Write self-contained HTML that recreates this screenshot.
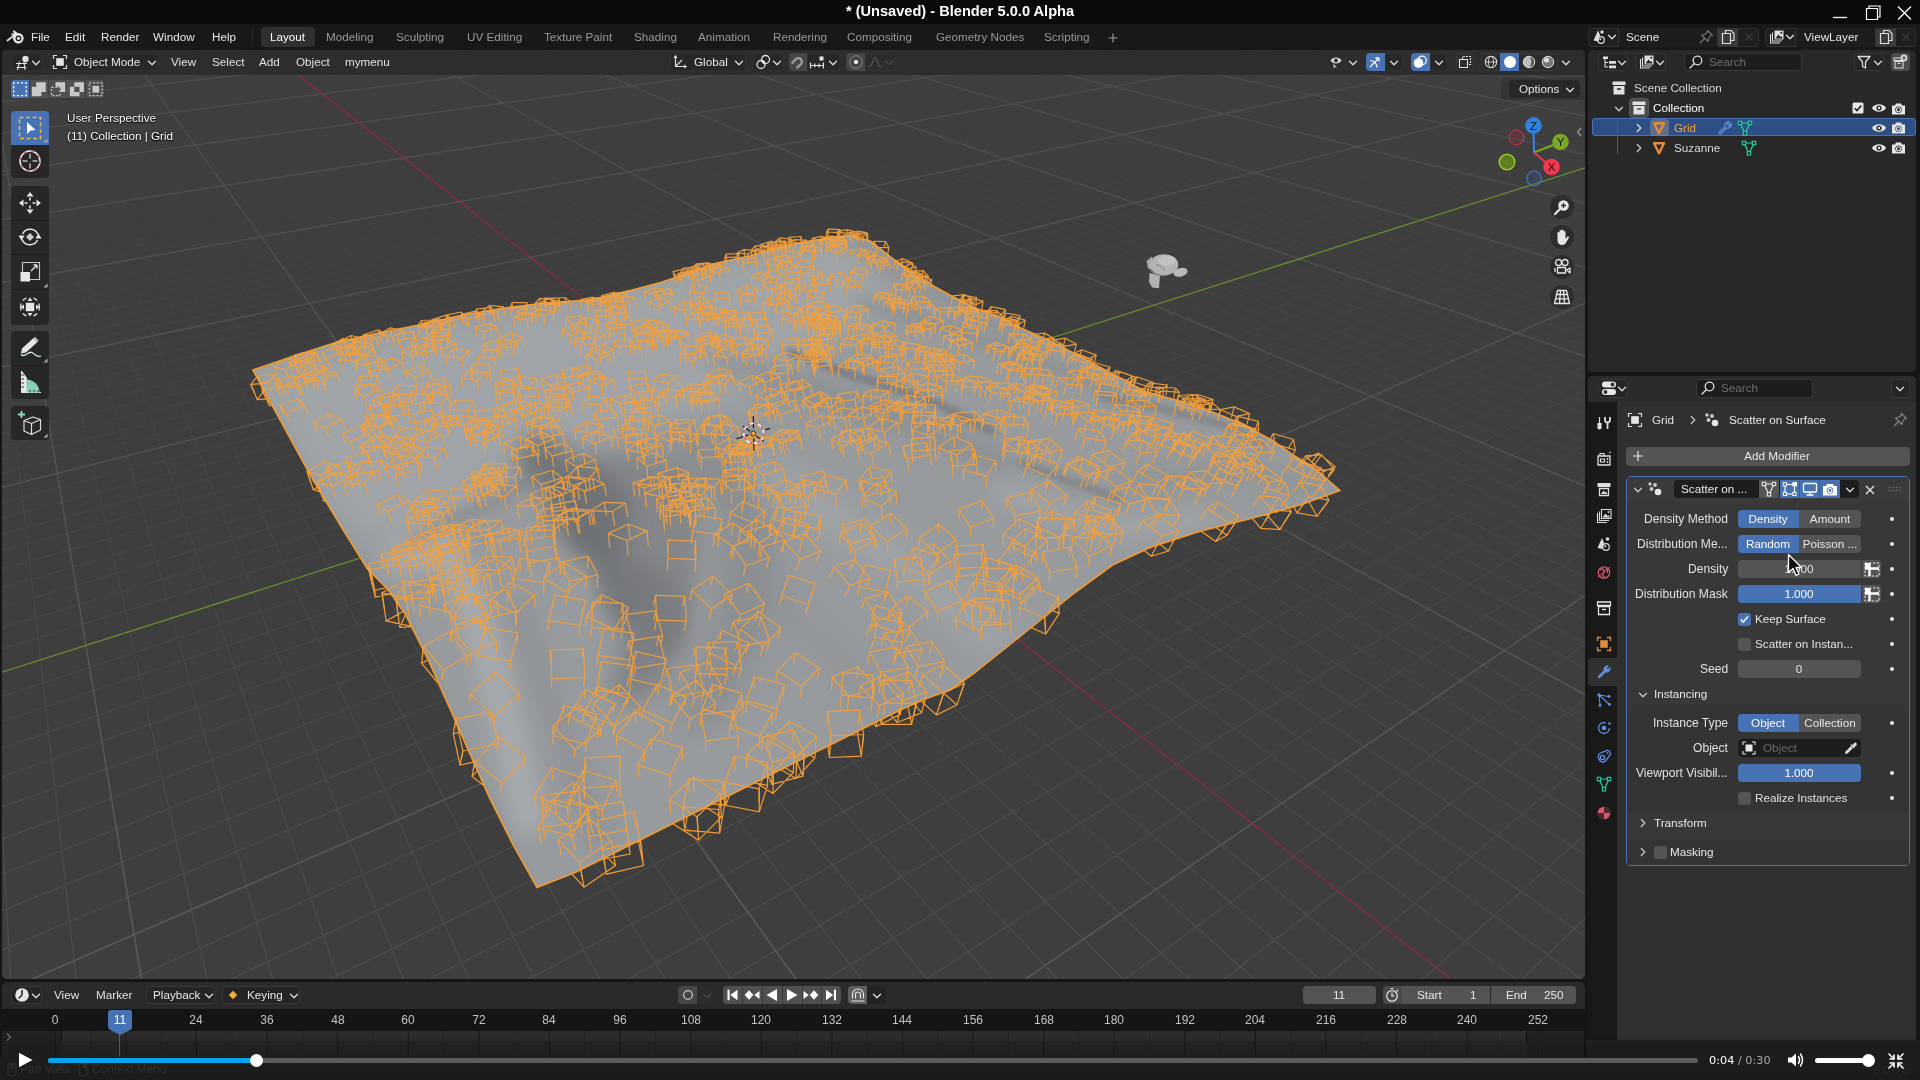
<!DOCTYPE html>
<html lang="en"><head><meta charset="utf-8"><title>Blender</title>
<style>
*{box-sizing:border-box;margin:0;padding:0}
html,body{width:1920px;height:1080px;overflow:hidden;background:#161616}
body{position:relative;font-family:"Liberation Sans",sans-serif;font-size:11.7px;color:#e0e0e0;line-height:1}
.abs,#page *{position:absolute}
#page{position:absolute;left:0;top:0;width:1920px;height:1080px;overflow:hidden;transform:translateZ(0)}
#titlebar{left:0;top:0;width:1920px;height:24px;background:#0a0a0a}
#title{will-change:transform;left:0;top:0;width:1920px;height:24px;text-align:center;font-weight:bold;font-size:14.6px;line-height:23px;color:#fff}
#menubar{left:0;top:24px;width:1920px;height:26px;background:#181818}
#vpwrap{left:2px;top:50px;width:1583px;height:929px;border-radius:5px;overflow:hidden;background:#3e3e3e}
#vp{left:0;top:0}
#vphead{left:0;top:0;width:1582px;height:25px;background:rgba(46,46,46,0.93)}
#timeline{left:2px;top:982px;width:1582px;height:75px;border-radius:5px 5px 0 0;background:#1c1c1c;overflow:hidden}
#outliner{left:1588px;top:50px;width:328px;height:322px;border-radius:5px;background:#282828;overflow:hidden}
#props{left:1588px;top:376px;width:328px;height:690px;border-radius:5px;background:#303030;overflow:hidden}
#vidbar{left:0;top:1040px;width:1920px;height:40px;background:rgba(20,20,20,0.72)}
.t{white-space:nowrap;line-height:14px;height:14px;will-change:transform}

</style></head>
<body>
<div id="page">
<div id="titlebar"></div>
<div id="title">* (Unsaved) - Blender 5.0.0 Alpha</div>
<div id="menubar"></div>
<svg style="left:1828px;top:2px;" width="90" height="20" viewBox="0 0 90 20"><path d="M5 15.5H19" stroke="#fff" stroke-width="1.3"/><path d="M38.5 6.5H49.5V17.5H38.5Z" fill="none" stroke="#fff" stroke-width="1.2"/><path d="M41 6.5V4H52V15H49.5" fill="none" stroke="#fff" stroke-width="1.2"/><path d="M70 4.5L83 17.5M83 4.5L70 17.5" stroke="#fff" stroke-width="1.3"/></svg>
<svg style="left:6px;top:29px;" width="20" height="16" viewBox="0 0 20 16"><path d="M1.5 11.5L9.5 5.3L6.2 5.3M9.5 5.3L7.8 2.2L12 5.5" fill="none" stroke="#e6e6e6" stroke-width="1.7" stroke-linecap="round" stroke-linejoin="round"/><circle cx="12.3" cy="9.3" r="5.3" fill="#e6e6e6"/><circle cx="12.5" cy="9.3" r="2.9" fill="#181818"/><circle cx="12.5" cy="9.3" r="1.6" fill="#e6e6e6"/></svg>
<div class="t" style="left:31px;top:30px;color:#e6e6e6">File</div>
<div class="t" style="left:65px;top:30px;color:#e6e6e6">Edit</div>
<div class="t" style="left:101px;top:30px;color:#e6e6e6">Render</div>
<div class="t" style="left:153px;top:30px;color:#e6e6e6">Window</div>
<div class="t" style="left:212px;top:30px;color:#e6e6e6">Help</div>
<div style="left:252px;top:29px;width:1px;height:17px;background:#2e2e2e"></div>
<div style="left:260.5px;top:27px;width:54px;height:20px;background:#303030;border-radius:4px"></div>
<div class="t" style="left:270px;top:30px;color:#fff">Layout</div>
<div class="t" style="left:326px;top:30px;color:#989898">Modeling</div>
<div class="t" style="left:396px;top:30px;color:#989898">Sculpting</div>
<div class="t" style="left:467px;top:30px;color:#989898">UV Editing</div>
<div class="t" style="left:544px;top:30px;color:#989898">Texture Paint</div>
<div class="t" style="left:634px;top:30px;color:#989898">Shading</div>
<div class="t" style="left:698px;top:30px;color:#989898">Animation</div>
<div class="t" style="left:773px;top:30px;color:#989898">Rendering</div>
<div class="t" style="left:847px;top:30px;color:#989898">Compositing</div>
<div class="t" style="left:936px;top:30px;color:#989898">Geometry Nodes</div>
<div class="t" style="left:1044px;top:30px;color:#989898">Scripting</div>
<svg style="left:1107px;top:31.5px;" width="12" height="12" viewBox="0 0 12 12"><path d="M6 1.5V10.5M1.5 6H10.5" stroke="#999" stroke-width="1.2"/></svg>
<div style="left:1587.5px;top:27.5px;width:171.5px;height:19px;background:#1f1f1f;border-radius:4px;border:1px solid #333"></div>
<div style="left:1618px;top:27.5px;width:100px;height:19px;background:#1d1d1d;border-left:1px solid #333;border-right:1px solid #333"></div>
<div style="left:1718px;top:28.5px;width:20px;height:17px;background:#3a3a3a"></div>
<svg style="left:1592px;top:29px;" width="16" height="16" viewBox="0 0 16 16"><path d="M1.5 11.5L6 1.5L8 6L6.5 12.5Z" fill="#ddd"/><circle cx="10" cy="3" r="1.7" fill="#ddd"/><circle cx="9" cy="11" r="3.3" fill="none" stroke="#ddd" stroke-width="1.2"/><circle cx="8.3" cy="10.3" r="1" fill="#ddd"/></svg>
<svg style="left:1607px;top:33px;" width="10" height="8" viewBox="0 0 10 8"><path d="M1.5 2.3L5 5.8L8.5 2.3" fill="none" stroke="#ddd" stroke-width="1.3" stroke-linecap="round" stroke-linejoin="round"/></svg>
<div class="t" style="left:1626px;top:30px;color:#e6e6e6">Scene</div>
<svg style="left:1698px;top:29px;" width="16" height="16" viewBox="0 0 16 16"><path d="M9.5 1.5L14.5 6.5L12.5 7L10.5 9.5L10 12.5L3.5 6L6.5 5.5L9 3.5ZM6.5 9.5L2 14" fill="none" stroke="#777" stroke-width="1.1" stroke-linejoin="round"/></svg>
<svg style="left:1720px;top:29px;" width="16" height="16" viewBox="0 0 16 16"><path d="M5.5 4.5V1.5H11L14 4.5V11.5H10.5" fill="none" stroke="#ddd" stroke-width="1.2"/><path d="M2.5 4.5H10.5V14.5H2.5Z" fill="none" stroke="#ddd" stroke-width="1.2"/></svg>
<svg style="left:1743px;top:31px;" width="12" height="12" viewBox="0 0 12 12"><path d="M2.5 2.5L9.5 9.5M9.5 2.5L2.5 9.5" stroke="#3a3a3a" stroke-width="1.3"/></svg>
<div style="left:1764.5px;top:27.5px;width:151.5px;height:19px;background:#1f1f1f;border-radius:4px;border:1px solid #333"></div>
<div style="left:1795px;top:27.5px;width:80.5px;height:19px;background:#1d1d1d;border-left:1px solid #333;border-right:1px solid #333"></div>
<div style="left:1875.5px;top:28.5px;width:20px;height:17px;background:#3a3a3a"></div>
<svg style="left:1768px;top:29px;" width="18" height="16" viewBox="0 0 18 16"><path d="M2.5 5V14H12" fill="none" stroke="#ddd" stroke-width="1.1"/><path d="M4.5 3.5V12H14" fill="none" stroke="#ddd" stroke-width="1.1"/><path d="M6.5 1.5H15.5V10.5H6.5Z" fill="#ddd"/><path d="M7.5 9.5L10.5 5.5L12.5 8L13.5 7L14.5 9.5Z" fill="#1f1f1f"/><circle cx="13.3" cy="3.8" r="1" fill="#1f1f1f"/></svg>
<svg style="left:1784.5px;top:33px;" width="10" height="8" viewBox="0 0 10 8"><path d="M1.5 2.3L5 5.8L8.5 2.3" fill="none" stroke="#ddd" stroke-width="1.3" stroke-linecap="round" stroke-linejoin="round"/></svg>
<div class="t" style="left:1803.5px;top:30px;color:#e6e6e6">ViewLayer</div>
<svg style="left:1877.5px;top:29px;" width="16" height="16" viewBox="0 0 16 16"><path d="M5.5 4.5V1.5H11L14 4.5V11.5H10.5" fill="none" stroke="#ddd" stroke-width="1.2"/><path d="M2.5 4.5H10.5V14.5H2.5Z" fill="none" stroke="#ddd" stroke-width="1.2"/></svg>
<svg style="left:1900px;top:31px;" width="12" height="12" viewBox="0 0 12 12"><path d="M2.5 2.5L9.5 9.5M9.5 2.5L2.5 9.5" stroke="#3a3a3a" stroke-width="1.3"/></svg>
<div id="vpwrap">
<svg id="vp" width="1583" height="929" viewBox="0 0 1583 929">
<defs>
<linearGradient id="gmg" x1="0" y1="0" x2="0" y2="1"><stop offset="0" stop-color="#fff" stop-opacity="0.08"/><stop offset="0.35" stop-color="#fff" stop-opacity="0.32"/><stop offset="1" stop-color="#fff" stop-opacity="1"/></linearGradient>
<linearGradient id="gMg" x1="0" y1="0" x2="0" y2="1"><stop offset="0" stop-color="#fff" stop-opacity="0.45"/><stop offset="1" stop-color="#fff" stop-opacity="1"/></linearGradient>
<mask id="gm"><rect width="1583" height="929" fill="url(#gmg)"/></mask>
<mask id="gM"><rect width="1583" height="929" fill="url(#gMg)"/></mask>
<clipPath id="mc"><path d="M250.9 320L290.5 306.5L332.2 292.9L373.8 283.5L415.5 275.2L457.2 265.8L498.8 258.5L540.5 253.3L582.2 250.2L598 247.5L629.3 240.2L660.5 231.9L687.6 222.5L714.7 213.1L748 205.8L775.1 197.5L806.3 191.3L827.2 188.1L848 185L868.8 191.3L889.7 207.9L910.5 222.5L931.3 236L952.2 247.5L973 257.9L988.4 262.9L1019.7 278.5L1050.9 292.1L1082.2 308.8L1113.4 325.4L1144.7 342.1L1175.9 350.4L1207.2 360.8L1238.4 373.3L1269.7 390L1290.5 404.6L1311.3 417.1L1338 440.5L1298 455L1248 468.8L1198 481.3L1148 497.5L1110.5 515L1073 542.5L1048 562.5L1023 582.5L998 602.5L973 622.5L948 640L923 649L898 660L848 685L773 722.5L698 760L623 797.5L573 822.5L535 837.5L510.6 793.9L487.7 748.1L467.3 702.3L447 656.4L426.6 610.6L403.7 564.8L385.8 539.3L365.5 519L340 478.2L309.5 427.3L278.9 371.3Z"/></clipPath>
<filter id="b6" filterUnits="userSpaceOnUse" x="0" y="0" width="1600" height="1000"><feGaussianBlur stdDeviation="6"/></filter>
<filter id="b10" filterUnits="userSpaceOnUse" x="0" y="0" width="1600" height="1000"><feGaussianBlur stdDeviation="10"/></filter>
<filter id="b16" filterUnits="userSpaceOnUse" x="0" y="0" width="1600" height="1000"><feGaussianBlur stdDeviation="16"/></filter>
<filter id="b3" filterUnits="userSpaceOnUse" x="0" y="0" width="1600" height="1000"><feGaussianBlur stdDeviation="3"/></filter>
</defs>
<rect width="1583" height="929" fill="#3e3e3e"/>
<path d="M-5 -3.4L13 -5M-5 -1.5L33.8 -5M-5 0.5L54.6 -5M-5 2.5L75.4 -5M-5 6.5L117 -5M-5 8.6L137.8 -5M-5 10.7L158.6 -5M-5 12.8L179.4 -5M-5 15L200.2 -5M-5 17.2L221.1 -5M-5 19.4L241.9 -5M-5 21.7L262.7 -5M-5 24L283.5 -5M-5 28.7L325.1 -5M-5 31.2L345.9 -5M-5 33.7L366.7 -5M-5 36.2L387.5 -5M-5 38.8L408.3 -5M-5 41.4L429.1 -5M-5 44L449.9 -5M-5 46.7L470.7 -5M-5 49.5L491.5 -5M-5 55.2L533.1 -5M-5 58.1L554 -5M-5 61.1L574.8 -5M-5 64.1L595.6 -5M-5 67.2L616.4 -5M-5 70.4L637.2 -5M-5 73.6L658 -5M-5 76.9L678.8 -5M-5 80.2L699.6 -5M-5 87.1L741.2 -5M-5 90.7L762 -5M-5 94.3L782.8 -5M-5 98L803.6 -5M-5 101.8L824.4 -5M-5 105.7L845.2 -5M-5 109.7L866 -5M-5 113.7L886.8 -5M-5 117.9L907.7 -5M-5 126.4L949.3 -5M-5 130.9L970.1 -5M-5 135.4L990.9 -5M-5 140.1L1011.7 -5M-5 144.9L1032.5 -5M-5 149.7L1053.3 -5M-5 154.7L1074.1 -5M-5 159.9L1094.9 -5M-5 165.1L1115.7 -5M-5 176.1L1157.3 -5M-5 181.8L1178.1 -5M-5 187.6L1198.9 -5M-5 193.6L1219.7 -5M-5 199.8L1240.6 -5M-5 206.1L1261.4 -5M-5 212.6L1282.2 -5M-5 219.3L1303 -5M-5 226.2L1323.8 -5M-5 240.7L1365.4 -5M-5 248.2L1386.2 -5M-5 256L1407 -5M-5 264L1427.8 -5M-5 272.3L1448.6 -5M-5 280.9L1469.4 -5M-5 289.7L1490.2 -5M-5 298.9L1511 -5M-5 685.9L8.8 934M-5 308.3L1531.8 -5M-5 218.3L74.6 934M-5 328.2L1573.4 -5M-2.4 -5L206 934M-5 338.7L1588 -3.7M11.3 -5L271.8 934M-5 349.6L1588 0.9M25 -5L337.5 934M-5 360.9L1588 5.7M38.7 -5L403.2 934M-5 372.6L1588 10.6M52.4 -5L468.9 934M-5 384.8L1588 15.7M66.1 -5L534.7 934M-5 397.4L1588 21.1M79.8 -5L600.4 934M-5 410.6L1588 26.6M93.5 -5L666.1 934M-5 424.3L1588 32.4M107.2 -5L731.9 934M-5 453.5L1588 44.7M134.7 -5L863.3 934M-5 469.1L1588 51.2M148.4 -5L929.1 934M-5 485.4L1588 58.1M162.1 -5L994.8 934M-5 502.4L1588 65.2M175.8 -5L1060.5 934M-5 520.2L1588 72.7M189.5 -5L1126.2 934M-5 538.9L1588 80.6M203.2 -5L1192 934M-5 558.6L1588 88.9M216.9 -5L1257.7 934M-5 579.2L1588 97.5M230.6 -5L1323.4 934M-5 600.9L1588 106.7M244.3 -5L1389.2 934M-5 647.8L1588 126.4M271.7 -5L1520.6 934M-5 673.3L1588 137.2M285.4 -5L1586.3 934M-5 700.3L1588 148.5M299.1 -5L1588 889.5M-5 728.9L1588 160.5M312.9 -5L1588 847.2M-5 759.2L1588 173.3M326.6 -5L1588 808M-5 791.5L1588 186.9M340.3 -5L1588 771.4M-5 825.9L1588 201.4M354 -5L1588 737.3M-5 862.7L1588 216.8M367.7 -5L1588 705.4M-5 902L1588 233.4M381.4 -5L1588 675.5M118.4 934L1588 270.3M408.8 -5L1588 620.9M218.2 934L1588 290.9M422.5 -5L1588 595.9M317.9 934L1588 313.3M436.2 -5L1588 572.4M417.7 934L1588 337.5M449.9 -5L1588 550.1M517.5 934L1588 363.9M463.6 -5L1588 529M617.2 934L1588 392.8M477.3 -5L1588 508.9M717 934L1588 424.6M491.1 -5L1588 489.9M816.8 934L1588 459.6M504.8 -5L1588 471.8M916.5 934L1588 498.4M518.5 -5L1588 454.6M1116.1 934L1588 590.4M545.9 -5L1588 422.4M1215.8 934L1588 645.3M559.6 -5L1588 407.4M1315.6 934L1588 708M573.3 -5L1588 393.1M1415.4 934L1588 780M587 -5L1588 379.4M1515.1 934L1588 863.7M600.7 -5L1588 366.2M614.4 -5L1588 353.6M628.1 -5L1588 341.5M641.8 -5L1588 329.8M655.5 -5L1588 318.6M683 -5L1588 297.5M696.7 -5L1588 287.5M710.4 -5L1588 277.8M724.1 -5L1588 268.5M737.8 -5L1588 259.6M751.5 -5L1588 250.9M765.2 -5L1588 242.5M778.9 -5L1588 234.4M792.6 -5L1588 226.5M820 -5L1588 211.6M833.7 -5L1588 204.4M847.4 -5L1588 197.5M861.2 -5L1588 190.8M874.9 -5L1588 184.3M888.6 -5L1588 177.9M902.3 -5L1588 171.8M916 -5L1588 165.8M929.7 -5L1588 160M957.1 -5L1588 148.9M970.8 -5L1588 143.5M984.5 -5L1588 138.3M998.2 -5L1588 133.2M1011.9 -5L1588 128.3M1025.6 -5L1588 123.5M1039.4 -5L1588 118.8M1053.1 -5L1588 114.2M1066.8 -5L1588 109.7M1094.2 -5L1588 101.1M1107.9 -5L1588 96.9M1121.6 -5L1588 92.9M1135.3 -5L1588 88.9M1149 -5L1588 85M1162.7 -5L1588 81.2M1176.4 -5L1588 77.5M1190.1 -5L1588 73.9M1203.8 -5L1588 70.4M1231.3 -5L1588 63.5M1245 -5L1588 60.2M1258.7 -5L1588 56.9M1272.4 -5L1588 53.7M1286.1 -5L1588 50.6M1299.8 -5L1588 47.5M1313.5 -5L1588 44.5M1327.2 -5L1588 41.6M1340.9 -5L1588 38.7M1368.3 -5L1588 33.1M1382 -5L1588 30.4M1395.7 -5L1588 27.7M1409.5 -5L1588 25.1M1423.2 -5L1588 22.5M1436.9 -5L1588 20M1450.6 -5L1588 17.5M1464.3 -5L1588 15.1M1478 -5L1588 12.7M1505.4 -5L1588 8.1M1519.1 -5L1588 5.8M1532.8 -5L1588 3.6M1546.5 -5L1588 1.4M1560.2 -5L1588 -0.8M1573.9 -5L1588 -2.9M1587.7 -5L1588 -4.9" stroke="#4d4d4d" stroke-width="1.4" fill="none" mask="url(#gm)"/>
<path d="M-5 4.5L96.2 -5M-5 26.3L304.3 -5M-5 52.3L512.3 -5M-5 83.6L720.4 -5M-5 122.1L928.5 -5M-5 170.5L1136.5 -5M-5 233.4L1344.6 -5M-5 318.1L1552.6 -5M-5 61.8L140.3 934M-5 438.6L1588 38.4M120.9 -5L797.6 934M18.6 934L1588 251.2M395.1 -5L1588 647.3M1016.3 934L1588 541.8M532.2 -5L1588 438.1M669.2 -5L1588 307.9M806.3 -5L1588 218.9M943.4 -5L1588 154.4M1080.5 -5L1588 105.4M1217.5 -5L1588 66.9M1354.6 -5L1588 35.9M1491.7 -5L1588 10.4" stroke="#5c5c5c" stroke-width="1.5" fill="none" mask="url(#gM)"/>
<path d="M258 -5L1454.9 934" stroke="#8c2c3f" stroke-width="1.3" fill="none"/>
<path d="M-5 623.7L1588 116.3" stroke="#6a8f2a" stroke-width="1.3" fill="none"/>
<path d="M272.4 348.3L278.7 339.6L261.9 340.8L255.3 349.5ZM266.1 333.2L272.4 348.3M272.6 324.6L278.7 339.6M255.7 325.8L261.9 340.8M248.9 334.4L255.3 349.5M282.5 353.5L300.4 347.9L298.3 340.4L280.6 345.9ZM275.5 338.5L282.5 353.5M293.7 332.9L300.4 347.9M291.6 325.5L298.3 340.4M273.6 331.1L280.6 345.9M266 348.1L267.5 355.7L285.6 350.2L283.9 342.6ZM259 333.2L266 348.1M260.4 340.8L267.5 355.7M278.7 335.2L285.6 350.2M277 327.8L283.9 342.6M308.7 371.1L302.6 364.2L284.6 371.3L290.6 378.3ZM302.3 355.5L308.7 371.1M296.1 348.8L302.6 364.2M277.9 355.8L284.6 371.3M283.9 362.7L290.6 378.3M324.8 443.9L342.1 434.2L328.7 430L311.3 439.5ZM318.5 425.4L324.8 443.9M336 416L342.1 434.2M322.5 411.8L328.7 430M304.9 421.2L311.3 439.5M354.3 429.8L332.5 434.5L332.2 444.1L354.3 439.2ZM348.2 411.6L354.3 429.8M326.3 416.3L332.5 434.5M325.8 425.7L332.2 444.1M348.1 420.9L354.3 439.2M1307 432.9L1287.2 426.9L1290.8 440.6L1310.9 446.6ZM1319 417.7L1307 432.9M1298.9 411.6L1287.2 426.9M1302.8 425.2L1290.8 440.6M1323.1 431.4L1310.9 446.6M353.5 445.1L338.9 441L321.7 450.8L336.3 455.2ZM347.6 426.4L353.5 445.1M333 422.3L338.9 441M315.5 432L321.7 450.8M330.2 436.2L336.3 455.2M1295 462.9L1315 466.3L1307 451.7L1287.3 448.3ZM1306.7 446.6L1295 462.9M1326.9 450.1L1315 466.3M1318.6 435.6L1307 451.7M1298.7 432.1L1287.3 448.3M1270.9 448.8L1250.3 441.8L1253.8 455.1L1274.6 462.2ZM1283.2 432.5L1270.9 448.8M1262.4 425.3L1250.3 441.8M1266.1 438.5L1253.8 455.1M1287.2 445.8L1274.6 462.2M1265.4 465.4L1246.6 464L1258.8 478.3L1277.8 479.6ZM1276.5 447.3L1265.4 465.4M1257.5 445.8L1246.6 464M1270 459.9L1258.8 478.3M1289.3 461.4L1277.8 479.6M1224.9 485.2L1204.7 470.9L1193.4 477L1213.7 491.6ZM1237.1 466.5L1224.9 485.2M1216.5 452.3L1204.7 470.9M1205.2 458.2L1193.4 477M1226 472.7L1213.7 491.6M1149.3 506.3L1166.4 501L1147.6 485.6L1130.6 490.7ZM1159.4 486L1149.3 506.3M1176.6 480.8L1166.4 501M1157.4 465.6L1147.6 485.6M1140.3 470.5L1130.6 490.7M1084.9 524.3L1107.4 513.8L1091 496.9L1068.8 507.1ZM1087.1 506.4L1084.9 524.3M1109.9 495.8L1107.4 513.8M1093.2 478.9L1091 496.9M1070.6 489.2L1068.8 507.1M412 522.9L385 530L389.8 535.7L417.4 528.4ZM406.1 497.9L412 522.9M378.8 504.8L385 530M383.5 510.1L389.8 535.7M411.4 503L417.4 528.4M373.2 547.1L402.7 540.7L401.8 534L372.9 540.2ZM366.9 520.2L373.2 547.1M396.7 514L402.7 540.7M395.9 507.9L401.8 534M366.8 513.9L372.9 540.2M1057.2 563.4L1032.1 552.8L1018.6 572.9L1043.8 584ZM1056.3 547.2L1057.2 563.4M1030.8 536.6L1032.1 552.8M1016.9 557L1018.6 572.9M1042.6 568L1043.8 584M979.8 568.4L981.6 591.4L1009.9 589.4L1007.7 566.3ZM977.7 552.5L979.8 568.4M979.5 575.7L981.6 591.4M1008.4 573.5L1009.9 589.4M1006.1 550.2L1007.7 566.3M445.3 566.8L442.3 554.8L411.1 559.7L413.3 572ZM441.8 539L445.3 566.8M438.9 527.6L442.3 554.8M407.3 532.3L411.1 559.7M409.5 544L413.3 572M405.9 558.7L384.2 570.9L408.4 576.2L429.7 563.8ZM402 531.2L405.9 558.7M380 542.8L384.2 570.9M404.4 547.8L408.4 576.2M426 536L429.7 563.8M404.2 563.2L397.8 577.3L430 575.9L435.6 561.9ZM400.6 535.7L404.2 563.2M394 549.2L397.8 577.3M426.6 547.9L430 575.9M432.3 534.5L435.6 561.9M419 576.9L449.3 583.8L460.7 562.3L431.1 555.6ZM417.8 555.3L419 576.9M448.7 562.4L449.3 583.8M460.4 541L460.7 562.3M430.2 534.1L431.1 555.6M914 646.4L934.4 665L954.9 654.9L934.5 636.7ZM920.9 624.5L914 646.4M941.7 643L934.4 665M962.4 633.1L954.9 654.9M941.6 615L934.5 636.7M902.2 642.6L878 651.9L895.1 672.5L919.6 662.7ZM907.2 621.6L902.2 642.6M882.6 630.7L878 651.9M900.1 651.2L895.1 672.5M924.9 641.6L919.6 662.7M874.1 676.6L898.3 664.3L880 644.7L856 656.5ZM877 655.9L874.1 676.6M901.6 643.7L898.3 664.3M882.9 624.1L880 644.7M858.5 635.8L856 656.5M875.4 651.2L879.3 674.1L909.6 674.3L904.9 651.5ZM879.4 630.1L875.4 651.2M883.6 652.9L879.3 674.1M914.3 653.2L909.6 674.3M909.5 630.5L904.9 651.5M447.4 597.2L419.6 613.4L439.2 636.6L466.8 619.9ZM449.9 580.2L447.4 597.2M421.5 596.4L419.6 613.4M441.6 620L439.2 636.6M469.8 603.2L466.8 619.9M827.4 707.5L859.3 706.2L855.4 681.8L824.2 683ZM829.1 685.7L827.4 707.5M861.6 684.5L859.3 706.2M857.5 660.2L855.4 681.8M825.8 661.3L824.2 683M767.5 712.8L793.9 728.6L812.9 708L786.8 692.9ZM768 690.9L767.5 712.8M794.9 706.7L793.9 728.6M814.2 686.2L812.9 708M787.6 671L786.8 692.9M769.7 734.3L801.1 726.2L790.4 701.8L759.6 709.4ZM770.2 712.2L769.7 734.3M802.2 704.2L801.1 726.2M791.3 679.8L790.4 701.8M759.9 687.4L759.6 709.4M744.8 726.9L771 743.5L791.3 722.7L765.4 706.7ZM744.8 704.7L744.8 726.9M771.4 721.3L771 743.5M792.2 700.5L791.3 722.7M765.8 684.6L765.4 706.7M485.7 676.9L451.3 683.7L458 715L492.9 707.6ZM489.1 662.3L485.7 676.9M453.9 669.1L451.3 683.7M460.9 701L458 715M496.5 693.6L492.9 707.6M520.2 722.1L493.7 701.7L470.1 726.4L497 747.4ZM524.1 707.7L520.2 722.1M496.9 686.9L493.7 701.7M472.8 711.9L470.1 726.4M500.4 733.3L497 747.4M733.1 729.2L723.9 755.3L757.2 761.8L765.6 735.4ZM732.5 706.3L733.1 729.2M723.2 732.3L723.9 755.3M757.1 738.8L757.2 761.8M765.6 712.5L765.6 735.4M717.7 783L722.6 754.8L688.3 752.2L682.6 780.2ZM716.7 759.5L717.7 783M721.7 731.4L722.6 754.8M686.8 728.8L688.3 752.2M680.9 756.8L682.6 780.2M696.6 790.2L719.3 767.1L692.6 750.4L669.6 772.8ZM695.1 766.7L696.6 790.2M718.4 743.6L719.3 767.1M691.2 727L692.6 750.4M667.7 749.4L669.6 772.8M591.2 811L628.1 804.1L624.5 775.4L588.6 782.1ZM587 786.9L591.2 811M624.6 779.9L628.1 804.1M621.1 751.4L624.5 775.4M584.4 758L588.6 782.1M641.5 815.5L635.4 786.6L599.2 794.9L604.4 824.2ZM638.5 791.1L641.5 815.5M632.4 762.3L635.4 786.6M595.5 770.6L599.2 794.9M600.6 799.9L604.4 824.2M613.4 815.6L592.3 793.7L561.2 814.3L582 837.2ZM609.5 790.9L613.4 815.6M588.1 769.1L592.3 793.7M556.3 789.7L561.2 814.3M577.4 812.4L582 837.2" stroke="#f39a30" stroke-width="1.2" fill="none"/>
<path d="M250.9 320L290.5 306.5L332.2 292.9L373.8 283.5L415.5 275.2L457.2 265.8L498.8 258.5L540.5 253.3L582.2 250.2L598 247.5L629.3 240.2L660.5 231.9L687.6 222.5L714.7 213.1L748 205.8L775.1 197.5L806.3 191.3L827.2 188.1L848 185L868.8 191.3L889.7 207.9L910.5 222.5L931.3 236L952.2 247.5L973 257.9L988.4 262.9L1019.7 278.5L1050.9 292.1L1082.2 308.8L1113.4 325.4L1144.7 342.1L1175.9 350.4L1207.2 360.8L1238.4 373.3L1269.7 390L1290.5 404.6L1311.3 417.1L1338 440.5L1298 455L1248 468.8L1198 481.3L1148 497.5L1110.5 515L1073 542.5L1048 562.5L1023 582.5L998 602.5L973 622.5L948 640L923 649L898 660L848 685L773 722.5L698 760L623 797.5L573 822.5L535 837.5L510.6 793.9L487.7 748.1L467.3 702.3L447 656.4L426.6 610.6L403.7 564.8L385.8 539.3L365.5 519L340 478.2L309.5 427.3L278.9 371.3Z" fill="#979b9e"/>
<g clip-path="url(#mc)"><g transform="translate(-2,-50)" fill="none" stroke-linecap="round" stroke-linejoin="round">
<!-- plateau slightly lighter/bluish upper-left -->
<path d="M250 370L600 298L850 236L900 300L700 420L520 450L420 560L340 520Z" fill="#a3a7aa" filter="url(#b16)" opacity=".8"/>
<!-- main dark valley (upper part strongest) -->
<path d="M540 456L565 482L590 521L612 560L628 600" stroke="#6b6e71" stroke-width="44" filter="url(#b10)" opacity=".8"/>
<path d="M628 600L640 645L628 685" stroke="#777a7d" stroke-width="36" filter="url(#b10)" opacity=".6"/>
<path d="M560 460L640 452L690 470L700 540L690 620L660 690L625 700L640 640L620 570L585 510Z" fill="#7b7e81" filter="url(#b10)" opacity=".7"/>
<path d="M690 450L735 480L752 560L735 650L700 710" stroke="#808386" stroke-width="44" filter="url(#b16)" opacity=".6"/>
<ellipse cx="590" cy="512" rx="40" ry="46" fill="#6c6f72" filter="url(#b10)" opacity=".75" transform="rotate(-25 590 512)"/>
<ellipse cx="655" cy="610" rx="30" ry="50" fill="#74777a" filter="url(#b10)" opacity=".6" transform="rotate(-20 655 610)"/>
<!-- light tube left of valley -->
<path d="M400 560L440 545L470 600L490 660L510 740L530 820" stroke="#abafb2" stroke-width="32" filter="url(#b10)" opacity=".8"/>
<!-- darker strip between tube and valley lower part -->
<path d="M520 610L545 690L575 770L600 840" stroke="#888b8e" stroke-width="24" filter="url(#b10)" opacity=".55"/>
<!-- darker along far-left front edge -->
<path d="M395 610L430 690L470 780L505 850" stroke="#878a8d" stroke-width="12" filter="url(#b6)" opacity=".5"/>
<!-- ridge shadow under plateau edge (left) -->
<path d="M410 545L450 520L500 500L540 470" stroke="#777a7d" stroke-width="9" filter="url(#b6)" opacity=".5"/>
<!-- upper right streaks -->
<path d="M790 352L843 372L935 402L993 432" stroke="#696c6f" stroke-width="7" filter="url(#b3)" opacity=".7"/>
<path d="M720 360L780 380L900 420L1000 462" stroke="#838689" stroke-width="24" filter="url(#b10)" opacity=".5"/>
<path d="M1020 462L1072 482L1118 498" stroke="#717477" stroke-width="7" filter="url(#b3)" opacity=".6"/>
<path d="M1100 396L1160 408L1218 423L1262 443" stroke="#717477" stroke-width="7" filter="url(#b3)" opacity=".6"/>
<path d="M860 300L950 330L1050 365L1120 395" stroke="#85888b" stroke-width="12" filter="url(#b6)" opacity=".5"/>
<!-- soft diagonal bands center/right -->
<path d="M760 470L900 560L1000 640" stroke="#a7abae" stroke-width="34" filter="url(#b16)" opacity=".6"/>
<path d="M720 560L830 650L900 720" stroke="#8b8e91" stroke-width="30" filter="url(#b16)" opacity=".5"/>
<path d="M1000 490L1100 530L1200 520" stroke="#a8acaf" stroke-width="24" filter="url(#b10)" opacity=".5"/>
<path d="M1130 480L1230 470L1320 488" stroke="#898c8f" stroke-width="16" filter="url(#b10)" opacity=".5"/>
<path d="M850 240L900 275L960 305L1010 330" stroke="#8b8e91" stroke-width="16" filter="url(#b6)" opacity=".45"/>
</g>
</g>
<path d="M250.9 320L290.5 306.5L332.2 292.9L373.8 283.5L415.5 275.2L457.2 265.8L498.8 258.5L540.5 253.3L582.2 250.2L598 247.5L629.3 240.2L660.5 231.9L687.6 222.5L714.7 213.1L748 205.8L775.1 197.5L806.3 191.3L827.2 188.1L848 185L868.8 191.3L889.7 207.9L910.5 222.5L931.3 236L952.2 247.5L973 257.9L988.4 262.9L1019.7 278.5L1050.9 292.1L1082.2 308.8L1113.4 325.4L1144.7 342.1L1175.9 350.4L1207.2 360.8L1238.4 373.3L1269.7 390L1290.5 404.6L1311.3 417.1L1338 440.5L1298 455L1248 468.8L1198 481.3L1148 497.5L1110.5 515L1073 542.5L1048 562.5L1023 582.5L998 602.5L973 622.5L948 640L923 649L898 660L848 685L773 722.5L698 760L623 797.5L573 822.5L535 837.5L510.6 793.9L487.7 748.1L467.3 702.3L447 656.4L426.6 610.6L403.7 564.8L385.8 539.3L365.5 519L340 478.2L309.5 427.3L278.9 371.3Z" fill="none" stroke="#f39a30" stroke-width="1.6" stroke-linejoin="round"/>
<path d="M836.5 182.6L837.9 179.6L826.1 179.1L824.5 182ZM836.5 182.6L836.3 189.8M837.9 179.6L837.7 186.8M826.1 179.1L825.9 186.2M824.5 182L824.4 189.3M835.4 181.4L842.7 183.4L852.3 181.7L845 179.7ZM835.4 181.4L835.4 188.7M842.7 183.4L842.7 190.8M852.3 181.7L852.3 189M845 179.7L845 186.9M847.4 183.2L856.1 185L864.7 182.7L856 181ZM847.4 183.2L847.5 190.5M856.1 185L856.2 192.4M864.7 182.7L864.7 190.1M856 181L856.1 188.3M854.5 182.8L849.7 185.4L861.1 186.3L865.8 183.7ZM854.5 182.8L854.4 190.2M849.7 185.4L849.7 192.8M861.1 186.3L861.1 193.8M865.8 183.7L865.7 191.1M787.3 190.4L799.7 189.6L798.9 186.5L786.6 187.3ZM787.3 190.4L787.7 197.8M799.7 189.6L800.1 197M798.9 186.5L799.3 193.9M786.6 187.3L787 194.6M828 186L820.5 188.4L830.6 190L838 187.6ZM828 186L828 193.5M820.5 188.4L820.6 195.9M830.6 190L830.6 197.5M838 187.6L838 195M778 187.9L773.2 191.4L784.7 192.5L789.4 189ZM778 187.9L778.3 195.2M773.2 191.4L773.4 198.7M784.7 192.5L784.9 199.9M789.4 189L789.6 196.3M818.1 190.5L827.5 188.3L819.4 186.3L810 188.4ZM818.1 190.5L818.2 198M827.5 188.3L827.6 195.8M819.4 186.3L819.5 193.7M810 188.4L810.1 195.9M824.3 189.1L835.2 190.3L841.2 187.7L830.3 186.4ZM824.3 189.1L824.3 196.6M835.2 190.3L835.2 197.8M841.2 187.7L841.2 195.2M830.3 186.4L830.3 193.9M804.4 190.2L792.9 189.6L788 192.7L799.6 193.4ZM804.4 190.2L804.7 197.7M792.9 189.6L793.3 197M788 192.7L788.4 200.2M799.6 193.4L800 200.9M871.6 191.4L875 197.5L886.9 197.6L883.5 191.5ZM871.6 191.4L870.3 198.2M875 197.5L873.6 204.4M886.9 197.6L885.6 204.4M883.5 191.5L882.2 198.2M769.7 191.2L758.9 194.4L764.9 197.4L775.8 194.1ZM769.7 191.2L770.6 198.4M758.9 194.4L759.8 201.7M764.9 197.4L765.9 204.7M775.8 194.1L776.7 201.4M783 194.5L783.3 190.8L770.8 192.1L770.4 195.7ZM783 194.5L783.8 201.9M783.3 190.8L784.1 198.2M770.8 192.1L771.7 199.4M770.4 195.7L771.3 203.2M778 190.7L766.7 193.7L771.8 196.5L783.2 193.5ZM778 190.7L779 198M766.7 193.7L767.7 201M771.8 196.5L772.8 203.9M783.2 193.5L784.2 200.8M767.1 197.2L779.6 195.1L777.8 191.5L765.5 193.7ZM767.1 197.2L768.2 204.6M779.6 195.1L780.6 202.5M777.8 191.5L778.8 198.9M765.5 193.7L766.6 201M832.2 189.6L832.3 194L845 194.7L844.8 190.3ZM832.2 189.6L831.6 196.9M832.3 194L831.8 201.4M845 194.7L844.5 202.1M844.8 190.3L844.2 197.6M761.1 199.9L765 195.6L753.1 195.9L749.2 200.2ZM761.1 199.9L762.2 207.3M765 195.6L766 202.9M753.1 195.9L754.1 203.2M749.2 200.2L750.2 207.5M833.7 189.6L825.5 192.3L835.2 195.3L843.4 192.6ZM833.7 189.6L833.4 197M825.5 192.3L825.2 199.8M835.2 195.3L834.8 202.8M843.4 192.6L843 200M799.2 196.9L812 196.3L812.1 193L799.4 193.6ZM799.2 196.9L799.6 204.5M812 196.3L812.4 204M812.1 193L812.4 200.6M799.4 193.6L799.8 201.2M760.9 202L770.4 198.2L762.1 196.4L752.6 200.2ZM760.9 202L762 209.5M770.4 198.2L771.4 205.6M762.1 196.4L763.2 203.8M752.6 200.2L753.7 207.6M772 200.6L782.6 197.1L775.8 194.8L765.2 198.2ZM772 200.6L773 208.1M782.6 197.1L783.6 204.6M775.8 194.8L776.8 202.2M765.2 198.2L766.2 205.6M734.9 203L745.5 204.1L752.6 200.7L742.1 199.6ZM734.9 203L735.6 210.5M745.5 204.1L746.1 211.7M752.6 200.7L753.2 208.3M742.1 199.6L742.7 207.1M828.9 194.7L824.1 199.7L836 203.3L840.7 198.2ZM828.9 194.7L827.9 201.7M824.1 199.7L823.1 206.8M836 203.3L835 210.3M840.7 198.2L839.7 205.2M849 200.4L856.5 206.3L866.8 204.3L859.3 198.5ZM849 200.4L847.7 207.4M856.5 206.3L855.1 213.3M866.8 204.3L865.4 211.4M859.3 198.5L858 205.5M873.8 203.8L862.6 199.4L856.7 203.7L867.9 208.1ZM873.8 203.8L872.4 210.8M862.6 199.4L861.3 206.4M856.7 203.7L855.3 210.7M867.9 208.1L866.5 215.2M809.1 195.2L802 199.3L812.8 202.9L819.9 198.8ZM809.1 195.2L808.5 202.5M802 199.3L801.5 206.6M812.8 202.9L812.3 210.2M819.9 198.8L819.3 206.1M735.5 206.9L736.8 203.5L724.1 204.2L722.7 207.7ZM735.5 206.9L736.3 214.6M736.8 203.5L737.5 211.1M724.1 204.2L724.9 211.8M722.7 207.7L723.4 215.3M810.5 201.8L813.5 197.4L801 196.1L797.8 200.5ZM810.5 201.8L810.3 209.4M813.5 197.4L813.3 204.9M801 196.1L800.8 203.6M797.8 200.5L797.7 208M872.5 204.3L865.2 207.8L875.8 212.3L883.1 208.8ZM872.5 204.3L871.3 211.5M865.2 207.8L864 215M875.8 212.3L874.6 219.5M883.1 208.8L881.8 216M869.9 210.1L882.3 213.4L886 208.7L873.7 205.4ZM869.9 210.1L868.7 217.3M882.3 213.4L881 220.6M886 208.7L884.7 215.9M873.7 205.4L872.5 212.6M900.6 208.5L892.9 211.7L903.1 216.5L910.9 213.2ZM900.6 208.5L899.2 215.6M892.9 211.7L891.5 218.9M903.1 216.5L901.7 223.7M910.9 213.2L909.4 220.4M789.2 208.5L799.3 204.5L790.9 200.2L780.8 204.2ZM789.2 208.5L789.4 215.8M799.3 204.5L799.5 211.8M790.9 200.2L791.1 207.5M780.8 204.2L781.1 211.4M904.2 219.1L914.2 217.2L906.1 211.7L896.1 213.6ZM904.2 219.1L902.7 226.3M914.2 217.2L912.7 224.4M906.1 211.7L904.6 218.9M896.1 213.6L894.7 220.8M870.2 211.2L878.6 216.5L888.4 214.2L880 209ZM870.2 211.2L868.9 218.4M878.6 216.5L877.3 223.8M888.4 214.2L887.1 221.5M880 209L878.7 216.2M706.4 212.9L694.3 213.8L689.8 218.5L702 217.6ZM706.4 212.9L708 220.4M694.3 213.8L696 221.3M689.8 218.5L691.5 226.1M702 217.6L703.6 225.2M789.2 211.9L785.9 205.5L773.1 207L776.3 213.4ZM789.2 211.9L789.1 219M785.9 205.5L785.8 212.6M773.1 207L773.1 214.2M776.3 213.4L776.3 220.6M703.7 216.3L696.9 214.1L685.9 218.3L692.6 220.6ZM703.7 216.3L705.3 223.9M696.9 214.1L698.6 221.6M685.9 218.3L687.6 225.9M692.6 220.6L694.3 228.2M741.4 213.2L754.7 211.9L753.9 208.5L740.7 209.7ZM741.4 213.2L742.1 221.1M754.7 211.9L755.3 219.8M753.9 208.5L754.5 216.3M740.7 209.7L741.4 217.5M706.8 212.8L694.7 216.5L699.4 219.5L711.6 215.7ZM706.8 212.8L708.4 220.3M694.7 216.5L696.4 224.1M699.4 219.5L701.1 227.2M711.6 215.7L713.2 223.3M691 221.3L693.8 216.7L681.1 218.3L678.3 222.9ZM691 221.3L692.8 228.9M693.8 216.7L695.5 224.3M681.1 218.3L682.9 225.8M678.3 222.9L680.1 230.5M780 215.1L778.2 209L765 209L766.7 215.2ZM780 215.1L779.5 222.4M778.2 209L777.7 216.3M765 209L764.6 216.4M766.7 215.2L766.3 222.5M709.9 219.3L718.1 214.5L707.9 213.7L699.7 218.5ZM709.9 219.3L711.6 226.9M718.1 214.5L719.7 222.1M707.9 213.7L709.5 221.3M699.7 218.5L701.4 226.1M798.7 217.4L811.7 216L808.2 209.5L795.4 210.8ZM798.7 217.4L798.5 224.5M811.7 216L811.4 223.2M808.2 209.5L807.9 216.6M795.4 210.8L795.1 218M921.3 220.7L909.2 221L914.3 226.6L926.4 226.3ZM921.3 220.7L919.8 228.1M909.2 221L907.8 228.4M914.3 226.6L912.9 234.1M926.4 226.3L925 233.7M683.9 218.5L671.1 221.7L673.2 225.5L686.2 222.2ZM683.9 218.5L685.6 226.1M671.1 221.7L672.9 229.3M673.2 225.5L675 233.1M686.2 222.2L687.9 229.9M912.1 228.2L918.7 224.6L907.4 220.3L900.6 223.9ZM912.1 228.2L910.7 235.7M918.7 224.6L917.3 232M907.4 220.3L906 227.7M900.6 223.9L899.3 231.4M793.8 215.9L784.7 211L774.8 215.2L783.9 220.2ZM793.8 215.9L793.6 223.1M784.7 211L784.6 218.2M774.8 215.2L774.7 222.5M783.9 220.2L783.8 227.5M906.2 225.2L917.7 229.4L924.2 225.7L912.7 221.5ZM906.2 225.2L904.8 232.6M917.7 229.4L916.3 236.9M924.2 225.7L922.8 233.2M912.7 221.5L911.3 228.9M848.7 221.8L861.3 225.2L865.9 220.3L853.4 216.9ZM848.7 221.8L847.7 229.2M861.3 225.2L860.2 232.6M865.9 220.3L864.8 227.7M853.4 216.9L852.4 224.3M688.8 220.3L675.9 223.5L678 227.2L691 224ZM688.8 220.3L690.6 227.9M675.9 223.5L677.7 231.1M678 227.2L679.7 234.9M691 224L692.7 231.7M726.6 218L718 216.3L707.9 220.9L716.5 222.6ZM726.6 218L728.2 225.8M718 216.3L719.6 224M707.9 220.9L709.5 228.6M716.5 222.6L718.1 230.4M910 231.4L922.3 231L916.9 225.4L904.7 225.7ZM910 231.4L908.6 238.9M922.3 231L920.8 238.5M916.9 225.4L915.5 232.8M904.7 225.7L903.4 233.2M929.7 229.6L917.7 225.6L912 229.6L924.1 233.7ZM929.7 229.6L928.2 237.1M917.7 225.6L916.3 233.1M912 229.6L910.6 237.2M924.1 233.7L922.7 241.2M820.6 223L811.3 218.3L801.3 222.3L810.6 227.1ZM820.6 223L820.4 230.4M811.3 218.3L811.2 225.7M801.3 222.3L801.2 229.8M810.6 227.1L810.4 234.6M797 228.8L798.2 222.9L784.6 221.6L783.3 227.5ZM797 228.8L796.4 236.4M798.2 222.9L797.7 230.4M784.6 221.6L784.2 229.1M783.3 227.5L782.8 235M839.9 222.4L828.4 224.5L835.6 230.2L847.1 228ZM839.9 222.4L839 230M828.4 224.5L827.6 232.1M835.6 230.2L834.7 237.8M847.1 228L846.2 235.6M761.7 225.4L774.2 228.8L780 223.5L767.6 220.2ZM761.7 225.4L761.3 233M774.2 228.8L773.7 236.4M780 223.5L779.4 231.1M767.6 220.2L767.1 227.7M699.9 223.8L689 228.3L696.8 230.4L707.8 225.9ZM699.9 223.8L701.6 231.6M689 228.3L690.7 236.1M696.8 230.4L698.5 238.3M707.8 225.9L709.4 233.7M749.6 226.7L761.3 230.6L768.6 225.7L757 221.9ZM749.6 226.7L749.2 234.3M761.3 230.6L760.9 238.2M768.6 225.7L768.2 233.3M757 221.9L756.6 229.5M918.9 235.2L906.5 231.8L900.8 235.7L913.2 239.1ZM918.9 235.2L917.7 243M906.5 231.8L905.4 239.6M900.8 235.7L899.6 243.5M913.2 239.1L912.1 247M812.6 228.4L815.4 234.7L829 233.8L826.1 227.5ZM812.6 228.4L812.3 236M815.4 234.7L815.1 242.3M829 233.8L828.6 241.4M826.1 227.5L825.8 235M907.8 239.8L905 234.6L891.6 234.1L894.3 239.4ZM907.8 239.8L906.7 247.7M905 234.6L903.9 242.3M891.6 234.1L890.5 241.9M894.3 239.4L893.2 247.2M853.4 230.6L840.5 231.5L845.3 237.2L858.3 236.3ZM853.4 230.6L852.5 238.3M840.5 231.5L839.7 239.2M845.3 237.2L844.5 245M858.3 236.3L857.4 244.1M661.8 239L651.6 237.7L642.2 242.3L652.4 243.6ZM661.8 239L663.3 247M651.6 237.7L653.1 245.7M642.2 242.3L643.8 250.3M652.4 243.6L654 251.7M814.2 237.3L803.2 233L794.5 237L805.6 241.4ZM814.2 237.3L813.5 245.1M803.2 233L802.6 240.8M794.5 237L793.9 244.8M805.6 241.4L804.9 249.3M778.6 235.1L787 240.3L798.3 237.4L789.9 232.3ZM778.6 235.1L778.2 242.9M787 240.3L786.5 248.2M798.3 237.4L797.7 245.3M789.9 232.3L789.4 240.1M779 237.6L774 231.9L760.9 233.4L765.8 239ZM779 237.6L778.6 245.4M774 231.9L773.7 239.7M760.9 233.4L760.6 241.2M765.8 239L765.4 246.9M612.2 242.3L599.7 245.7L605.9 248.8L618.5 245.4ZM612.2 242.3L613.6 250.3M599.7 245.7L601.1 253.7M605.9 248.8L607.3 257M618.5 245.4L619.8 253.5M705.1 236L691.9 235L687.2 241.8L700.5 242.9ZM705.1 236L706.1 243.5M691.9 235L692.9 242.5M687.2 241.8L688.2 249.3M700.5 242.9L701.5 250.4M607.5 247.7L621 247.3L624.9 242.7L611.5 243.1ZM607.5 247.7L608.9 255.9M621 247.3L622.4 255.4M624.9 242.7L626.2 250.8M611.5 243.1L612.9 251.2M970.1 249.3L962.3 244.6L950.6 245.9L958.4 250.6ZM970.1 249.3L968.8 257.4M962.3 244.6L961 252.6M950.6 245.9L949.4 253.9M958.4 250.6L957.1 258.7M974.8 247.5L961.1 245.1L957.8 249.5L971.6 252ZM974.8 247.5L973.6 255.5M961.1 245.1L960 253.1M957.8 249.5L956.6 257.5M971.6 252L970.4 260M653.9 241.6L656.9 245.8L670.7 242.8L667.6 238.6ZM653.9 241.6L655.4 249.6M656.9 245.8L658.4 253.9M670.7 242.8L672.1 250.9M667.6 238.6L669 246.6M755.1 239.2L744.5 235.5L735 240.8L745.6 244.6ZM755.1 239.2L755.6 247M744.5 235.5L745.1 243.2M735 240.8L735.7 248.6M745.6 244.6L746.2 252.4M770.1 238.3L776.3 243.9L789.1 241.9L782.8 236.4ZM770.1 238.3L769.7 246.2M776.3 243.9L775.9 251.9M789.1 241.9L788.6 249.9M782.8 236.4L782.3 244.3M606.1 251.6L619.7 248.6L615.3 244.9L601.9 247.9ZM606.1 251.6L607.5 259.8M619.7 248.6L621 256.7M615.3 244.9L616.7 252.9M601.9 247.9L603.3 256M889.3 244.2L875.5 241.9L872.4 246.7L886.4 249ZM889.3 244.2L888.3 252.3M875.5 241.9L874.6 250M872.4 246.7L871.5 254.8M886.4 249L885.4 257.1M887.2 242.5L878.3 245.7L889.4 250L898.3 246.7ZM887.2 242.5L886.3 250.5M878.3 245.7L877.4 253.8M889.4 250L888.4 258.1M898.3 246.7L897.3 254.8M585.8 253L598.1 250.3L590.5 247.1L578.3 249.8ZM585.8 253L586.5 261.4M598.1 250.3L598.8 258.6M590.5 247.1L591.2 255.3M578.3 249.8L579 258.1M961.5 251.3L974 254.6L981 251.2L968.7 248ZM961.5 251.3L960.5 259.5M974 254.6L972.9 262.8M981 251.2L979.9 259.4M968.7 248L967.6 256.1M822.3 242.4L808.3 240.5L805.6 245.9L819.7 247.9ZM822.3 242.4L821.6 250.4M808.3 240.5L807.8 248.5M805.6 245.9L805 253.9M819.7 247.9L819 255.9M620.1 246.9L613.9 251.7L626.9 252L632.9 247.1ZM620.1 246.9L621.5 255M613.9 251.7L615.4 259.9M626.9 252L628.3 260.2M632.9 247.1L634.3 255.2M928.8 251.4L923.1 246.6L910 247.3L915.6 252.2ZM928.8 251.4L927.7 259.7M923.1 246.6L922 254.7M910 247.3L909 255.5M915.6 252.2L914.6 260.4M712.7 242.8L713 249.4L727.4 248.2L726.9 241.7ZM712.7 242.8L713.5 250.6M713 249.4L713.8 257.2M727.4 248.2L728.1 256.1M726.9 241.7L727.7 249.4M598.3 248.6L585.1 251.2L590.8 254.8L604.1 252.1ZM598.3 248.6L599.2 256.8M585.1 251.2L586.1 259.5M590.8 254.8L591.8 263.2M604.1 252.1L605 260.4M554.5 252.7L568.3 251.6L563.1 247.5L549.4 248.5ZM554.5 252.7L554.6 261.1M568.3 251.6L568.3 259.9M563.1 247.5L563.2 255.8M549.4 248.5L549.6 256.9M543.2 252.5L558 252.7L556.9 248.2L542.2 248ZM543.2 252.5L543.3 260.9M558 252.7L558 261.1M556.9 248.2L556.9 256.4M542.2 248L542.3 256.3M782.8 242.5L775.2 247L787.6 250.5L795.1 246ZM782.8 242.5L782.4 250.6M775.2 247L774.8 255.1M787.6 250.5L787.1 258.7M795.1 246L794.6 254.1M753.3 250.3L752.4 243.8L738 244.9L738.8 251.4ZM753.3 250.3L753.9 258.2M752.4 243.8L752.9 251.6M738 244.9L738.6 252.7M738.8 251.4L739.4 259.3M667.5 251.5L657.9 247.2L647 252.3L656.7 256.7ZM667.5 251.5L668.4 259.3M657.9 247.2L658.8 255M647 252.3L648 260.2M656.7 256.7L657.6 264.6M899 248.2L890.5 251.5L902.2 255.4L910.7 252.1ZM899 248.2L898.1 256.4M890.5 251.5L889.6 259.7M902.2 255.4L901.2 263.7M910.7 252.1L909.7 260.3M687.3 252L698.1 256L707.8 250.6L697 246.7ZM687.3 252L687.9 259.9M698.1 256L698.7 263.9M707.8 250.6L708.3 258.5M697 246.7L697.6 254.6M533.5 252.6L547.8 254.3L552.1 249.9L537.9 248.3ZM533.5 252.6L533.8 261M547.8 254.3L548 262.7M552.1 249.9L552.2 258.2M537.9 248.3L538.2 256.6M538.5 253L552.4 254.9L557.7 251L543.9 249.1ZM538.5 253L538.7 261.5M552.4 254.9L552.6 263.4M557.7 251L557.8 259.4M543.9 249.1L544.1 257.5M882.4 251.8L893.2 256L902.8 253L892 248.9ZM882.4 251.8L881.5 260.1M893.2 256L892.3 264.4M902.8 253L901.9 261.3M892 248.9L891.1 257.1M926.4 251.9L913.1 252.7L918.9 257.7L932.3 256.9ZM926.4 251.9L925.4 260.1M913.1 252.7L912.2 260.9M918.9 257.7L917.9 266.1M932.3 256.9L931.2 265.2M768.4 247.2L760.7 253L773.2 255.8L780.8 250ZM768.4 247.2L768.8 255.1M760.7 253L761.2 261M773.2 255.8L773.6 263.9M780.8 250L781.2 258M786.1 251.9L777.6 247L765.7 251.1L774.1 256.1ZM786.1 251.9L786.4 259.9M777.6 247L778 255M765.7 251.1L766.1 259.1M774.1 256.1L774.5 264.2M698.6 251L689.1 256.3L700.4 259.7L709.7 254.5ZM698.6 251L699.2 259.1M689.1 256.3L689.8 264.3M700.4 259.7L701 267.8M709.7 254.5L710.3 262.5M906.9 253.9L892.5 252.2L890.7 256.9L905.3 258.6ZM906.9 253.9L906 262.2M892.5 252.2L891.7 260.5M890.7 256.9L889.9 265.3M905.3 258.6L904.4 267M681.9 251.7L672.1 257.4L682.9 261.1L692.8 255.4ZM681.9 251.7L682.8 259.6M672.1 257.4L673 265.3M682.9 261.1L683.8 269.1M692.8 255.4L693.6 263.3M817 258.7L826.9 255.1L816.1 250.9L806.2 254.4ZM817 258.7L816.5 267M826.9 255.1L826.3 263.4M816.1 250.9L815.5 259.2M806.2 254.4L805.7 262.7M1000 264L1003.4 259.6L989.2 256.7L985.6 261.1ZM1000 264L998.5 272.4M1003.4 259.6L1001.9 267.9M989.2 256.7L987.8 265M985.6 261.1L984.2 269.5M609.3 256.3L607.2 262.9L622 263.4L623.9 256.8ZM609.3 256.3L609.9 264.3M607.2 262.9L607.8 270.9M622 263.4L622.5 271.4M623.9 256.8L624.5 264.8M525 252.7L510 252.6L508.6 257.6L523.8 257.7ZM525 252.7L525.6 261.1M510 252.6L510.6 261M508.6 257.6L509.3 266.1M523.8 257.7L524.4 266.2M966.5 260.3L958.6 256.8L946 258.2L953.8 261.8ZM966.5 260.3L965.8 268.9M958.6 256.8L958 265.4M946 258.2L945.5 266.9M953.8 261.8L953.2 270.5M963.7 262L976.5 260.6L968.9 256.9L956.2 258.2ZM963.7 262L962.9 270.7M976.5 260.6L975.7 269.3M968.9 256.9L968.2 265.5M956.2 258.2L955.5 266.9M611.5 265.8L624.2 261.9L616.1 256.6L603.6 260.4ZM611.5 265.8L612.1 273.9M624.2 261.9L624.7 269.9M616.1 256.6L616.7 264.6M603.6 260.4L604.2 268.5M938.4 262.2L952.6 261.4L947.7 257.7L933.7 258.4ZM938.4 262.2L937.9 270.9M952.6 261.4L952 270.1M947.7 257.7L947.1 266.3M933.7 258.4L933.2 267.1M693.2 262.1L706.5 264.3L713.1 258.3L699.9 256.1ZM693.2 262.1L693.9 270.2M706.5 264.3L707.1 272.5M713.1 258.3L713.7 266.4M699.9 256.1L700.6 264.2M854.1 262.7L866.1 259.6L857.3 254.9L845.4 258ZM854.1 262.7L853.8 271.1M866.1 259.6L865.7 268M857.3 254.9L857 263.2M845.4 258L845.1 266.3M705.6 264L720 264.8L723.8 258.2L709.5 257.4ZM705.6 264L706.4 272.1M720 264.8L720.8 272.9M723.8 258.2L724.5 266.2M709.5 257.4L710.3 265.4M822.4 257.1L828.3 262.3L841.9 260.9L836 255.7ZM822.4 257.1L821.9 265.5M828.3 262.3L827.7 270.8M841.9 260.9L841.3 269.4M836 255.7L835.4 264.1M977.3 263L969.6 258.3L956.9 259.5L964.5 264.2ZM977.3 263L976.1 271.5M969.6 258.3L968.5 266.7M956.9 259.5L955.8 268M964.5 264.2L963.4 272.8M594.4 259.6L594.7 265.9L609.9 266.2L609.3 260ZM594.4 259.6L594.4 267.8M594.7 265.9L594.7 274.1M609.9 266.2L609.8 274.4M609.3 260L609.3 268.1M985.6 265.9L999.7 265.9L994.5 260.5L980.6 260.5ZM985.6 265.9L984.1 274.3M999.7 265.9L998.1 274.3M994.5 260.5L993 268.9M980.6 260.5L979.2 268.9M791.9 264.3L800.1 258.7L787.7 255.5L779.4 261.1ZM791.9 264.3L792.2 272.6M800.1 258.7L800.4 266.9M787.7 255.5L788 263.7M779.4 261.1L779.8 269.3M816.7 259.7L805.1 255.9L795.8 259.7L807.4 263.6ZM816.7 259.7L816.3 268.2M805.1 255.9L804.7 264.4M795.8 259.7L795.4 268.2M807.4 263.6L807 272.1M495.3 262.2L501.5 256.8L487.5 255.4L481.2 260.8ZM495.3 262.2L496.5 270.7M501.5 256.8L502.6 265.2M487.5 255.4L488.6 263.9M481.2 260.8L482.3 269.3M515.8 261.8L529.8 263.7L536.3 259L522.5 257.2ZM515.8 261.8L516.5 270.4M529.8 263.7L530.4 272.3M536.3 259L536.9 267.6M522.5 257.2L523.1 265.7M730.4 267.5L733.9 260.7L719.6 260.4L715.9 267.1ZM730.4 267.5L731.4 275.6M733.9 260.7L734.9 268.8M719.6 260.4L720.5 268.5M715.9 267.1L716.9 275.3M1015.5 270.5L1018 265.5L1003.3 263L1000.6 267.8ZM1015.5 270.5L1014 278.9M1018 265.5L1016.5 274M1003.3 263L1001.9 271.4M1000.6 267.8L999.2 276.3M697.3 270.4L704 263.7L690.7 261.9L683.9 268.5ZM697.3 270.4L698.3 278.5M704 263.7L705 271.8M690.7 261.9L691.7 269.9M683.9 268.5L685 276.6M529.6 263.1L541.9 265.9L551.1 261.6L538.8 258.9ZM529.6 263.1L530.2 271.7M541.9 265.9L542.6 274.6M551.1 261.6L551.6 270.2M538.8 258.9L539.4 267.4M713.1 268.1L710.1 261.9L695.5 263.9L698.3 270.1ZM713.1 268.1L713.7 276.3M710.1 261.9L710.7 270.1M695.5 263.9L696.1 272.1M698.3 270.1L699 278.4M476.3 264.5L491.8 262.7L489.5 257.4L474.2 259.2ZM476.3 264.5L477.6 273.1M491.8 262.7L493 271.2M489.5 257.4L490.7 265.9M474.2 259.2L475.4 267.7M723.4 271.4L734.3 266.1L724 262.1L713.1 267.3ZM723.4 271.4L724.2 279.7M734.3 266.1L735.1 274.3M724 262.1L724.8 270.3M713.1 267.3L714 275.6M745.7 261.5L731.3 264.4L735.4 270.6L749.9 267.6ZM745.7 261.5L746.5 269.7M731.3 264.4L732.2 272.6M735.4 270.6L736.2 278.8M749.9 267.6L750.7 275.8M857.9 267.8L859.5 263L844.6 261.7L842.9 266.5ZM857.9 267.8L857.4 276.5M859.5 263L859 271.6M844.6 261.7L844.1 270.4M842.9 266.5L842.4 275.2M764.4 268.3L762.5 261.9L747.6 263.4L749.4 269.9ZM764.4 268.3L764.9 276.6M762.5 261.9L762.9 270.2M747.6 263.4L748.1 271.7M749.4 269.9L749.9 278.2M629.6 274L629.1 267.1L614 267.8L614.4 274.7ZM629.6 274L630.2 282.2M629.1 267.1L629.7 275.2M614 267.8L614.6 275.9M614.4 274.7L615 282.9M1009.6 266.3L1003.3 270L1017.1 274L1023.3 270.2ZM1009.6 266.3L1008 274.8M1003.3 270L1001.7 278.6M1017.1 274L1015.4 282.6M1023.3 270.2L1021.6 278.7M648.4 275L644.2 268.8L629.7 271.7L633.7 277.9ZM648.4 275L649.3 283.3M644.2 268.8L645.2 277M629.7 271.7L630.7 279.8M633.7 277.9L634.7 286.2M827.3 265L813.4 262.4L807.5 267L821.5 269.6ZM827.3 265L826.9 273.6M813.4 262.4L813 271.1M807.5 267L807.1 275.7M821.5 269.6L821.1 278.3M998.1 272.5L1013.4 275.1L1014.9 270.2L999.8 267.7ZM998.1 272.5L996.6 281.1M1013.4 275.1L1011.7 283.7M1014.9 270.2L1013.2 278.7M999.8 267.7L998.3 276.2M971.3 265.7L968.4 270.4L983.5 273.1L986.2 268.3ZM971.3 265.7L969.9 274.2M968.4 270.4L967 279M983.5 273.1L982 281.8M986.2 268.3L984.7 276.9M570.3 273.9L584.3 271.5L577.5 265.3L563.6 267.7ZM570.3 273.9L570.3 282.3M584.3 271.5L584.2 279.8M577.5 265.3L577.4 273.6M563.6 267.7L563.6 276M480.3 265.6L473.6 261.1L459.4 264.4L465.9 269ZM480.3 265.6L481.5 274.3M473.6 261.1L474.9 269.7M459.4 264.4L460.7 273.1M465.9 269L467.3 277.7M813.8 263.2L809.7 268.1L824.5 270L828.4 265.2ZM813.8 263.2L813.4 271.9M809.7 268.1L809.3 276.8M824.5 270L824 278.8M828.4 265.2L827.9 273.9M800.7 266.2L788.1 263.3L779.6 268.8L792.4 271.7ZM800.7 266.2L801.1 274.6M788.1 263.3L788.5 271.8M779.6 268.8L780.1 277.3M792.4 271.7L792.8 280.3M653.2 278.6L660.6 271.9L647.4 269.7L639.9 276.3ZM653.2 278.6L654.3 286.8M660.6 271.9L661.6 280.1M647.4 269.7L648.5 277.8M639.9 276.3L641.1 284.5M525.3 269.9L533.5 265.3L520.3 262.8L511.9 267.5ZM525.3 269.9L526 278.7M533.5 265.3L534.2 273.9M520.3 262.8L521 271.5M511.9 267.5L512.7 276.2M596.7 270.7L583 267.1L575.8 272.8L589.5 276.4ZM596.7 270.7L596.6 279M583 267.1L583.1 275.4M575.8 272.8L575.8 281.1M589.5 276.4L589.5 284.7M819.4 264.6L816.2 269.4L831.3 270.9L834.3 266.1ZM819.4 264.6L819 273.3M816.2 269.4L815.9 278.2M831.3 270.9L830.8 279.8M834.3 266.1L833.8 274.8M619 271L604.2 272.3L608.1 278.8L623.1 277.5ZM619 271L619 279.3M604.2 272.3L604.2 280.6M608.1 278.8L608.1 287.2M623.1 277.5L623 285.9M463.1 267.4L459.2 262L444 265.1L447.7 270.5ZM463.1 267.4L464.8 275.9M459.2 262L460.9 270.5M444 265.1L445.7 273.6M447.7 270.5L449.5 279.1M1016.4 276.3L1014 271L998.9 269.9L1001.1 275.2ZM1016.4 276.3L1014.7 285M1014 271L1012.4 279.6M998.9 269.9L997.4 278.5M1001.1 275.2L999.6 283.9M754.8 270.3L743 266.9L733.3 272.9L745.1 276.4ZM754.8 270.3L755.5 278.6M743 266.9L743.8 275.2M733.3 272.9L734.2 281.2M745.1 276.4L746 284.7M723 276L738 276.5L741.2 269.8L726.3 269.3ZM723 276L723.7 284.3M738 276.5L738.6 284.9M741.2 269.8L741.8 278.1M726.3 269.3L727.1 277.6M812.5 272.8L819.5 267.2L805.9 265L798.8 270.6ZM812.5 272.8L812.8 281.5M819.5 267.2L819.8 275.8M805.9 265L806.3 273.6M798.8 270.6L799.2 279.2M657.9 281.7L666.9 275.2L654.6 272.1L645.5 278.6ZM657.9 281.7L659 289.9M666.9 275.2L667.9 283.4M654.6 272.1L655.7 280.3M645.5 278.6L646.7 286.8M975.8 276.6L980.3 272L965.6 268.9L961 273.4ZM975.8 276.6L974.4 285.4M980.3 272L978.9 280.7M965.6 268.9L964.3 277.5M961 273.4L959.7 282.2M928.1 266.5L920.4 270.2L933.8 274.1L941.4 270.4ZM928.1 266.5L927 275.3M920.4 270.2L919.3 279M933.8 274.1L932.6 283M941.4 270.4L940.2 279.1M437.5 274.1L451.6 269.6L444.2 265.1L430.1 269.6ZM437.5 274.1L439.4 282.7M451.6 269.6L453.4 278.2M444.2 265.1L446 273.7M430.1 269.6L432 278.1M654.3 279L642.9 275L632.5 280.6L643.8 284.7ZM654.3 279L655 287.3M642.9 275L643.8 283.2M632.5 280.6L633.3 288.9M643.8 284.7L644.6 293M815.3 270.8L803 267.9L793.7 273L806.1 276ZM815.3 270.8L815.7 279.5M803 267.9L803.5 276.5M793.7 273L794.2 281.7M806.1 276L806.5 284.7M623.2 277.5L607.7 277L607 283.4L622.7 283.9ZM623.2 277.5L623.3 285.9M607.7 277L607.8 285.4M607 283.4L607.2 292M622.7 283.9L622.8 292.4M823.8 268.7L808.6 270.4L811.3 275.9L826.6 274.2ZM823.8 268.7L824.1 277.4M808.6 270.4L809.1 279.1M811.3 275.9L811.7 284.7M826.6 274.2L827 283M818.4 273.8L832.9 276.2L838.7 271.7L824.5 269.4ZM818.4 273.8L818.1 282.8M832.9 276.2L832.5 285.2M838.7 271.7L838.4 280.6M824.5 269.4L824.1 278.2M445.9 272.4L436.3 268.8L423.4 273.9L432.9 277.7ZM445.9 272.4L447.7 281.1M436.3 268.8L438.2 277.4M423.4 273.9L425.3 282.6M432.9 277.7L434.8 286.4M431.1 276.5L434.9 270L419.4 270.5L415.3 276.9ZM431.1 276.5L433 285.1M434.9 270L436.8 278.6M419.4 270.5L421.3 279M415.3 276.9L417.3 285.6M871 274.4L883.1 277L893 273.4L880.9 270.9ZM871 274.4L871.1 283.5M883.1 277L883.2 286.1M893 273.4L893 282.4M880.9 270.9L880.9 279.9M440.1 275.6L437.8 269.8L421.9 272.6L424.1 278.4ZM440.1 275.6L442 284.2M437.8 269.8L439.7 278.4M421.9 272.6L423.9 281.3M424.1 278.4L426.1 287.1M665.8 287.5L668.8 280.1L653.7 280.1L650.5 287.4ZM665.8 287.5L666.9 295.8M668.8 280.1L669.9 288.4M653.7 280.1L654.9 288.4M650.5 287.4L651.8 295.7M568.6 285.3L582.3 281.7L574.1 275.5L560.4 279.1ZM568.6 285.3L568.9 293.8M582.3 281.7L582.5 290.1M574.1 275.5L574.3 283.9M560.4 279.1L560.8 287.5M661.5 289.3L676.7 286.2L673.2 279.7L658.1 282.7ZM661.5 289.3L662.8 297.7M676.7 286.2L677.9 294.6M673.2 279.7L674.3 288M658.1 282.7L659.4 291.1M821.3 272.4L822.4 277.8L838.1 277.5L836.8 272.1ZM821.3 272.4L821.2 281.3M822.4 277.8L822.3 286.8M838.1 277.5L838 286.4M836.8 272.1L836.6 281M817.2 272.2L814.7 278.1L830.3 278.4L832.6 272.5ZM817.2 272.2L817.6 281M814.7 278.1L815.1 286.9M830.3 278.4L830.6 287.2M832.6 272.5L832.9 281.3M677.4 289.1L685 282.1L671.5 280L663.8 286.9ZM677.4 289.1L678.6 297.5M685 282.1L686.1 290.5M671.5 280L672.7 288.3M663.8 286.9L665.1 295.3M665.6 286.6L678.9 289.1L686.9 282.2L673.7 279.8ZM665.6 286.6L666.8 295M678.9 289.1L680.1 297.5M686.9 282.2L688 290.5M673.7 279.8L674.9 288.2M859.9 278.4L868 275L854.6 272.7L846.4 276.1ZM859.9 278.4L859.7 287.7M868 275L867.7 284.1M854.6 272.7L854.4 281.8M846.4 276.1L846.3 285.3M751.5 278L754.7 284.1L770 281.4L766.7 275.4ZM751.5 278L752.5 286.6M754.7 284.1L755.6 292.8M770 281.4L770.9 290.1M766.7 275.4L767.6 283.9M913.3 277L928 279.9L933.7 274.9L919.1 272ZM913.3 277L912.5 285.9M928 279.9L927.2 288.8M933.7 274.9L932.9 283.7M919.1 272L918.3 280.8M923.1 272.6L909 274.4L915.8 279.9L930 278.1ZM923.1 272.6L922.4 281.5M909 274.4L908.3 283.2M915.8 279.9L915.1 288.9M930 278.1L929.3 287M651.8 289.8L650.4 282.8L634.8 284.3L636.1 291.3ZM651.8 289.8L652.6 298.3M650.4 282.8L651.1 291.2M634.8 284.3L635.6 292.7M636.1 291.3L637 299.8M653.7 292L668.6 288.3L663.5 282.1L648.8 285.7ZM653.7 292L654.9 300.4M668.6 288.3L669.7 296.7M663.5 282.1L664.6 290.4M648.8 285.7L650 294.1M591.1 289.9L603.2 285.6L592.9 280.3L580.8 284.5ZM591.1 289.9L591.2 298.5M603.2 285.6L603.3 294.2M592.9 280.3L593.1 288.8M580.8 284.5L581 293M495.5 277.9L487.9 273.2L473.5 277.1L481 281.8ZM495.5 277.9L496.8 286.7M487.9 273.2L489.3 282M473.5 277.1L475 285.9M481 281.8L482.4 290.7M854.5 275L851.2 278.9L866.8 279.8L869.9 275.8ZM854.5 275L854.4 284.2M851.2 278.9L851.1 288.2M866.8 279.8L866.6 289.1M869.9 275.8L869.7 285.1M960.4 277L960.2 282.1L976 283.9L976.1 278.8ZM960.4 277L959 285.9M960.2 282.1L958.8 291.1M976 283.9L974.6 293M976.1 278.8L974.6 287.7M714.8 288.3L712.5 281.5L697.2 284L699.2 290.9ZM714.8 288.3L716 296.8M712.5 281.5L713.7 289.9M697.2 284L698.4 292.4M699.2 290.9L700.5 299.4M960.7 280.4L949 275.6L938.4 278.3L950 283.1ZM960.7 280.4L959.3 289.4M949 275.6L947.7 284.5M938.4 278.3L937.1 287.3M950 283.1L948.7 292.2M920.3 276.3L904.5 275.9L905.5 281.7L921.5 282.1ZM920.3 276.3L919.6 285.2M904.5 275.9L903.9 284.8M905.5 281.7L904.9 290.7M921.5 282.1L920.8 291.1M1039.4 289.9L1052.2 288.5L1042.4 283.1L1029.7 284.5ZM1039.4 289.9L1037.6 299M1052.2 288.5L1050.3 297.5M1042.4 283.1L1040.7 292M1029.7 284.5L1028 293.4M701.5 294.5L715.6 289.8L708.4 284.6L694.4 289.1ZM701.5 294.5L702.8 303.1M715.6 289.8L716.8 298.5M708.4 284.6L709.6 293.1M694.4 289.1L695.7 297.7M390.8 286.4L401 280.3L387.9 277.9L377.6 284ZM390.8 286.4L392.7 295.3M401 280.3L402.9 289.1M387.9 277.9L389.8 286.7M377.6 284L379.5 292.8M818.1 283.4L833.4 284L838.1 278.7L823 278ZM818.1 283.4L818.7 292.5M833.4 284L833.9 293.2M838.1 278.7L838.6 287.8M823 278L823.6 287.1M716.5 286.2L701 287.1L698.9 294.1L714.7 293.3ZM716.5 286.2L717.8 294.8M701 287.1L702.3 295.7M698.9 294.1L700.2 302.8M714.7 293.3L715.9 301.9M731.5 288.9L723.5 284L710 289L717.9 294.1ZM731.5 288.9L732.8 297.6M723.5 284L724.8 292.5M710 289L711.4 297.6M717.9 294.1L719.3 302.7M447.4 278.8L431 280.4L429.6 287L446.2 285.3ZM447.4 278.8L449.3 287.6M431 280.4L433 289.2M429.6 287L431.7 295.8M446.2 285.3L448.1 294.2M639.5 299L650.6 293.8L639.1 289.4L627.9 294.4ZM639.5 299L639.9 307.7M650.6 293.8L651 302.5M639.1 289.4L639.5 298M627.9 294.4L628.4 303.1M612.5 291L617.1 297.7L632.6 295.6L627.8 289ZM612.5 291L612.8 299.7M617.1 297.7L617.4 306.4M632.6 295.6L632.7 304.3M627.8 289L628 297.7M1007.4 284.4L1014.5 289.6L1029 289L1021.7 283.8ZM1007.4 284.4L1006 293.5M1014.5 289.6L1013 298.8M1029 289L1027.5 298.2M1021.7 283.8L1020.3 292.8M593.7 293L587.2 286.5L572.4 289.4L578.8 296ZM593.7 293L594 301.7M587.2 286.5L587.5 295.1M572.4 289.4L572.8 298M578.8 296L579.2 304.7M369.1 289.6L384.2 284.7L376.6 279.9L361.5 284.7ZM369.1 289.6L371.3 298.5M384.2 284.7L386.3 293.5M376.6 279.9L378.7 288.7M361.5 284.7L363.7 293.5M1051.7 290.1L1062.8 296.2L1074.4 294.3L1063.3 288.2ZM1051.7 290.1L1049.5 298.9M1062.8 296.2L1060.5 305.1M1074.4 294.3L1072.1 303.2M1063.3 288.2L1061.1 297M397.2 290.4L413.9 287.5L411.2 281.6L394.7 284.4ZM397.2 290.4L399.1 299.3M413.9 287.5L415.7 296.4M411.2 281.6L413.1 290.4M394.7 284.4L396.6 293.2M437.7 290.1L444.7 283.3L429.7 282.5L422.6 289.3ZM437.7 290.1L439.7 299M444.7 283.3L446.7 292.1M429.7 282.5L431.8 291.3M422.6 289.3L424.7 298.2M734.8 295.5L749.3 291.4L742.5 286.5L728.1 290.5ZM734.8 295.5L735.9 304.5M749.3 291.4L750.4 300.4M742.5 286.5L743.6 295.3M728.1 290.5L729.3 299.4M510.2 282.7L497.7 288.1L508.7 293.4L521.1 287.9ZM510.2 282.7L511.1 291.3M497.7 288.1L498.7 296.8M508.7 293.4L509.6 302.1M521.1 287.9L522 296.5M730.1 294.6L723.6 289.1L709.1 293.7L715.5 299.3ZM730.1 294.6L731.5 303.3M723.6 289.1L724.9 297.8M709.1 293.7L710.5 302.4M715.5 299.3L717 308.1M1037.1 290.8L1049.6 296.6L1059.8 293.9L1047.3 288.1ZM1037.1 290.8L1035 299.8M1049.6 296.6L1047.4 305.7M1059.8 293.9L1057.6 302.8M1047.3 288.1L1045.2 297M871.2 283.9L882.5 288.5L894.1 285.6L882.8 281ZM871.2 283.9L870.4 293.1M882.5 288.5L881.6 297.8M894.1 285.6L893.2 294.9M882.8 281L882 290.2M766 289.2L751.1 288.3L745.2 294.1L760.3 295.1ZM766 289.2L766.8 298.3M751.1 288.3L751.9 297.3M745.2 294.1L746.1 303.2M760.3 295.1L761.1 304.3M363.5 284.7L350.7 290.8L361.9 294.2L374.7 288ZM363.5 284.7L365.8 293.5M350.7 290.8L353.1 299.7M361.9 294.2L364.3 303.1M374.7 288L377 296.9M964.2 289.4L956.1 284.3L941.9 285.9L949.9 291ZM964.2 289.4L963.2 298.7M956.1 284.3L955.1 293.6M941.9 285.9L941 295.2M949.9 291L949 300.4M348.9 285.5L337 292L349.5 294.9L361.2 288.3ZM348.9 285.5L351.2 294.3M337 292L339.5 300.8M349.5 294.9L351.9 303.8M361.2 288.3L363.5 297.2M829.6 288.5L825.3 284.2L809.7 286.7L813.9 291.2ZM829.6 288.5L830.4 298M825.3 284.2L826.1 293.5M809.7 286.7L810.6 296.1M813.9 291.2L814.7 300.6M698.1 296.8L683.2 296.1L677.5 303.5L692.6 304.3ZM698.1 296.8L699.5 305.4M683.2 296.1L684.6 304.7M677.5 303.5L678.9 312.2M692.6 304.3L694 313M588 299L598.6 304.6L611.2 300.1L600.6 294.6ZM588 299L588.2 307.8M598.6 304.6L598.7 313.4M611.2 300.1L611.3 308.9M600.6 294.6L600.8 303.3M1015.1 292.5L1029.3 297.7L1037.3 293.8L1023.2 288.7ZM1015.1 292.5L1013.1 301.6M1029.3 297.7L1027.2 306.8M1037.3 293.8L1035.2 302.9M1023.2 288.7L1021.2 297.7M497.9 289.5L495 297.1L511.7 297.6L514.3 290ZM497.9 289.5L498.8 298.2M495 297.1L496 305.9M511.7 297.6L512.6 306.4M514.3 290L515.2 298.7M780 295.6L796.3 294L796.4 288.1L780.2 289.6ZM780 295.6L781 304.8M796.3 294L797.3 303.3M796.4 288.1L797.3 297.2M780.2 289.6L781.2 298.7M409 291.9L416.7 296.9L431.8 292.2L424.1 287.3ZM409 291.9L410.9 300.9M416.7 296.9L418.6 306M431.8 292.2L433.7 301.2M424.1 287.3L425.9 296.2M340.8 288.4L329.7 295.2L343.1 297.6L354 290.8ZM340.8 288.4L343.2 297.3M329.7 295.2L332.3 304.1M343.1 297.6L345.6 306.5M354 290.8L356.4 299.7M872 285.8L874.4 291.2L890.7 291.6L888.1 286.1ZM872 285.8L871.1 295.1M874.4 291.2L873.5 300.7M890.7 291.6L889.8 301M888.1 286.1L887.2 295.5M1063 302.1L1062.1 296.2L1045.8 293.7L1046.5 299.6ZM1063 302.1L1060.8 311.2M1062.1 296.2L1059.9 305.2M1045.8 293.7L1043.7 302.8M1046.5 299.6L1044.4 308.8M439.8 299.4L453.8 293.5L444.2 288.2L430.2 294ZM439.8 299.4L441.7 308.1M453.8 293.5L455.6 302.2M444.2 288.2L445.9 296.9M430.2 294L432.1 302.7M872.1 289.1L862.7 284.2L849.1 287L858.4 292ZM872.1 289.1L871.6 298.5M862.7 284.2L862.3 293.5M849.1 287L848.8 296.4M858.4 292L858.1 301.4M482.3 293.9L489.3 300.6L504.7 296.6L497.7 290.1ZM482.3 293.9L483.4 302.7M489.3 300.6L490.3 309.4M504.7 296.6L505.7 305.4M497.7 290.1L498.6 298.8M335.8 299.7L353 296L350.1 289.8L333.1 293.4ZM335.8 299.7L338.3 308.6M353 296L355.4 305M350.1 289.8L352.5 298.7M333.1 293.4L335.6 302.3M816.4 292.1L810.2 288.1L795.1 291.3L801.1 295.4ZM816.4 292.1L817.3 301.6M810.2 288.1L811 297.5M795.1 291.3L796 300.7M801.1 295.4L802.1 304.9M957.1 295.4L970.9 293.2L961.6 288.2L947.9 290.3ZM957.1 295.4L956.2 304.9M970.9 293.2L969.9 302.6M961.6 288.2L960.7 297.5M947.9 290.3L947 299.7M345 297.1L356.2 300.7L369.3 294.3L358.1 290.8ZM345 297.1L347.4 306M356.2 300.7L358.6 309.7M369.3 294.3L371.7 303.3M358.1 290.8L360.5 299.7M819.5 293.7L818.6 288.8L802.3 290.5L803 295.4ZM819.5 293.7L820.3 303.3M818.6 288.8L819.4 298.3M802.3 290.5L803.2 299.9M803 295.4L803.9 304.9M597.5 299.3L584.6 304.1L594.9 309.8L607.9 304.9ZM597.5 299.3L598 308.1M584.6 304.1L585.1 313M594.9 309.8L595.4 318.7M607.9 304.9L608.3 313.8M1035.1 298.9L1022.7 293.1L1011.7 295.9L1024.1 301.8ZM1035.1 298.9L1033.1 308M1022.7 293.1L1020.7 302.2M1011.7 295.9L1009.8 305M1024.1 301.8L1022.2 311M682.7 305.4L690.2 310.7L704.6 305.3L697 300.1ZM682.7 305.4L684.4 314.1M690.2 310.7L691.9 319.6M704.6 305.3L706.2 314.2M697 300.1L698.6 308.9M859.2 289.5L843.3 288.1L838.6 294L854.7 295.5ZM859.2 289.5L859.2 298.8M843.3 288.1L843.4 297.3M838.6 294L838.7 303.4M854.7 295.5L854.7 304.9M877.8 289L861.3 288.1L860.9 293.6L877.7 294.5ZM877.8 289L877.1 298.4M861.3 288.1L860.7 297.5M860.9 293.6L860.3 303.1M877.7 294.5L877 304M720.4 299.1L711 305.7L724.4 307.7L733.8 301ZM720.4 299.1L721.9 308M711 305.7L712.6 314.7M724.4 307.7L726 316.8M733.8 301L735.2 310M1094.3 305.1L1079.6 299.7L1072.1 303.4L1086.9 308.9ZM1094.3 305.1L1091.8 314.2M1079.6 299.7L1077.1 308.8M1072.1 303.4L1069.6 312.5M1086.9 308.9L1084.4 318.1M985.1 295.7L999.3 300.8L1008 297.2L993.8 292.2ZM985.1 295.7L983.3 305.1M999.3 300.8L997.4 310.2M1008 297.2L1006 306.5M993.8 292.2L992 301.5M887.5 289.6L884 294.5L900.3 296.9L903.7 291.9ZM887.5 289.6L886.6 299.1M884 294.5L883 304.1M900.3 296.9L899.4 306.4M903.7 291.9L902.7 301.4M752.8 305.8L763.3 299.1L750.7 296.6L740.2 303.2ZM752.8 305.8L754.4 314.9M763.3 299.1L764.8 308.2M750.7 296.6L752.2 305.7M740.2 303.2L741.8 312.3M422.3 294.3L409.4 300.6L421 305.3L433.9 298.9ZM422.3 294.3L424 303.2M409.4 300.6L411.2 309.5M421 305.3L422.7 314.2M433.9 298.9L435.5 307.8M1025.2 297.2L1009.9 296.7L1016.1 303.1L1031.6 303.5ZM1025.2 297.2L1023.1 306.4M1009.9 296.7L1007.8 306M1016.1 303.1L1013.9 312.4M1031.6 303.5L1029.4 312.8M992.8 301.3L1008.7 302L1003.4 295.7L987.6 295ZM992.8 301.3L990.8 310.8M1008.7 302L1006.7 311.4M1003.4 295.7L1001.4 305M987.6 295L985.7 304.4M743.4 307.8L759.4 303.7L755.2 297.7L739.4 301.8ZM743.4 307.8L745.1 316.9M759.4 303.7L761 312.8M755.2 297.7L756.7 306.7M739.4 301.8L741 310.8M410.5 306.3L424 300.1L413 295.3L399.4 301.4ZM410.5 306.3L412.3 315.3M424 300.1L425.7 309M413 295.3L414.8 304.2M399.4 301.4L401.3 310.4M1019.2 300.5L1032.2 306.2L1042.7 303.1L1029.7 297.5ZM1019.2 300.5L1017.3 309.8M1032.2 306.2L1030.2 315.6M1042.7 303.1L1040.7 312.4M1029.7 297.5L1027.8 306.7M356.7 296.9L347.3 304.2L362.2 305.7L371.5 298.4ZM356.7 296.9L359.1 305.9M347.3 304.2L349.8 313.2M362.2 305.7L364.7 314.8M371.5 298.4L373.8 307.4M336.7 296.6L320.2 302.3L324.5 308.5L341.2 302.6ZM336.7 296.6L340.2 305.3M320.2 302.3L323.8 311M324.5 308.5L328.2 317.2M341.2 302.6L344.7 311.3M914.9 299.3L917.8 294.6L901.4 292.7L898.3 297.3ZM914.9 299.3L914 309.1M917.8 294.6L916.9 304.3M901.4 292.7L900.5 302.3M898.3 297.3L897.4 307M476 307.5L492.5 308.4L497.5 300.4L481.2 299.6ZM476 307.5L477.6 316.4M492.5 308.4L494 317.3M497.5 300.4L499 309.3M481.2 299.6L482.8 308.4M870.2 291.8L870 297.2L886.9 298.3L886.9 292.9ZM870.2 291.8L869.5 301.4M870 297.2L869.2 306.9M886.9 298.3L886.1 308M886.9 292.9L886.1 302.5M450.7 298.9L443.6 306.8L459.5 308.5L466.4 300.5ZM450.7 298.9L452.4 307.7M443.6 306.8L445.4 315.7M459.5 308.5L461.2 317.4M466.4 300.5L468 309.3M292.2 312.5L309.5 308.3L309.6 301L292.5 305.1ZM292.2 312.5L296 321.3M309.5 308.3L313.2 317.1M309.6 301L313.3 309.6M292.5 305.1L296.2 313.8M823.2 301.1L826.8 294.9L810.5 294.2L806.7 300.3ZM823.2 301.1L823.5 310.6M826.8 294.9L827.1 304.4M810.5 294.2L810.9 303.6M806.7 300.3L807.1 309.8M314.6 302.7L299.5 302.9L291.3 311.4L306.6 311.2ZM314.6 302.7L318.3 311.4M299.5 302.9L303.2 311.6M291.3 311.4L295.1 320.2M306.6 311.2L310.3 319.9M1081.8 312.8L1090.4 309.5L1076 303.8L1067.3 307.1ZM1081.8 312.8L1079.2 322.2M1090.4 309.5L1087.8 318.7M1076 303.8L1073.6 313M1067.3 307.1L1064.9 316.4M831.9 298L819.8 294.2L808.1 299L820.2 302.9ZM831.9 298L832.2 307.5M819.8 294.2L820.1 303.6M808.1 299L808.5 308.5M820.2 302.9L820.6 312.4M301.1 315L318.1 309.2L314.1 302.9L297.3 308.7ZM301.1 315L304.9 323.8M318.1 309.2L321.7 318M314.1 302.9L317.8 311.6M297.3 308.7L301.1 317.4M361.7 303.4L346.1 302.4L337.7 310L353.5 311ZM361.7 303.4L364.2 312.5M346.1 302.4L348.7 311.5M337.7 310L340.3 319.1M353.5 311L356 320.1M913.8 300.1L929.6 303.2L936.1 299.1L920.4 296ZM913.8 300.1L912.9 309.9M929.6 303.2L928.6 313.1M936.1 299.1L935 308.9M920.4 296L919.4 305.7M1021 307.1L1038 310.4L1039.3 305.1L1022.5 301.9ZM1021 307.1L1019 316.7M1038 310.4L1035.9 319.9M1039.3 305.1L1037.1 314.6M1022.5 301.9L1020.4 311.3M302.8 306L287.3 313.2L295.3 317.9L310.8 310.6ZM302.8 306L306.5 314.7M287.3 313.2L291.2 322M295.3 317.9L299.2 326.7M310.8 310.6L314.6 319.4M917.3 301.2L933.4 304.2L939.2 299.9L923.3 297ZM917.3 301.2L916.3 311M933.4 304.2L932.3 314.1M939.2 299.9L938.2 309.7M923.3 297L922.3 306.7M1040.4 309.6L1031.3 303.5L1017 304L1025.9 310.2ZM1040.4 309.6L1038.2 319.1M1031.3 303.5L1029.2 312.9M1017 304L1014.9 313.5M1025.9 310.2L1023.8 319.8M283.1 319.8L296.4 311.4L285.2 308.6L271.8 317ZM283.1 319.8L287.2 328.6M296.4 311.4L300.3 320.1M285.2 308.6L289.2 317.3M271.8 317L275.9 325.7M825.1 303.5L819.7 297.7L803.7 300.7L808.8 306.6ZM825.1 303.5L825.7 313.1M819.7 297.7L820.4 307.2M803.7 300.7L804.4 310.2M808.8 306.6L809.5 316.2M940.7 305L944.8 300.5L928.4 297.9L924 302.4ZM940.7 305L939.5 314.9M944.8 300.5L943.7 310.3M928.4 297.9L927.3 307.7M924 302.4L922.9 312.3M367 315.7L378.3 308.2L364.5 305.3L353.1 312.8ZM367 315.7L369.5 324.9M378.3 308.2L380.6 317.2M364.5 305.3L366.9 314.4M353.1 312.8L355.6 321.9M785.4 311.2L796.4 305.7L783.4 302.5L772.3 307.9ZM785.4 311.2L786.1 320.9M796.4 305.7L797 315.3M783.4 302.5L784 312M772.3 307.9L773 317.5M1103.4 321.8L1108.1 317.2L1091.8 312.2L1086.9 316.7ZM1103.4 321.8L1100.6 331.3M1108.1 317.2L1105.4 326.6M1091.8 312.2L1089.1 321.6M1086.9 316.7L1084.2 326.2M900.6 305.4L903.9 300.5L887.1 298.7L883.6 303.5ZM900.6 305.4L899.9 315.4M903.9 300.5L903.2 310.4M887.1 298.7L886.4 308.5M883.6 303.5L882.9 313.5M811.9 301.6L801.1 307.6L814.6 310.9L825.3 304.7ZM811.9 301.6L812.7 311M801.1 307.6L802 317.2M814.6 310.9L815.4 320.5M825.3 304.7L826 314.2M400.6 312.8L390.3 307.6L375.6 314L385.9 319.4ZM400.6 312.8L402.8 321.9M390.3 307.6L392.5 316.6M375.6 314L377.9 323.1M385.9 319.4L388.2 328.5M576.1 325.3L592.4 323.1L586.1 316L569.9 318.2ZM576.1 325.3L576.1 334.6M592.4 323.1L592.3 332.3M586.1 316L586.1 325.2M569.9 318.2L570 327.4M798.8 304.7L795.8 311.5L812.9 311.4L815.7 304.5ZM798.8 304.7L799.7 314.2M795.8 311.5L796.7 321.1M812.9 311.4L813.7 321M815.7 304.5L816.5 314M627.2 329.3L644.5 328L643.3 321L626.2 322.3ZM627.2 329.3L628 338.8M644.5 328L645.2 337.4M643.3 321L644.1 330.3M626.2 322.3L627.1 331.7M364.6 314.4L367.6 321.9L385.5 318.1L382.3 310.6ZM364.6 314.4L366.9 323.5M367.6 321.9L370 331.1M385.5 318.1L387.8 327.2M382.3 310.6L384.6 319.7M810.8 312.1L828.2 311L828.7 304.2L811.6 305.2ZM810.8 312.1L811.6 321.7M828.2 311L828.9 320.7M828.7 304.2L829.5 313.7M811.6 305.2L812.4 314.7M469.6 323.5L487.5 321.8L487.4 313.6L469.8 315.2ZM469.6 323.5L471.3 332.6M487.5 321.8L489.1 330.9M487.4 313.6L488.9 322.7M469.8 315.2L471.4 324.3M950.2 304.8L932.9 303L933.1 308.6L950.6 310.5ZM950.2 304.8L948.7 314.6M932.9 303L931.5 312.8M933.1 308.6L931.7 318.5M950.6 310.5L949.1 320.4M972.5 310.6L962.2 304.5L948.2 306.6L958.3 312.7ZM972.5 310.6L971 320.4M962.2 304.5L960.8 314.2M948.2 306.6L946.8 316.3M958.3 312.7L956.8 322.6M311.3 325.8L324.4 317.3L312.4 314.6L299.3 323ZM311.3 325.8L315.2 334.8M324.4 317.3L328.1 326.2M312.4 314.6L316.1 323.4M299.3 323L303.2 331.9M563.4 327.4L580.8 326.1L577.4 318.7L560.3 320ZM563.4 327.4L563.7 336.8M580.8 326.1L580.9 335.5M577.4 318.7L577.6 328M560.3 320L560.5 329.3M603.9 327.9L597.7 320.9L581.4 322.9L587.4 329.9ZM603.9 327.9L603.7 337.3M597.7 320.9L597.6 330.2M581.4 322.9L581.3 332.3M587.4 329.9L587.4 339.4M1091.9 325L1105 323.8L1093.5 317.1L1080.5 318.3ZM1091.9 325L1089.2 334.7M1105 323.8L1102.3 333.4M1093.5 317.1L1090.9 326.7M1080.5 318.3L1077.8 327.9M929.1 306L938.5 312.1L953.2 310.7L943.7 304.7ZM929.1 306L927.6 315.8M938.5 312.1L936.9 322M953.2 310.7L951.6 320.6M943.7 304.7L942.1 314.4M846.5 309.2L861.7 311.8L870.5 306.4L855.4 303.9ZM846.5 309.2L846.8 319.1M861.7 311.8L861.8 321.8M870.5 306.4L870.6 316.4M855.4 303.9L855.6 313.8M715.8 328L728.5 321L717.1 318.2L704.5 325.1ZM715.8 328L718.1 337.5M728.5 321L730.6 330.4M717.1 318.2L719.3 327.5M704.5 325.1L706.8 334.5M925.3 310.9L942.7 311.9L939.8 306L922.7 305ZM925.3 310.9L923.9 320.9M942.7 311.9L941.2 321.9M939.8 306L938.4 315.9M922.7 305L921.3 314.9M665.8 333L675.1 326.4L660.6 323.8L651.2 330.3ZM665.8 333L666.8 342.6M675.1 326.4L676 335.9M660.6 323.8L661.6 333.2M651.2 330.3L652.3 339.8M1108.2 324.8L1124.6 330.5L1130.4 326.3L1114.1 320.6ZM1108.2 324.8L1105.2 334.3M1124.6 330.5L1121.5 340.1M1130.4 326.3L1127.4 335.8M1114.1 320.6L1111.2 330.1M413 327.4L428.8 321.7L419.7 315.7L403.9 321.3ZM413 327.4L414.9 336.7M428.8 321.7L430.5 331M419.7 315.7L421.4 324.9M403.9 321.3L405.8 330.5M499.3 328.6L517.2 326.7L516.1 318.6L498.3 320.4ZM499.3 328.6L500.7 337.9M517.2 326.7L518.5 336M516.1 318.6L517.4 327.8M498.3 320.4L499.8 329.6M1128 331.5L1134 327.3L1117.7 321.6L1111.6 325.7ZM1128 331.5L1124.9 341.1M1134 327.3L1130.9 336.8M1117.7 321.6L1114.7 331.1M1111.6 325.7L1108.6 335.2M266.1 333.2L272.6 324.6L255.7 325.8L248.9 334.4ZM266.1 333.2L269.9 342.3M272.6 324.6L276.3 333.7M255.7 325.8L259.4 334.8M248.9 334.4L252.8 343.5M321.6 318.8L303.8 322.7L302.6 330.9L320.6 327ZM321.6 318.8L325.3 327.7M303.8 322.7L307.6 331.6M302.6 330.9L306.5 339.9M320.6 327L324.4 336M829.8 314.9L827.5 308.4L810.2 310.6L812.3 317.1ZM829.8 314.9L830.6 324.7M827.5 308.4L828.3 318.1M810.2 310.6L811.1 320.3M812.3 317.1L813.1 326.9M892 312.9L895.6 307L878.4 305.9L874.6 311.8ZM892 312.9L891.9 323M895.6 307L895.5 317M878.4 305.9L878.4 315.9M874.6 311.8L874.6 321.8M483.8 322.5L468.1 320L459.3 328.1L475.1 330.7ZM483.8 322.5L485.4 331.7M468.1 320L469.8 329.2M459.3 328.1L461 337.3M475.1 330.7L476.8 339.9M600.6 335.7L613 331L600.4 325.9L588 330.5ZM600.6 335.7L600.6 345.4M613 331L612.9 340.6M600.4 325.9L600.4 335.5M588 330.5L588 340.2M322 320.1L308.7 328.8L321 332.1L334.2 323.2ZM322 320.1L325.7 329M308.7 328.8L312.5 337.7M321 332.1L324.8 341M334.2 323.2L337.9 332.2M996.3 314L1007.6 319.8L1021.3 317.7L1010 311.9ZM996.3 314L994.7 323.9M1007.6 319.8L1005.9 329.9M1021.3 317.7L1019.6 327.7M1010 311.9L1008.3 321.8M865.8 307.1L851.6 310.9L862.1 315.4L876.4 311.6ZM865.8 307.1L866 317.1M851.6 310.9L851.8 320.9M862.1 315.4L862.2 325.6M876.4 311.6L876.5 321.7M1134.8 326.9L1129.8 331.3L1146.8 337L1151.6 332.5ZM1134.8 326.9L1131.6 336.5M1129.8 331.3L1126.6 341M1146.8 337L1143.5 346.7M1151.6 332.5L1148.3 342.1M313.2 329.6L309.3 322.7L291.7 328.9L295.5 335.9ZM313.2 329.6L317.2 338.5M309.3 322.7L313.2 331.6M291.7 328.9L295.8 337.8M295.5 335.9L299.6 344.9M1080.6 320.4L1066.4 321.2L1076.9 327.9L1091.2 327.1ZM1080.6 320.4L1078 330.1M1066.4 321.2L1063.9 330.9M1076.9 327.9L1074.3 337.8M1091.2 327.1L1088.5 336.9M772.1 315.7L768.3 323.8L785.4 322.9L789.1 314.8ZM772.1 315.7L773.9 325.1M768.3 323.8L770.1 333.3M785.4 322.9L787.1 332.5M789.1 314.8L790.7 324.3M1006.3 320.5L1023.1 320.5L1016.8 314.3L1000.2 314.2ZM1006.3 320.5L1004.6 330.5M1023.1 320.5L1021.4 330.5M1016.8 314.3L1015.1 324.2M1000.2 314.2L998.6 324.2M554.8 324.4L539.4 329.1L548.6 335.6L564 330.8ZM554.8 324.4L555.6 333.7M539.4 329.1L540.4 338.5M548.6 335.6L549.5 345M564 330.8L564.8 340.2M275.5 338.5L293.7 332.9L291.6 325.5L273.6 331.1ZM275.5 338.5L279.7 347.5M293.7 332.9L297.7 341.9M291.6 325.5L295.6 334.5M273.6 331.1L277.8 340M1095.1 323.9L1077.8 321.5L1081.2 328L1098.6 330.4ZM1095.1 323.9L1092.3 333.6M1077.8 321.5L1075.2 331.3M1081.2 328L1078.4 337.8M1098.6 330.4L1095.9 340.2M707.6 325.8L700.7 333.2L716.7 333.2L723.4 325.8ZM707.6 325.8L709.6 335.3M700.7 333.2L702.8 342.8M716.7 333.2L718.7 342.9M723.4 325.8L725.3 335.3M259 333.2L260.4 340.8L278.7 335.2L277 327.8ZM259 333.2L263.2 342.2M260.4 340.8L264.7 349.8M278.7 335.2L282.8 344.2M277 327.8L281.1 336.7M297.1 337.1L308.6 327.8L294.7 326.3L283.1 335.6ZM297.1 337.1L301.3 346.1M308.6 327.8L312.7 336.8M294.7 326.3L298.8 335.2M283.1 335.6L287.3 344.5M707.4 332.6L722.4 333.9L731.1 326L716.2 324.8ZM707.4 332.6L709.4 342.1M722.4 333.9L724.4 343.5M731.1 326L733.1 335.5M716.2 324.8L718.2 334.2M836.7 316.5L853 318.5L860.4 312.7L844.2 310.9ZM836.7 316.5L837.1 326.7M853 318.5L853.3 328.7M860.4 312.7L860.7 322.9M844.2 310.9L844.6 320.9M526.8 337L534.7 329.1L518.5 326.3L510.5 334.2ZM526.8 337L527.8 346.4M534.7 329.1L535.7 338.4M518.5 326.3L519.6 335.7M510.5 334.2L511.6 343.6M1030.4 318.2L1034.3 324.2L1051.8 326.1L1047.7 320.1ZM1030.4 318.2L1028.1 328.2M1034.3 324.2L1031.9 334.3M1051.8 326.1L1049.4 336.2M1047.7 320.1L1045.3 330.1M1037.7 319.4L1020.5 317.9L1024.8 323.9L1042.3 325.4ZM1037.7 319.4L1035.5 329.5M1020.5 317.9L1018.3 328M1024.8 323.9L1022.6 334.1M1042.3 325.4L1040 335.6M373.1 334L376.1 325.4L357.7 326.6L354.6 335.2ZM373.1 334L375.5 343.4M376.1 325.4L378.4 334.7M357.7 326.6L360.2 335.9M354.6 335.2L357.1 344.6M650.1 340L645.6 333.2L628.5 335.9L632.8 342.8ZM650.1 340L650.9 349.7M645.6 333.2L646.5 342.8M628.5 335.9L629.4 345.6M632.8 342.8L633.7 352.5M1116.7 336.3L1114 329.8L1096.5 326.8L1098.9 333.3ZM1116.7 336.3L1113.7 346.1M1114 329.8L1111 339.5M1096.5 326.8L1093.6 336.5M1098.9 333.3L1096 343.1M909.1 319.3L926.8 318.5L922.4 311.8L905 312.5ZM909.1 319.3L908.4 329.4M926.8 318.5L926 328.6M922.4 311.8L921.7 321.8M905 312.5L904.3 322.6M1143.3 336.4L1161.6 338.7L1165.3 335L1147.2 332.8ZM1143.3 336.4L1142 346.8M1161.6 338.7L1160.2 349.1M1165.3 335L1163.9 345.3M1147.2 332.8L1145.9 343.1M753.7 326.8L761.7 332.7L777.5 326.9L769.3 321.1ZM753.7 326.8L755.4 336.4M761.7 332.7L763.4 342.3M777.5 326.9L779.1 336.5M769.3 321.1L770.9 330.7M950.7 320.6L945.5 315L928.3 314.8L933.2 320.4ZM950.7 320.6L949.3 331M945.5 315L944.1 325.2M928.3 314.8L927 325.1M933.2 320.4L931.9 330.8M492.8 333.4L497.5 341.3L515.3 337.5L510.4 329.7ZM492.8 333.4L494.3 342.7M497.5 341.3L499.1 350.7M515.3 337.5L516.7 346.9M510.4 329.7L511.8 339M585.9 338.1L576.9 332.2L561.2 336.6L570.1 342.5ZM585.9 338.1L586.8 347.8M576.9 332.2L577.8 341.9M561.2 336.6L562.2 346.3M570.1 342.5L571.1 352.3M441 328.4L423.8 333L430.6 340.3L448 335.5ZM441 328.4L442.7 337.8M423.8 333L425.6 342.5M430.6 340.3L432.3 349.7M448 335.5L449.6 344.9M747.5 337.1L761.3 329.7L750.2 325.2L736.5 332.5ZM747.5 337.1L749.5 346.6M761.3 329.7L763.2 339.2M750.2 325.2L752.1 334.6M736.5 332.5L738.5 341.9M927.3 320.7L945.3 321.6L942.1 316L924.3 315.2ZM927.3 320.7L926 331.2M945.3 321.6L943.9 332M942.1 316L940.7 326.3M924.3 315.2L923.1 325.5M704.3 334.9L688.6 333.7L680.3 340.6L696.2 341.9ZM704.3 334.9L705.7 344.8M688.6 333.7L690 343.4M680.3 340.6L681.8 350.5M696.2 341.9L697.6 351.9M493.3 335.3L493.4 343.8L511.9 342.1L511.6 333.5ZM493.3 335.3L494.8 344.7M493.4 343.8L495 353.3M511.9 342.1L513.4 351.5M511.6 333.5L513 342.9M563.7 345L571.1 337.6L554.5 335.6L546.9 342.9ZM563.7 345L564.7 354.8M571.1 337.6L572.1 347.4M554.5 335.6L555.6 345.3M546.9 342.9L548 352.7M1080.8 335.1L1072.2 328.3L1056.3 327.4L1064.7 334.2ZM1080.8 335.1L1077.9 345.2M1072.2 328.3L1069.4 338.3M1056.3 327.4L1053.5 337.5M1064.7 334.2L1061.8 344.4M419.4 337.8L426.2 345.1L443.8 340.3L436.9 333.1ZM419.4 337.8L421.2 347.4M426.2 345.1L428 354.7M443.8 340.3L445.4 349.8M436.9 333.1L438.5 342.6M879.3 318.6L885.7 325.1L903 323.2L896.3 316.7ZM879.3 318.6L878.9 328.8M885.7 325.1L885.3 335.4M903 323.2L902.5 333.4M896.3 316.7L895.8 326.9M680.4 337.7L673.2 345.2L689.9 346.4L696.8 338.8ZM680.4 337.7L681.7 347.4M673.2 345.2L674.6 355.1M689.9 346.4L691.2 356.3M696.8 338.8L698.1 348.6M677.7 339.5L660.2 340.1L656.5 347.4L674.2 346.8ZM677.7 339.5L679.1 349.4M660.2 340.1L661.7 349.9M656.5 347.4L658 357.3M674.2 346.8L675.7 356.8M1154.9 337L1158.5 341.1L1177.2 342.1L1173.3 338ZM1154.9 337L1153.3 347.5M1158.5 341.1L1156.9 351.8M1177.2 342.1L1175.5 352.8M1173.3 338L1171.6 348.5M389.9 344.2L408.2 344.4L413.5 335.5L395.4 335.3ZM389.9 344.2L392.2 353.8M408.2 344.4L410.4 354M413.5 335.5L415.5 345M395.4 335.3L397.6 344.7M638.2 346.6L652.8 349.6L663.5 343.2L649.1 340.3ZM638.2 346.6L639.4 356.6M652.8 349.6L653.9 359.7M663.5 343.2L664.6 353.1M649.1 340.3L650.2 350.2M352.5 340.5L362 346.5L378.4 339.5L368.9 333.6ZM352.5 340.5L355.3 349.9M362 346.5L364.8 356M378.4 339.5L381.1 348.9M368.9 333.6L371.6 343M535.7 337.6L517.3 339.4L518.2 347.9L536.8 346ZM535.7 337.6L536.9 347.1M517.3 339.4L518.7 348.9M518.2 347.9L519.6 357.5M536.8 346L538.1 355.6M561.3 338.4L543 340.3L544.5 347.6L562.9 345.7ZM561.3 338.4L562.4 348.2M543 340.3L544.2 350.1M544.5 347.6L545.6 357.6M562.9 345.7L564 355.6M688.5 351.2L706.7 350.4L708.8 342.2L690.8 343ZM688.5 351.2L689.9 361.1M706.7 350.4L708 360.3M708.8 342.2L710 352M690.8 343L692.1 352.8M1157.5 342.2L1140.8 338.5L1131.5 341.1L1148.2 344.9ZM1157.5 342.2L1155.7 352.9M1140.8 338.5L1139.2 349.1M1131.5 341.1L1129.9 351.8M1148.2 344.9L1146.5 355.7M623 345.1L608.3 348.9L619.6 354L634.3 350.1ZM623 345.1L623.1 355.4M608.3 348.9L608.5 359.2M619.6 354L619.8 364.4M634.3 350.1L634.4 360.4M716.4 349.2L711 342L693.6 346.1L698.8 353.3ZM716.4 349.2L717.6 359M711 342L712.2 351.8M693.6 346.1L694.9 355.9M698.8 353.3L700.1 363.2M795.5 330.5L777.9 335.1L782 342L799.9 337.3ZM795.5 330.5L797.3 340.4M777.9 335.1L779.8 345M782 342L783.9 352.1M799.9 337.3L801.7 347.4M808.4 334.9L799.7 329.4L783.7 335.8L792.2 341.3ZM808.4 334.9L810.4 344.9M799.7 329.4L801.7 339.3M783.7 335.8L785.8 345.7M792.2 341.3L794.3 351.4M421.6 351.8L439.1 353.9L447.1 345.2L429.9 343.2ZM421.6 351.8L423.4 361.6M439.1 353.9L440.8 363.6M447.1 345.2L448.8 354.8M429.9 343.2L431.6 352.8M1125.8 344.5L1144.3 345.3L1138.6 340.6L1120.4 339.9ZM1125.8 344.5L1124.1 355.4M1144.3 345.3L1142.5 356.1M1138.6 340.6L1136.8 351.3M1120.4 339.9L1118.7 350.6M427.7 345.4L411.6 342.7L401.2 351.3L417.5 354.1ZM427.7 345.4L429.7 355M411.6 342.7L413.7 352.3M401.2 351.3L403.4 361M417.5 354.1L419.6 363.8M900.4 328L915.7 331.5L926.7 326.8L911.5 323.4ZM900.4 328L900.2 338.7M915.7 331.5L915.4 342.3M926.7 326.8L926.4 337.5M911.5 323.4L911.2 334M370.5 349.5L381.4 355.4L397.4 348.3L386.6 342.6ZM370.5 349.5L373 359.2M381.4 355.4L383.8 365.1M397.4 348.3L399.7 358M386.6 342.6L388.9 352.1M580.7 353.3L598.5 355.2L604.6 347.9L587.2 346.1ZM580.7 353.3L581.5 363.5M598.5 355.2L599.2 365.3M604.6 347.9L605.3 357.9M587.2 346.1L587.9 356.2M962.5 327.3L974.3 332.7L989 331.3L977.1 326ZM962.5 327.3L960.9 338.1M974.3 332.7L972.6 343.6M989 331.3L987.2 342.1M977.1 326L975.4 336.7M960.9 329.6L950.8 324.3L934.8 326.3L944.7 331.7ZM960.9 329.6L959.9 340.4M950.8 324.3L950 335M934.8 326.3L934 337.1M944.7 331.7L943.8 342.6M876.2 326.2L875.2 332.5L894.2 333L894.9 326.6ZM876.2 326.2L876 336.8M875.2 332.5L875 343.3M894.2 333L893.9 343.7M894.9 326.6L894.6 337.2M302.3 355.5L296.1 348.8L277.9 355.8L283.9 362.7ZM302.3 355.5L306.2 364.9M296.1 348.8L300 358.1M277.9 355.8L282 365.2M283.9 362.7L288 372.1M397 345.1L377.9 348.7L380.4 357.2L399.7 353.4ZM397 345.1L399.2 354.7M377.9 348.7L380.2 358.3M380.4 357.2L382.7 366.9M399.7 353.4L402 363.1M643.1 359L655.8 353.6L642.2 349.1L629.5 354.4ZM643.1 359L643.5 369.3M655.8 353.6L656.1 363.9M642.2 349.1L642.6 359.3M629.5 354.4L629.9 364.7M765 350.2L779.4 342.3L768 338L753.7 345.7ZM765 350.2L767.3 360.1M779.4 342.3L781.6 352.2M768 338L770.2 347.8M753.7 345.7L756.1 355.6M545.6 357.2L564.5 357L567.1 349.2L548.5 349.4ZM545.6 357.2L546.9 367.4M564.5 357L565.6 367.1M567.1 349.2L568.2 359.2M548.5 349.4L549.7 359.5M1191.2 344.5L1176.1 345.5L1188.4 351L1203.6 349.9ZM1191.2 344.5L1189 355.1M1176.1 345.5L1174 356.2M1188.4 351L1186.2 361.8M1203.6 349.9L1201.4 360.7M1195.7 344.5L1183.3 347L1198.5 352.1L1211 349.6ZM1195.7 344.5L1193.6 355.1M1183.3 347L1181.3 357.6M1198.5 352.1L1196.5 362.9M1211 349.6L1208.8 360.3M1093 340.9L1095.7 344.6L1115 346.3L1111.9 342.4ZM1093 340.9L1091.3 351.8M1095.7 344.6L1094 355.7M1115 346.3L1113.2 357.4M1111.9 342.4L1110.2 353.4M511.1 360.6L527.2 354.5L517 349L501 355ZM511.1 360.6L512.9 370.7M527.2 354.5L528.9 364.6M517 349L518.7 359M501 355L502.8 365M452.8 350.5L447.2 359.4L465.9 360.2L471.2 351.2ZM452.8 350.5L454.4 360.2M447.2 359.4L448.9 369.2M465.9 360.2L467.5 370M471.2 351.2L472.7 361M617.6 353.6L622.8 360.1L641 358.3L635.5 351.9ZM617.6 353.6L617.7 364M622.8 360.1L622.9 370.6M641 358.3L641 368.8M635.5 351.9L635.6 362.2M555.4 361.7L569.1 355.2L555.9 350.6L542.2 357ZM555.4 361.7L556.6 371.9M569.1 355.2L570.2 365.4M555.9 350.6L557 360.7M542.2 357L543.4 367.2M1023.9 338.5L1041.8 343.9L1048.2 339.5L1030.5 334.3ZM1023.9 338.5L1021.4 349.2M1041.8 343.9L1039.2 354.6M1048.2 339.5L1045.7 350.1M1030.5 334.3L1028.1 344.8M1040.7 335.5L1028.3 337.7L1042.7 344.3L1055.1 342ZM1040.7 335.5L1038.2 346.1M1028.3 337.7L1025.8 348.4M1042.7 344.3L1040.1 355M1055.1 342L1052.5 352.7M512.6 351.8L495.5 357.2L503.8 363.4L521.1 357.9ZM512.6 351.8L514.4 361.8M495.5 357.2L497.4 367.3M503.8 363.4L505.7 373.6M521.1 357.9L522.8 368M546.1 356.1L532.8 351.8L519.1 358.8L532.4 363.2ZM546.1 356.1L547.7 366.2M532.8 351.8L534.5 361.9M519.1 358.8L520.8 368.9M532.4 363.2L534.1 373.4M1024.1 342.4L1031.8 338.8L1014.5 333.3L1006.7 336.9ZM1024.1 342.4L1021.5 353.3M1031.8 338.8L1029.2 349.5M1014.5 333.3L1012.1 344M1006.7 336.9L1004.2 347.7M1016.8 339L1007.5 333.2L990.8 333.1L999.9 338.9ZM1016.8 339L1014.6 350M1007.5 333.2L1005.4 344M990.8 333.1L988.8 343.9M999.9 338.9L997.8 349.9M786.1 349.4L782 341.9L764 347L767.9 354.7ZM786.1 349.4L788.4 359.4M782 341.9L784.3 351.8M764 347L766.4 356.9M767.9 354.7L770.2 364.7M889.1 334.4L904.8 337.8L916 333.1L900.5 329.8ZM889.1 334.4L889.1 345.4M904.8 337.8L904.6 348.9M916 333.1L915.8 344.1M900.5 329.8L900.3 340.7M1028.5 336.4L1028.5 342.3L1047.7 345.8L1047.5 339.9ZM1028.5 336.4L1026 347.1M1028.5 342.3L1025.9 353.1M1047.7 345.8L1045.1 356.6M1047.5 339.9L1044.9 350.6M1191.3 354.8L1207.9 354.2L1196.7 348.4L1180.3 349ZM1191.3 354.8L1189 365.7M1207.9 354.2L1205.6 365.1M1196.7 348.4L1194.5 359.1M1180.3 349L1178.1 359.8M979 336.9L972.3 331.3L954.2 331.5L960.7 337.1ZM979 336.9L977.6 348.1M972.3 331.3L971 342.3M954.2 331.5L953 342.5M960.7 337.1L959.3 348.3M512.2 360.7L523.2 366.2L539 359.8L528 354.4ZM512.2 360.7L514.1 370.8M523.2 366.2L524.9 376.4M539 359.8L540.7 369.9M528 354.4L529.8 364.5M367.9 356.2L364.1 366L383.6 364.3L387 354.5ZM367.9 356.2L370.9 365.9M364.1 366L367.3 375.7M383.6 364.3L386.6 374M387 354.5L389.9 364.2M405.7 354.9L386 357.7L386.8 366.8L406.7 363.9ZM405.7 354.9L407.9 364.6M386 357.7L388.4 367.5M386.8 366.8L389.1 376.7M406.7 363.9L408.9 373.7M473 361.9L475.5 369.5L495 366.2L492.2 358.7ZM473 361.9L474.8 372.1M475.5 369.5L477.4 379.8M495 366.2L496.8 376.5M492.2 358.7L493.9 368.9M1218.3 359.4L1209.8 352.5L1191.8 351.9L1200.1 358.8ZM1218.3 359.4L1215.5 370.2M1209.8 352.5L1207 363.2M1191.8 351.9L1189.1 362.5M1200.1 358.8L1197.3 369.6M802.5 348.1L811.9 354.7L828.6 347.9L819.1 341.4ZM802.5 348.1L804.3 358.2M811.9 354.7L813.7 364.9M828.6 347.9L830.3 358.1M819.1 341.4L820.7 351.5M940.5 337.4L926.2 333.2L912.8 337L927.1 341.3ZM940.5 337.4L940 348.6M926.2 333.2L925.7 344.3M912.8 337L912.4 348.2M927.1 341.3L926.6 352.6M1182.6 350.8L1174.2 354.6L1192.5 359.9L1200.8 356ZM1182.6 350.8L1180.1 361.6M1174.2 354.6L1171.7 365.5M1192.5 359.9L1189.9 370.9M1200.8 356L1198.2 366.8M984.7 336.3L989.2 342.5L1008.2 344.4L1003.4 338.2ZM984.7 336.3L982.4 347.3M989.2 342.5L986.8 353.7M1008.2 344.4L1005.8 355.6M1003.4 338.2L1001 349.2M433.4 369.1L430.4 360.4L410.8 364.1L413.5 372.9ZM433.4 369.1L435.4 379.1M430.4 360.4L432.4 370.3M410.8 364.1L413 374M413.5 372.9L415.8 382.9M596.3 369.6L615.4 366.8L610.9 359.1L592.1 361.9ZM596.3 369.6L597.3 380.1M615.4 366.8L616.2 377.2M610.9 359.1L611.8 369.4M592.1 361.9L593.1 372.3M765.8 363.1L770.7 353.8L752.6 354.6L747.5 363.8ZM765.8 363.1L768 373.3M770.7 353.8L772.8 364M752.6 354.6L754.8 364.7M747.5 363.8L749.7 374M627.5 368.7L646.6 370.5L649.9 363.2L631 361.4ZM627.5 368.7L627.3 379.3M646.6 370.5L646.4 381.1M649.9 363.2L649.6 373.6M631 361.4L630.8 371.9M807.7 357.6L825.4 351.6L817.7 344.3L800.1 350.2ZM807.7 357.6L809.4 367.9M825.4 351.6L827.1 361.8M817.7 344.3L819.3 354.4M800.1 350.2L801.9 360.4M311.6 373L323.4 378L339.4 368.7L327.7 363.9ZM311.6 373L315.6 382.6M323.4 378L327.3 387.7M339.4 368.7L343.1 378.3M327.7 363.9L331.5 373.4M1143.5 350.5L1127 350.3L1137.9 356.3L1154.6 356.5ZM1143.5 350.5L1140.9 361.5M1127 350.3L1124.5 361.4M1137.9 356.3L1135.3 367.5M1154.6 356.5L1151.9 367.6M421.8 369.7L432.4 376L449.3 369.1L438.7 362.9ZM421.8 369.7L424 379.8M432.4 376L434.5 386.2M449.3 369.1L451.3 379.2M438.7 362.9L440.8 372.9M836.5 343.8L833.6 352L852.8 349.5L855.4 341.3ZM836.5 343.8L838.8 354.3M833.6 352L836 362.7M852.8 349.5L855.1 360.2M855.4 341.3L857.6 351.9M754.4 368.2L771.6 361.4L763.1 355L746.1 361.6ZM754.4 368.2L756.6 378.5M771.6 361.4L773.7 371.6M763.1 355L765.2 365.1M746.1 361.6L748.3 371.8M773.6 356.1L778.1 364.7L796.8 359.2L792 350.7ZM773.6 356.1L775.8 366M778.1 364.7L780.3 374.7M796.8 359.2L798.9 369.3M792 350.7L794.1 360.6M377.7 376.5L387.4 366.1L370.2 364.7L360.3 375.1ZM377.7 376.5L381.1 386.2M387.4 366.1L390.6 375.7M370.2 364.7L373.5 374.4M360.3 375.1L363.7 384.8M383.3 363.3L366.5 371.5L377.3 377.7L394.1 369.3ZM383.3 363.3L386.4 373M366.5 371.5L369.7 381.3M377.3 377.7L380.5 387.5M394.1 369.3L397.1 379.1M878.5 347.3L886.6 341.2L868.8 339.8L860.5 345.8ZM878.5 347.3L879.1 358.6M886.6 341.2L887.2 352.4M868.8 339.8L869.4 350.9M860.5 345.8L861.2 357M657.1 364.9L641.4 368.8L652.9 375.4L668.6 371.3ZM657.1 364.9L656.8 375.4M641.4 368.8L641.2 379.4M652.9 375.4L652.6 386.1M668.6 371.3L668.2 381.9M461.8 375.5L471.5 367.2L454.2 365.3L444.3 373.5ZM461.8 375.5L463.8 385.9M471.5 367.2L473.4 377.5M454.2 365.3L456.2 375.6M444.3 373.5L446.4 383.9M1232.1 356.9L1218.6 359.7L1234 366.4L1247.6 363.6ZM1232.1 356.9L1229.5 367.6M1218.6 359.7L1216 370.4M1234 366.4L1231.3 377.3M1247.6 363.6L1244.9 374.4M1022.9 346.9L1040.7 351.4L1049.6 348.7L1031.9 344.2ZM1022.9 346.9L1020.9 358.3M1040.7 351.4L1038.6 362.9M1049.6 348.7L1047.5 360.1M1031.9 344.2L1029.9 355.5M370.9 379.8L388.9 371.9L380.1 364.9L362.2 372.7ZM370.9 379.8L374.3 389.6M388.9 371.9L392.2 381.6M380.1 364.9L383.4 374.6M362.2 372.7L365.7 382.4M457.5 368.7L441.3 366.1L429.5 374.2L445.8 376.9ZM457.5 368.7L459.5 379.1M441.3 366.1L443.5 376.4M429.5 374.2L431.7 384.6M445.8 376.9L447.9 387.4M829.5 357.3L840 348.6L824 347.4L813.4 355.9ZM829.5 357.3L831.8 367.9M840 348.6L842.3 359.2M824 347.4L826.3 357.8M813.4 355.9L815.8 366.5M513.2 369.9L499.2 365.7L485.1 373.1L499.1 377.4ZM513.2 369.9L514.9 380.3M499.2 365.7L501 376.1M485.1 373.1L487 383.5M499.1 377.4L501 387.9M724.6 365.9L706.2 366L700.9 375L719.6 374.9ZM724.6 365.9L726.3 376.2M706.2 366L707.9 376.3M700.9 375L702.7 385.4M719.6 374.9L721.4 385.3M712.5 377L728.4 370L717.3 364.3L701.5 371.3ZM712.5 377L714.3 387.5M728.4 370L730 380.3M717.3 364.3L719 374.6M701.5 371.3L703.3 381.6M552.6 369.9L538.3 366.2L524.6 373.5L538.9 377.4ZM552.6 369.9L554.3 380.5M538.3 366.2L540.2 376.6M524.6 373.5L526.5 384.1M538.9 377.4L540.8 388M531.2 368.6L529.2 376.8L549 375.1L550.7 367ZM531.2 368.6L533.1 379.1M529.2 376.8L531.1 387.4M549 375.1L550.8 385.8M550.7 367L552.5 377.5M931.7 339.3L914 341.4L923.2 346.7L941.1 344.5ZM931.7 339.3L931.2 350.7M914 341.4L913.6 352.8M923.2 346.7L922.7 358.3M941.1 344.5L940.5 356M686.8 378.8L692.6 370L674.2 369.4L668.2 378.1ZM686.8 378.8L688.2 389.3M692.6 370L694 380.4M674.2 369.4L675.7 379.7M668.2 378.1L669.7 388.5M488 370.7L468.7 370.9L463.5 379.5L483.1 379.3ZM488 370.7L489.8 381.2M468.7 370.9L470.6 381.3M463.5 379.5L465.4 390M483.1 379.3L485 389.9M1076.1 357L1087.6 354.6L1070.8 349.7L1059.3 352ZM1076.1 357L1073.9 368.7M1087.6 354.6L1085.4 366.2M1070.8 349.7L1068.8 361M1059.3 352L1057.3 363.5M639.8 379.6L643.8 371.7L624.5 370.2L620.3 378.1ZM639.8 379.6L640.1 390.4M643.8 371.7L644 382.4M624.5 370.2L624.8 380.9M620.3 378.1L620.6 388.9M687.1 372.5L667.6 374.4L668.3 382.7L688.1 380.8ZM687.1 372.5L688.2 383M667.6 374.4L668.8 384.9M668.3 382.7L669.5 393.4M688.1 380.8L689.2 391.5M1138.7 362.6L1132.2 356.4L1113 354.5L1119.2 360.7ZM1138.7 362.6L1135.9 374M1132.2 356.4L1129.5 367.6M1113 354.5L1110.3 365.7M1119.2 360.7L1116.4 372.2M1018.2 348L1009.3 350.3L1027.9 353.4L1036.6 351ZM1018.2 348L1016.9 359.7M1009.3 350.3L1008 362.2M1027.9 353.4L1026.5 365.4M1036.6 351L1035.2 362.8M1071.9 357.6L1071 352.8L1050.8 350L1051.4 354.7ZM1071.9 357.6L1069.6 369.3M1071 352.8L1068.8 364.4M1050.8 350L1048.7 361.5M1051.4 354.7L1049.2 366.4M340.3 383.9L348.4 391.4L367.2 383.5L359 376.2ZM340.3 383.9L343.9 393.8M348.4 391.4L352 401.3M367.2 383.5L370.7 393.3M359 376.2L362.5 386M572.7 379.6L589.2 383.6L600.7 375.7L584.4 371.9ZM572.7 379.6L573.9 390.3M589.2 383.6L590.3 394.3M600.7 375.7L601.7 386.3M584.4 371.9L585.5 382.5M467.3 381.8L482.4 385.8L496 378L481 374.1ZM467.3 381.8L469.2 392.4M482.4 385.8L484.3 396.5M496 378L497.8 388.6M481 374.1L482.9 384.6M464.4 379.4L472.1 386.4L491 381L483.2 374.1ZM464.4 379.4L466.4 390M472.1 386.4L474 397.1M491 381L492.8 391.6M483.2 374.1L485 384.6M1236 366.4L1236 374.4L1256.7 379.5L1256.4 371.3ZM1236 366.4L1232 376.8M1236 374.4L1232 385M1256.7 379.5L1252.6 390.1M1256.4 371.3L1252.3 381.8M693.5 383.7L712.4 384.6L718.6 375.6L700.1 374.7ZM693.5 383.7L695.1 394.3M712.4 384.6L713.8 395.3M718.6 375.6L720 386.1M700.1 374.7L701.5 385.2M409.2 387.9L419.8 379L402.3 377.4L391.5 386.2ZM409.2 387.9L411.8 398.6M419.8 379L422.3 389.5M402.3 377.4L404.8 387.9M391.5 386.2L394.1 396.8M911.5 354.2L923.1 348.2L906.3 345.3L894.7 351.2ZM911.5 354.2L912 365.9M923.1 348.2L923.5 359.8M906.3 345.3L906.8 356.7M894.7 351.2L895.2 362.8M735.7 376.4L718.6 374.2L708.8 383.5L726.1 385.7ZM735.7 376.4L737.5 386.8M718.6 374.2L720.4 384.6M708.8 383.5L710.7 394M726.1 385.7L727.9 396.3M541.3 387.6L561.2 383.6L556.7 375.4L537 379.4ZM541.3 387.6L543.1 398.3M561.2 383.6L562.9 394.2M556.7 375.4L558.3 386M537 379.4L538.8 390M630.6 377.1L611.1 380.2L615.7 388L635.5 384.8ZM630.6 377.1L631.5 387.9M611.1 380.2L612.1 391.1M615.7 388L616.7 399M635.5 384.8L636.4 395.7M427.2 379.9L410.8 387.6L423.6 392.5L440 384.7ZM427.2 379.9L429.6 390.5M410.8 387.6L413.4 398.3M423.6 392.5L426.1 403.3M440 384.7L442.3 395.4M897.3 353.6L883.9 349.6L868.3 355.7L881.7 359.8ZM897.3 353.6L898.4 365.1M883.9 349.6L885 361M868.3 355.7L869.6 367.2M881.7 359.8L882.9 371.4M838 357.9L826.3 366.6L842.8 368.3L854.3 359.5ZM838 357.9L840.3 368.8M826.3 366.6L828.8 377.6M842.8 368.3L845.1 379.4M854.3 359.5L856.6 370.5M1225.2 375.7L1242.9 384.7L1253.9 380.2L1236.2 371.4ZM1225.2 375.7L1221.1 386.3M1242.9 384.7L1238.7 395.3M1253.9 380.2L1249.7 390.8M1236.2 371.4L1232.2 381.9M482.6 380.9L467.5 388.4L481.8 392.8L496.8 385.2ZM482.6 380.9L484.6 391.7M467.5 388.4L469.6 399.3M481.8 392.8L483.8 403.7M496.8 385.2L498.7 396M667.8 391.1L682.6 386.2L668.7 380.4L653.9 385.2ZM667.8 391.1L667.6 402.4M682.6 386.2L682.3 397.4M668.7 380.4L668.5 391.5M653.9 385.2L653.8 396.4M696.4 385.3L677.9 381.9L669.9 388.6L688.8 392.1ZM696.4 385.3L696 396.5M677.9 381.9L677.6 393M669.9 388.6L669.7 399.8M688.8 392.1L688.4 403.4M387.5 386.3L368.5 387.3L360.4 397.3L379.7 396.3ZM387.5 386.3L391 396.7M368.5 387.3L372.2 397.6M360.4 397.3L364.2 407.7M379.7 396.3L383.4 406.8M1251.2 387.2L1248.9 378.1L1228.2 373.8L1230.1 382.8ZM1251.2 387.2L1246.9 397.9M1248.9 378.1L1244.7 388.7M1228.2 373.8L1224.2 384.3M1230.1 382.8L1226 393.5M592.8 393.5L609.1 386.9L596.5 381.2L580.3 387.5ZM592.8 393.5L594.1 404.5M609.1 386.9L610.2 397.9M596.5 381.2L597.7 392M580.3 387.5L581.6 398.5M872.6 356.9L879.6 363.3L899.2 358L891.9 351.8ZM872.6 356.9L874.3 368.3M879.6 363.3L881.3 374.8M899.2 358L900.7 369.6M891.9 351.8L893.5 363.2M815.8 378.2L831.7 369.3L819.3 365.3L803.6 374ZM815.8 378.2L818.8 389.1M831.7 369.3L834.5 380.2M819.3 365.3L822.2 376M803.6 374L806.6 384.9M875.1 359.7L859.7 357.1L846.3 365.7L861.6 368.5ZM875.1 359.7L877.3 370.9M859.7 357.1L862 368.1M846.3 365.7L848.7 376.8M861.6 368.5L863.9 379.7M1092.4 359.7L1092 365.9L1113.1 370.3L1113.1 364ZM1092.4 359.7L1089.4 371.1M1092 365.9L1088.9 377.5M1113.1 370.3L1109.9 381.9M1113.1 364L1110 375.4M523.4 389.5L535.5 395.6L552.2 388.4L540.1 382.4ZM523.4 389.5L525.2 400.3M535.5 395.6L537.3 406.5M552.2 388.4L553.9 399.2M540.1 382.4L541.8 393.1M385.1 394.4L377.5 387.8L358.2 395.4L365.6 402.1ZM385.1 394.4L388.8 404.9M377.5 387.8L381.2 398.2M358.2 395.4L362 405.9M365.6 402.1L369.4 412.7M395.3 399.4L410.7 390.1L396.6 386.5L381.2 395.7ZM395.3 399.4L398.8 410.1M410.7 390.1L414 400.6M396.6 386.5L400 396.9M381.2 395.7L384.7 406.2M1136 373.4L1155.5 375.2L1147.6 366.8L1128.3 365ZM1136 373.4L1132.5 384.8M1155.5 375.2L1151.9 386.5M1147.6 366.8L1144 377.9M1128.3 365L1124.9 376.3M624.3 384.3L623.3 392.6L643.9 391.8L644.6 383.5ZM624.3 384.3L625.2 395.3M623.3 392.6L624.2 403.8M643.9 391.8L644.8 403M644.6 383.5L645.4 394.5M885.7 357.2L900.1 361.7L915.4 356.8L901 352.4ZM885.7 357.2L886 369.1M900.1 361.7L900.2 373.7M915.4 356.8L915.5 368.8M901 352.4L901.2 364.2M1110.2 363.7L1118 371.9L1137.5 373.4L1129.4 365.2ZM1110.2 363.7L1107 375M1118 371.9L1114.7 383.4M1137.5 373.4L1134.1 384.8M1129.4 365.2L1126.1 376.5M1045.1 357.4L1055.6 364.2L1073.8 364.6L1063.1 357.9ZM1045.1 357.4L1042.5 369.2M1055.6 364.2L1052.9 376.1M1073.8 364.6L1071 376.5M1063.1 357.9L1060.4 369.6M1166.8 379.2L1171.3 373.4L1151 367.2L1146.2 372.8ZM1166.8 379.2L1163.1 390.6M1171.3 373.4L1167.6 384.7M1151 367.2L1147.4 378.4M1146.2 372.8L1142.6 384.1M932.2 362.6L933.6 355L912.7 354.2L911 361.7ZM932.2 362.6L931.8 374.4M933.6 355L933.2 366.7M912.7 354.2L912.4 365.9M911 361.7L910.7 373.5M898.3 362.2L919.6 362.6L919.8 355.2L898.9 354.8ZM898.3 362.2L898 374M919.6 362.6L919.2 374.5M919.8 355.2L919.4 366.9M898.9 354.8L898.6 366.5M530.8 392L517.8 386.3L501.4 393.6L514.3 399.4ZM530.8 392L532.4 402.9M517.8 386.3L519.5 397.1M501.4 393.6L503.2 404.5M514.3 399.4L516.1 410.4M1271.2 383.5L1272.8 394.1L1293.4 400.2L1291.5 389.5ZM1271.2 383.5L1265.7 393.4M1272.8 394.1L1267.2 404M1293.4 400.2L1287.7 410.1M1291.5 389.5L1285.9 399.3M1073.3 362.2L1085.2 369.8L1102.6 369.9L1090.6 362.4ZM1073.3 362.2L1070.2 373.8M1085.2 369.8L1082 381.6M1102.6 369.9L1099.3 381.7M1090.6 362.4L1087.4 373.9M400.8 390.6L381.4 398.2L389.3 405.1L408.9 397.3ZM400.8 390.6L404.3 401.1M381.4 398.2L385.1 408.8M389.3 405.1L393 415.7M408.9 397.3L412.4 407.9M783.4 390.1L795.4 381L779.1 379.4L767.1 388.4ZM783.4 390.1L786.1 401.3M795.4 381L797.9 392.1M779.1 379.4L781.7 390.4M767.1 388.4L769.8 399.5M747.8 385.7L736.9 394.6L754 395.7L764.8 386.7ZM747.8 385.7L750.3 396.7M736.9 394.6L739.5 405.7M754 395.7L756.6 407M764.8 386.7L767.3 397.8M654.8 387.9L635 390.8L640.5 398.7L660.7 395.7ZM654.8 387.9L655.4 399.1M635 390.8L635.6 402.1M640.5 398.7L641.2 410.1M660.7 395.7L661.2 407M741.9 393.3L727 388.2L712.9 396.7L727.7 401.9ZM741.9 393.3L743.3 404.1M727 388.2L728.5 399M712.9 396.7L714.4 407.5M727.7 401.9L729.3 412.8M1146.6 371L1128.7 370.9L1139.8 379.8L1157.9 379.9ZM1146.6 371L1143.1 382.3M1128.7 370.9L1125.2 382.2M1139.8 379.8L1136.2 391.3M1157.9 379.9L1154.3 391.3M404.2 393.4L388.4 402.7L402.8 406.8L418.5 397.4ZM404.2 393.4L407.4 404.1M388.4 402.7L391.8 413.4M402.8 406.8L406.1 417.6M418.5 397.4L421.7 408.1M1112.9 377.9L1122.6 373.7L1103.8 366L1094 370.1ZM1112.9 377.9L1109.3 389.5M1122.6 373.7L1118.9 385.2M1103.8 366L1100.3 377.4M1094 370.1L1090.5 381.6M758.4 387.4L738.7 389.6L734.4 398.5L754.4 396.3ZM758.4 387.4L761 398.5M738.7 389.6L741.3 400.7M734.4 398.5L737.1 409.7M754.4 396.3L757 407.5M1260.7 397L1248.5 385L1231.5 385.6L1243.6 397.6ZM1260.7 397L1255.5 407.1M1248.5 385L1243.4 395.1M1231.5 385.6L1226.5 395.8M1243.6 397.6L1238.4 407.9M786.7 380.5L769.5 388.2L780.4 393.2L797.7 385.3ZM786.7 380.5L789.2 391.6M769.5 388.2L772.2 399.4M780.4 393.2L783 404.5M797.7 385.3L800.2 396.6M797.7 388.3L795.7 380.4L775.5 385.2L777.2 393.2ZM797.7 388.3L800.4 399.6M795.7 380.4L798.2 391.5M775.5 385.2L778.2 396.3M777.2 393.2L779.9 404.5M767.7 386.8L747.5 391.5L749.4 399.4L769.9 394.6ZM767.7 386.8L770.2 398M747.5 391.5L750.1 402.7M749.4 399.4L752 410.7M769.9 394.6L772.5 406M1259.6 389.2L1243.4 390.5L1256.5 403L1272.8 401.6ZM1259.6 389.2L1254.1 399.2M1243.4 390.5L1238.1 400.5M1256.5 403L1251 413.1M1272.8 401.6L1267.2 411.7M1174.5 386.6L1167.6 377.5L1147.4 375.2L1154 384.3ZM1174.5 386.6L1170.6 398M1167.6 377.5L1163.8 388.8M1147.4 375.2L1143.7 386.5M1154 384.3L1150.2 395.7M570 400.7L562.5 393.1L542.8 398.4L550 406.2ZM570 400.7L571.7 411.9M562.5 393.1L564.3 404.2M542.8 398.4L544.7 409.5M550 406.2L551.9 417.4M638.3 391.8L625.3 399.6L642.1 404L654.9 396.1ZM638.3 391.8L639.3 403.1M625.3 399.6L626.5 410.9M642.1 404L643.1 415.4M654.9 396.1L655.8 407.4M424.7 397L413.7 406.4L432.5 408L443.2 398.6ZM424.7 397L427.3 408M413.7 406.4L416.4 417.5M432.5 408L435.1 419.2M443.2 398.6L445.7 409.6M1219.1 396L1238.5 398L1229.4 387.4L1210.3 385.5ZM1219.1 396L1214.3 406.9M1238.5 398L1233.7 408.8M1229.4 387.4L1224.7 398.2M1210.3 385.5L1205.7 396.3M726 394.9L720.8 403.4L741 402.1L745.9 393.6ZM726 394.9L728.3 406.2M720.8 403.4L723.1 414.8M741 402.1L743.1 413.6M745.9 393.6L748 405M1189.9 381L1184.1 387.5L1204.7 395.9L1210.2 389.2ZM1189.9 381L1185.3 391.8M1184.1 387.5L1179.5 398.5M1204.7 395.9L1199.9 407M1210.2 389.2L1205.5 400.1M514.3 408.9L535.2 404.4L529.7 395.9L509.1 400.3ZM514.3 408.9L516.1 420.1M535.2 404.4L536.8 415.5M529.7 395.9L531.3 406.9M509.1 400.3L510.9 411.4M345.6 416.7L367.2 410.6L364.8 402L343.6 407.9ZM345.6 416.7L349.6 427.5M367.2 410.6L371 421.4M364.8 402L368.7 412.7M343.6 407.9L347.6 418.6M996 359.8L982.5 363.5L999.6 369.5L1013.1 365.6ZM996 359.8L994.4 371.9M982.5 363.5L980.9 375.8M999.6 369.5L997.9 381.9M1013.1 365.6L1011.3 377.8M749.3 391.7L730.5 398.6L738.6 404.8L757.6 397.7ZM749.3 391.7L751.9 402.9M730.5 398.6L733.2 409.9M738.6 404.8L741.4 416.2M757.6 397.7L760.2 409M699 407.9L719.9 406.1L716.3 398.6L695.7 400.3ZM699 407.9L699.4 419.6M719.9 406.1L720.2 417.9M716.3 398.6L716.6 410.1M695.7 400.3L696.2 411.9M753.9 395.4L734.6 396L727.2 404.9L746.7 404.4ZM753.9 395.4L756.2 406.9M734.6 396L737 407.3M727.2 404.9L729.6 416.4M746.7 404.4L749.1 416M1176.3 390.1L1197.3 398.3L1201.8 391L1181.1 383ZM1176.3 390.1L1171.6 401.2M1197.3 398.3L1192.5 409.4M1201.8 391L1197 401.9M1181.1 383L1176.5 393.9M980 368.8L972.7 361.2L952 363.3L959 370.9ZM980 368.8L979.4 381M972.7 361.2L972.1 373.3M952 363.3L951.6 375.3M959 370.9L958.5 383.2M1193.1 395.5L1184.2 384.8L1164.8 382.7L1173.4 393.5ZM1193.1 395.5L1188.3 406.5M1184.2 384.8L1179.5 395.7M1164.8 382.7L1160.2 393.7M1173.4 393.5L1168.7 404.6M895.8 372.6L879 368.5L865.5 377.8L882.3 382.2ZM895.8 372.6L897.4 384.1M879 368.5L880.7 379.8M865.5 377.8L867.3 389.2M882.3 382.2L884 393.6M1316.6 403.1L1304.7 407.9L1321.4 421.6L1333.2 416.6ZM1316.6 403.1L1309.8 412.2M1304.7 407.9L1297.9 417.1M1321.4 421.6L1314.4 430.8M1333.2 416.6L1326.2 425.7M933.8 365.5L912.2 365.9L909.3 373.2L931.2 372.8ZM933.8 365.5L934.4 377.8M912.2 365.9L912.9 378.1M909.3 373.2L910 385.5M931.2 372.8L931.8 385.2M1332.5 419.3L1319.6 404.9L1303.8 405.7L1316.6 420.2ZM1332.5 419.3L1325.4 428.5M1319.6 404.9L1312.7 414.1M1303.8 405.7L1297 414.9M1316.6 420.2L1309.5 429.4M399.9 418.5L414.3 408.1L398.1 405.4L383.6 415.6ZM399.9 418.5L403.6 429.5M414.3 408.1L417.8 419.1M398.1 405.4L401.7 416.3M383.6 415.6L387.3 426.6M318.5 425.4L336 416L322.5 411.8L304.9 421.2ZM318.5 425.4L322.3 436.5M336 416L339.7 427M322.5 411.8L326.2 422.8M304.9 421.2L308.8 432.2M1004.6 373.8L1026.6 375.4L1022.7 367.6L1001.1 366ZM1004.6 373.8L1002.5 386.2M1026.6 375.4L1024.4 387.8M1022.7 367.6L1020.6 379.8M1001.1 366L999.1 378.2M1128.3 385.1L1148.1 394.1L1157.1 388.7L1137.5 379.9ZM1128.3 385.1L1124.1 396.5M1148.1 394.1L1143.7 405.6M1157.1 388.7L1152.7 400.1M1137.5 379.9L1133.3 391.2M938 370.4L956.2 375.7L968.9 369.4L950.7 364.3ZM938 370.4L937.4 382.7M956.2 375.7L955.6 388.1M968.9 369.4L968.2 381.7M950.7 364.3L950.1 376.4M839.3 381.1L836.8 392.1L858.3 389.9L860.5 378.8ZM839.3 381.1L841.6 392.2M836.8 392.1L839.2 403.3M858.3 389.9L860.5 401.1M860.5 378.8L862.7 390M982.2 364.3L973.6 370.1L994.2 375.1L1002.6 369.1ZM982.2 364.3L980.6 376.5M973.6 370.1L972 382.5M994.2 375.1L992.5 387.6M1002.6 369.1L1000.8 381.5M348.2 411.6L326.3 416.3L325.8 425.7L348.1 420.9ZM348.2 411.6L351.9 422.5M326.3 416.3L330 427.2M325.8 425.7L329.6 436.7M348.1 420.9L351.8 431.9M1202.4 393.3L1212.6 405.8L1231.1 407.4L1220.7 394.9ZM1202.4 393.3L1196.8 403.8M1212.6 405.8L1206.8 416.4M1231.1 407.4L1225.2 417.8M1220.7 394.9L1214.9 405.3M379.9 410.3L358.5 413.5L354.2 423.8L375.9 420.6ZM379.9 410.3L383.6 421.2M358.5 413.5L362.3 424.4M354.2 423.8L358.1 434.8M375.9 420.6L379.7 431.6M925.4 374.2L947.8 374.3L949.3 367.7L927.3 367.6ZM925.4 374.2L925.6 386.9M947.8 374.3L947.8 387.1M949.3 367.7L949.3 380.2M927.3 367.6L927.4 380M858.7 387.8L847.5 380.3L829.1 388.8L840.1 396.4ZM858.7 387.8L860.9 399M847.5 380.3L849.7 391.4M829.1 388.8L831.5 399.9M840.1 396.4L842.5 407.6M867.1 377.6L847 384.5L854.7 393.5L875 386.4ZM867.1 377.6L869.3 388.7M847 384.5L849.4 395.7M854.7 393.5L857 404.8M875 386.4L877.2 397.7M563.4 410.2L575.1 416.9L593.4 409.7L581.5 403.2ZM563.4 410.2L565.2 421.7M575.1 416.9L576.8 428.4M593.4 409.7L595 421.2M581.5 403.2L583.2 414.6M1163.5 386.7L1158.5 394.4L1179.8 402.7L1184.5 394.8ZM1163.5 386.7L1158.9 397.8M1158.5 394.4L1153.9 405.6M1179.8 402.7L1175 413.9M1184.5 394.8L1179.8 405.9M634.7 408L644.9 416L664 410.4L653.6 402.5ZM634.7 408L635.6 419.5M644.9 416L645.8 427.6M664 410.4L664.8 421.8M653.6 402.5L654.4 413.9M1221.2 401.7L1237 414.3L1251.2 411.8L1235.4 399.4ZM1221.2 401.7L1215.5 412.2M1237 414.3L1231 424.8M1251.2 411.8L1245.2 422.2M1235.4 399.4L1229.6 409.8M748.3 402.7L727.9 403.9L722.4 412.7L743.1 411.5ZM748.3 402.7L750.4 414.4M727.9 403.9L730.1 415.6M722.4 412.7L724.7 424.5M743.1 411.5L745.4 423.3M1252.3 404.3L1233.2 401.7L1242.3 413.8L1261.7 416.4ZM1252.3 404.3L1246.5 414.8M1233.2 401.7L1227.5 412.2M1242.3 413.8L1236.5 424.4M1261.7 416.4L1255.7 427M1305.8 427.5L1311.5 418.5L1291.5 407.5L1285.5 416.4ZM1305.8 427.5L1299 437.2M1311.5 418.5L1304.8 428M1291.5 407.5L1284.9 417.1M1285.5 416.4L1278.9 426M1319 417.7L1298.9 411.6L1302.8 425.2L1323.1 431.4ZM1319 417.7L1311.8 426.9M1298.9 411.6L1291.9 420.8M1302.8 425.2L1295.6 434.5M1323.1 431.4L1315.8 440.6M393.7 425L415.9 420.8L417.1 410.7L395.2 414.7ZM393.7 425L397.4 436.1M415.9 420.8L419.4 431.9M417.1 410.7L420.6 421.7M395.2 414.7L398.9 425.7M1190.4 407.4L1195.6 399.6L1174.5 391.2L1169 398.8ZM1190.4 407.4L1185.5 418.6M1195.6 399.6L1190.8 410.7M1174.5 391.2L1169.8 402.3M1169 398.8L1164.3 410M1083.5 388.2L1104.5 390.8L1097 381.1L1076.4 378.5ZM1083.5 388.2L1079.5 400.1M1104.5 390.8L1100.3 402.7M1097 381.1L1093 392.8M1076.4 378.5L1072.5 390.3M1232.3 413.2L1254.1 420.1L1252.5 409.8L1231.1 403.1ZM1232.3 413.2L1226.7 424M1254.1 420.1L1248.3 430.9M1252.5 409.8L1246.9 420.5M1231.1 403.1L1225.6 413.8M910.5 380.2L927.3 385.6L942.1 375.8L925.3 370.6ZM910.5 380.2L912.1 391.9M927.3 385.6L928.8 397.3M942.1 375.8L943.6 387.5M925.3 370.6L926.9 382.2M499.1 423.2L503.6 413.4L481.9 414.2L477 424ZM499.1 423.2L501.2 434.9M503.6 413.4L505.6 425M481.9 414.2L484.1 425.8M477 424L479.3 435.7M1212.1 411.3L1233.7 419.9L1235.3 410.2L1214 401.7ZM1212.1 411.3L1206.3 422M1233.7 419.9L1227.7 430.6M1235.3 410.2L1229.4 420.7M1214 401.7L1208.3 412.3M1138.8 402.8L1155.4 401.6L1141 390.1L1124.5 391.1ZM1138.8 402.8L1133.8 414.2M1155.4 401.6L1150.3 412.9M1141 390.1L1136.1 401.3M1124.5 391.1L1119.6 402.5M347.6 426.4L333 422.3L315.5 432L330.2 436.2ZM347.6 426.4L351.2 437.7M333 422.3L336.6 433.6M315.5 432L319.2 443.3M330.2 436.2L333.9 447.6M362 433.9L371.8 422.6L351.8 423.2L341.7 434.4ZM362 433.9L366.2 445.1M371.8 422.6L375.8 433.7M351.8 423.2L355.9 434.2M341.7 434.4L345.9 445.6M513.2 427.1L517.8 417.2L496 418L491 427.8ZM513.2 427.1L515.2 438.9M517.8 417.2L519.8 428.9M496 418L498.2 429.6M491 427.8L493.2 439.6M886 393.2L871.5 388.9L854.9 398.8L869.2 403.3ZM886 393.2L888.9 405.1M871.5 388.9L874.5 400.6M854.9 398.8L858 410.5M869.2 403.3L872.3 415.2M498.1 424.8L489.9 417.1L468.9 423.5L476.9 431.3ZM498.1 424.8L500.4 436.5M489.9 417.1L492.2 428.7M468.9 423.5L471.4 435.2M476.9 431.3L479.3 443.1M487.5 430.8L503 421.7L486.6 417.5L471 426.5ZM487.5 430.8L489.8 442.7M503 421.7L505.2 433.4M486.6 417.5L488.9 429.1M471 426.5L473.5 438.3M1242.4 422.9L1228 410.8L1211.1 411.5L1225.3 423.8ZM1242.4 422.9L1236.8 434M1228 410.8L1222.6 421.8M1211.1 411.5L1205.8 422.6M1225.3 423.8L1219.9 435M595.9 418.4L575.6 416.4L566.3 426.5L586.8 428.6ZM595.9 418.4L597.4 430.1M575.6 416.4L577.3 428M566.3 426.5L568 438.2M586.8 428.6L588.5 440.4M1249.8 420L1267.3 433L1280.4 429.4L1262.9 416.7ZM1249.8 420L1243.6 430.6M1267.3 433L1260.9 443.6M1280.4 429.4L1273.9 440M1262.9 416.7L1256.6 427.2M478.8 435.3L500.8 429.3L494.1 421L472.4 426.9ZM478.8 435.3L481.3 447.2M500.8 429.3L503.1 441.1M494.1 421L496.4 432.7M472.4 426.9L474.9 438.6M539.2 434.4L560 427.9L550.4 420.2L529.8 426.5ZM539.2 434.4L541.1 446.4M560 427.9L561.7 439.8M550.4 420.2L552.2 431.9M529.8 426.5L531.8 438.3M1306.7 446.6L1326.9 450.1L1318.6 435.6L1298.7 432.1ZM1306.7 446.6L1299.7 456.4M1326.9 450.1L1319.7 459.9M1318.6 435.6L1311.6 445.3M1298.7 432.1L1291.8 441.9M909.7 401.2L933.1 399.1L932.3 386.8L909.4 388.9ZM909.7 401.2L911 412.8M933.1 399.1L934.2 410.7M932.3 386.8L933.4 398.4M909.4 388.9L910.6 400.5M760.9 424.9L781.5 418.6L772.4 411.6L752.1 417.8ZM760.9 424.9L762.8 437.3M781.5 418.6L783.3 430.9M772.4 411.6L774.2 423.7M752.1 417.8L754 430M482.1 424.4L460.6 430.9L468.2 439L490 432.4ZM482.1 424.4L484.6 436.2M460.6 430.9L463.2 442.7M468.2 439L470.7 451M490 432.4L492.4 444.3M1283.2 432.5L1262.4 425.3L1266.1 438.5L1287.2 445.8ZM1283.2 432.5L1275.7 442.3M1262.4 425.3L1255.1 435.3M1266.1 438.5L1258.7 448.5M1287.2 445.8L1279.6 455.7M1060.6 400L1047.5 388.7L1028.5 390.6L1041.4 402ZM1060.6 400L1056.9 412.1M1047.5 388.7L1044 400.6M1028.5 390.6L1025.1 402.6M1041.4 402L1037.8 414.1M752.8 421.7L736.2 417.2L720.8 421.5L737.5 426.1ZM752.8 421.7L752.5 434.7M736.2 417.2L736 430.1M720.8 421.5L720.6 434.5M737.5 426.1L737.3 439.3M686.6 422.7L675.6 417.7L655.9 423.3L666.8 428.4ZM686.6 422.7L688.2 435.5M675.6 417.7L677.2 430.3M655.9 423.3L657.6 436M666.8 428.4L668.4 441.3M1035.5 396.5L1018.1 386.2L1002.3 393.1L1019.8 403.6ZM1035.5 396.5L1033 408.3M1018.1 386.2L1015.7 397.9M1002.3 393.1L1000.1 404.9M1019.8 403.6L1017.3 415.5M923.8 392.2L901.1 396.6L905.3 409.2L928.4 404.7ZM923.8 392.2L925.1 403.6M901.1 396.6L902.6 407.9M905.3 409.2L906.7 420.7M928.4 404.7L929.7 416.2M1234.5 435.9L1239.5 427.7L1217.3 418.6L1212 426.6ZM1234.5 435.9L1229 447.4M1239.5 427.7L1234.1 439M1217.3 418.6L1212.1 429.9M1212 426.6L1206.8 438.1M1026.8 403.3L1026.3 391L1003 388.1L1003 400.4ZM1026.8 403.3L1024.3 415.1M1026.3 391L1023.9 402.7M1003 388.1L1000.7 399.8M1003 400.4L1000.7 412.2M743.3 419.6L720.9 420.1L724.1 426.4L746.9 425.9ZM743.3 419.6L743 432.6M720.9 420.1L720.8 433.2M724.1 426.4L723.9 439.7M746.9 425.9L746.6 439.1M954.7 405.2L969.9 393.9L951.9 386.5L936.6 397.6ZM954.7 405.2L955.6 416.7M969.9 393.9L970.7 405.4M951.9 386.5L952.8 397.9M936.6 397.6L937.7 409M551.2 436.3L570.3 440.3L583.1 430.2L564.2 426.4ZM551.2 436.3L553 448.3M570.3 440.3L572.1 452.3M583.1 430.2L584.8 442M564.2 426.4L565.9 438.2M1018.2 393.2L1030.4 405.1L1050.4 402.8L1038 391.1ZM1018.2 393.2L1015.1 405.2M1030.4 405.1L1027.1 417.2M1050.4 402.8L1047 414.9M1038 391.1L1034.7 403M1123.1 412.6L1106.3 400.4L1090.4 404.7L1107.2 417ZM1123.1 412.6L1118.5 424.1M1106.3 400.4L1101.9 411.9M1090.4 404.7L1086 416.3M1107.2 417L1102.7 428.7M570.9 435.5L582.3 441.1L602.2 433.9L590.6 428.5ZM570.9 435.5L573.2 448M582.3 441.1L584.6 453.7M602.2 433.9L604.4 446.5M590.6 428.5L592.9 440.9M1203.1 434.4L1220 432.9L1204.3 420.8L1187.5 422.1ZM1203.1 434.4L1197.7 446.1M1220 432.9L1214.6 444.5M1204.3 420.8L1199.1 432.3M1187.5 422.1L1182.3 433.8M464.2 440.2L476.9 447L496.6 438.4L483.8 431.9ZM464.2 440.2L466.8 452.3M476.9 447L479.5 459.1M496.6 438.4L499 450.5M483.8 431.9L486.2 443.9M575.8 437.8L561.6 431L543.1 439.2L557.3 446.2ZM575.8 437.8L577.4 449.9M561.6 431L563.2 443M543.1 439.2L544.9 451.3M557.3 446.2L559.1 458.4M494.1 433.8L482 444.2L502.3 446.7L514.2 436.2ZM494.1 433.8L496.5 445.8M482 444.2L484.4 456.4M502.3 446.7L504.6 458.9M514.2 436.2L516.4 448.3M448.5 439.6L450.9 449.4L474.6 444.5L471.8 434.9ZM448.5 439.6L451.2 451.7M450.9 449.4L453.7 461.6M474.6 444.5L477.2 456.7M471.8 434.9L474.4 446.9M636.2 434.1L656.5 435.4L667.9 427.7L647.9 426.5ZM636.2 434.1L638.1 447.2M656.5 435.4L658.2 448.6M667.9 427.7L669.6 440.7M647.9 426.5L649.7 439.4M685.7 425.9L662.9 427.2L659.1 434.8L682.4 433.5ZM685.7 425.9L687.2 438.9M662.9 427.2L664.6 440.2M659.1 434.8L660.8 448M682.4 433.5L683.9 446.7M662.5 431.7L651.1 426.9L630.9 432.8L642.1 437.8ZM662.5 431.7L664.3 444.9M651.1 426.9L652.9 439.8M630.9 432.8L632.8 445.8M642.1 437.8L644 451M972.6 399L948.8 400.8L950.8 416.2L975.1 414.4ZM972.6 399L972.6 409.8M948.8 400.8L949 411.6M950.8 416.2L951 427M975.1 414.4L975.1 425.3M1156.4 432.7L1166.2 425.8L1145.6 414.2L1135.6 420.9ZM1156.4 432.7L1150.7 444.3M1166.2 425.8L1160.4 437.3M1145.6 414.2L1140 425.6M1135.6 420.9L1130 432.4M411.9 451.3L431.9 452.9L444.6 441.3L424.9 439.9ZM411.9 451.3L415.7 463.3M431.9 452.9L435.5 464.9M444.6 441.3L448.1 453.2M424.9 439.9L428.5 451.7M799.1 426.2L800.7 436.4L823.9 431.2L821.9 421.2ZM799.1 426.2L802 438.4M800.7 436.4L803.6 448.7M823.9 431.2L826.7 443.7M821.9 421.2L824.6 433.4M547.3 436.3L527.7 444.2L540.7 451.8L560.5 443.7ZM547.3 436.3L549.1 448.4M527.7 444.2L529.6 456.4M540.7 451.8L542.6 464.2M560.5 443.7L562.2 455.9M1076.6 406.2L1066.5 414.7L1088 425.3L1097.9 416.6ZM1076.6 406.2L1072.3 417.9M1066.5 414.7L1062.2 426.4M1088 425.3L1083.5 437.1M1097.9 416.6L1093.3 428.3M1181.1 438.9L1199.9 438.5L1185.6 426.1L1166.9 426.4ZM1181.1 438.9L1175.7 451M1199.9 438.5L1194.5 450.5M1185.6 426.1L1180.3 437.9M1166.9 426.4L1161.8 438.3M386 461L407.3 451.3L396.3 444.7L375.1 454.1ZM386 461L390 473M407.3 451.3L411.1 463.2M396.3 444.7L400.1 456.5M375.1 454.1L379.2 466.1M678.8 436.9L702.5 435.2L704 427.7L680.7 429.3ZM678.8 436.9L680.3 450.3M702.5 435.2L703.9 448.7M704 427.7L705.3 440.8M680.7 429.3L682.2 442.5M1206.1 436.4L1184.3 426L1175.6 432.7L1197.7 443.4ZM1206.1 436.4L1200.7 448.3M1184.3 426L1179 437.8M1175.6 432.7L1170.3 444.6M1197.7 443.4L1192.2 455.4M1081.7 408.8L1065.3 413.5L1082.5 426.4L1098.8 421.5ZM1081.7 408.8L1077.3 420.5M1065.3 413.5L1061 425.2M1082.5 426.4L1078 438.2M1098.8 421.5L1094.3 433.2M1276.5 447.3L1257.5 445.8L1270 459.9L1289.3 461.4ZM1276.5 447.3L1269.8 458.2M1257.5 445.8L1250.9 456.8M1270 459.9L1263.2 471M1289.3 461.4L1282.4 472.4M888.9 421.4L867.8 416.5L856.8 430.5L878.1 435.6ZM888.9 421.4L890.2 432.5M867.8 416.5L869.2 427.6M856.8 430.5L858.4 441.6M878.1 435.6L879.5 446.7M718.1 429.2L695.4 428.6L689.1 436.6L712.2 437.3ZM718.1 429.2L719 442.4M695.4 428.6L696.4 441.7M689.1 436.6L690.2 450M712.2 437.3L713.2 450.7M971.3 405L961.6 419.9L984.4 426.3L993.8 411.1ZM971.3 405L971.3 415.6M961.6 419.9L961.7 430.5M984.4 426.3L984.2 437M993.8 411.1L993.6 421.8M1056.2 414.7L1034.2 405.4L1024.1 416.7L1046.4 426.2ZM1056.2 414.7L1052.9 426.1M1034.2 405.4L1031.1 416.7M1024.1 416.7L1021.1 428.1M1046.4 426.2L1043.1 437.7M751.8 437.9L742.7 429.1L720.8 431.6L729.6 440.5ZM751.8 437.9L751.1 451M742.7 429.1L742.1 442M720.8 431.6L720.3 444.7M729.6 440.5L729 453.8M777.7 445.2L797.2 436.9L783.9 430L764.6 438.1ZM777.7 445.2L779.7 458M797.2 436.9L799.1 449.5M783.9 430L785.8 442.5M764.6 438.1L766.6 450.7M844.1 430.3L822.9 425.2L812.1 438.9L833.5 444.2ZM844.1 430.3L845.2 441.5M822.9 425.2L824.1 436.4M812.1 438.9L813.4 450.2M833.5 444.2L834.7 455.5M1110.1 417.1L1096.2 423.7L1115.2 437.4L1129.1 430.5ZM1110.1 417.1L1104.8 428.2M1096.2 423.7L1091 434.9M1115.2 437.4L1109.8 448.6M1129.1 430.5L1123.6 441.7M423.9 462.9L443.7 452.5L429.8 446.7L410.1 456.9ZM423.9 462.9L427.6 475.1M443.7 452.5L447.2 464.6M429.8 446.7L433.4 458.7M410.1 456.9L413.8 469M806.4 446.2L821.2 435.5L802.5 429.4L787.6 439.9ZM806.4 446.2L807.6 458.6M821.2 435.5L822.3 447.7M802.5 429.4L803.7 441.5M787.6 439.9L789 452.2M665.6 441.5L688.9 441.4L695.2 433.4L672.4 433.5ZM665.6 441.5L667.2 455.1M688.9 441.4L690.4 455M695.2 433.4L696.6 446.8M672.4 433.5L673.9 446.9M757.3 445.7L776.6 442.3L762.4 434.4L743.2 437.7ZM757.3 445.7L756 459.3M776.6 442.3L775.3 455.6M762.4 434.4L761.2 447.6M743.2 437.7L742.1 451.1M533.7 455.8L548.2 447.9L529.3 447.7L514.6 455.6ZM533.7 455.8L536.8 469.4M548.2 447.9L551.1 461.2M529.3 447.7L532.3 460.9M514.6 455.6L517.7 469M709 435.6L687 432.8L677.1 441.9L699.4 444.9ZM709 435.6L709.6 448.8M687 432.8L687.8 445.9M677.1 441.9L677.9 455.2M699.4 444.9L700.1 458.2M858.6 431.2L863 446L887 441.4L882.2 426.7ZM858.6 431.2L860 442.3M863 446L864.4 457.2M887 441.4L888.2 452.6M882.2 426.7L883.4 437.8M409.5 456L403.3 467.9L427.2 465.4L433 453.6ZM409.5 456L413.3 468.1M403.3 467.9L407.2 480.2M427.2 465.4L431 477.7M433 453.6L436.6 465.7M659.7 436.2L642.9 443.4L660.3 446.8L677.1 439.4ZM659.7 436.2L661.4 449.7M642.9 443.4L644.7 457.1M660.3 446.8L662.1 460.6M677.1 439.4L678.8 453.1M1159.3 435.7L1136.5 434.1L1145.1 447.4L1168.4 449ZM1159.3 435.7L1154.7 447.8M1136.5 434.1L1132.1 446.2M1145.1 447.4L1140.5 459.7M1168.4 449L1163.6 461.3M447.3 457L424.6 457.7L415.3 470L438.4 469.3ZM447.3 457L450.8 469.3M424.6 457.7L428.2 470M415.3 470L419.1 482.4M438.4 469.3L442.1 481.7M879.4 456.6L894.3 442.5L874.7 433L859.7 446.8ZM879.4 456.6L880 467.2M894.3 442.5L894.7 453.1M874.7 433L875.3 443.5M859.7 446.8L860.5 457.3M773.2 445.2L782.7 458.2L805 456.6L795.1 443.8ZM773.2 445.2L770.7 457.6M782.7 458.2L780.1 470.7M805 456.6L802.2 469M795.1 443.8L792.5 456.1M405.4 472.3L426.1 474.3L439.8 462L419.3 460.1ZM405.4 472.3L409.2 484.8M426.1 474.3L429.9 486.8M439.8 462L443.4 474.3M419.3 460.1L423 472.4M1127.4 454.1L1144.5 449.3L1126.3 436.6L1109.2 441.3ZM1127.4 454.1L1122.9 466.6M1144.5 449.3L1140 461.7M1126.3 436.6L1121.9 449M1109.2 441.3L1104.9 453.7M1237.1 466.5L1216.5 452.3L1205.2 458.2L1226 472.7ZM1237.1 466.5L1229.7 477.8M1216.5 452.3L1209.4 463.5M1205.2 458.2L1198 469.6M1226 472.7L1218.6 484.1M573.1 450.7L548.6 455.3L550.1 462.2L575 457.5ZM573.1 450.7L575.6 464.4M548.6 455.3L551.3 469M550.1 462.2L552.8 476.2M575 457.5L577.7 471.5M1065 444.9L1046.8 431L1029.3 439.1L1047.4 453.2ZM1065 444.9L1061.4 456.3M1046.8 431L1043.4 442.5M1029.3 439.1L1026 450.6M1047.4 453.2L1043.9 464.7M654.5 448.8L661.4 458.6L685.6 454.4L678.4 444.7ZM654.5 448.8L655.4 462.3M661.4 458.6L662.3 472.3M685.6 454.4L686.4 467.9M678.4 444.7L679.2 458.1M669.6 449.8L678 459.5L701.8 454.9L693 445.4ZM669.6 449.8L670.3 463.3M678 459.5L678.7 473.1M701.8 454.9L702.3 468.5M693 445.4L693.6 458.8M1177.6 465.4L1167.5 449.8L1145 448.1L1154.7 463.8ZM1177.6 465.4L1171.5 477.1M1167.5 449.8L1161.6 461.4M1145 448.1L1139.3 459.8M1154.7 463.8L1148.8 475.5M713 457.4L705.6 448.1L681.6 451.9L688.6 461.4ZM713 457.4L713.6 471.2M705.6 448.1L706.3 461.7M681.6 451.9L682.4 465.6M688.6 461.4L689.3 475.3M534.5 467.4L559.6 464.3L563.4 456.5L538.7 459.6ZM534.5 467.4L537.3 481.6M559.6 464.3L562.4 478.5M563.4 456.5L566 470.5M538.7 459.6L541.5 473.5M602.2 452.3L588.8 460.7L610.4 461.6L623.5 453.1ZM602.2 452.3L604.5 466.3M588.8 460.7L591.3 474.9M610.4 461.6L612.8 475.9M623.5 453.1L625.7 467.2M693.5 460.4L692.9 449.8L667.8 450.9L667.8 461.6ZM693.5 460.4L694.1 474.1M692.9 449.8L693.5 463.3M667.8 450.9L668.6 464.5M667.8 461.6L668.6 475.3M697.4 453L674.2 449.9L664.1 460.1L687.7 463.3ZM697.4 453L698 466.6M674.2 449.9L674.9 463.5M664.1 460.1L664.9 473.8M687.7 463.3L688.4 477.1M1029.8 442.2L1005.2 447.6L1013.3 466.1L1038.2 460.6ZM1029.8 442.2L1029.1 452.2M1005.2 447.6L1004.8 457.6M1013.3 466.1L1012.8 476M1038.2 460.6L1037.4 470.6M957 459.4L968.4 477.5L991.8 468.3L980 450.4ZM957 459.4L957.2 468.7M968.4 477.5L968.5 486.7M991.8 468.3L991.6 477.6M980 450.4L980 459.8M1086.4 458.8L1111.7 467L1118.8 453.9L1093.9 446ZM1086.4 458.8L1083.4 471.1M1111.7 467L1108.5 479.3M1118.8 453.9L1115.6 466.1M1093.9 446L1090.8 458.2M449.2 478.3L464.3 480.3L484.7 471L469.5 469.2ZM449.2 478.3L453.2 492.2M464.3 480.3L468.3 494.4M484.7 471L488.6 485M469.5 469.2L473.4 482.9M794.1 476.3L799.8 463.9L775.8 456.7L769.6 468.9ZM794.1 476.3L791.1 488.9M799.8 463.9L796.8 476.3M775.8 456.7L773 469.2M769.6 468.9L766.8 481.5M750.4 472.3L763 460.6L741.1 451.6L728.2 463ZM750.4 472.3L748.8 484.8M763 460.6L761.3 472.9M741.1 451.6L739.6 463.9M728.2 463L726.8 475.5M794.3 461.1L793.2 474.4L818.3 479.3L818.8 466ZM794.3 461.1L791.3 473.6M793.2 474.4L790.2 487M818.3 479.3L815 491.9M818.8 466L815.7 478.4M657.5 456.4L661.5 466.8L687 463.4L682.5 453.1ZM657.5 456.4L658.6 470.1M661.5 466.8L662.6 480.7M687 463.4L688 477.3M682.5 453.1L683.5 466.8M575.6 468.4L590.8 460L570.3 458.9L554.9 467.1ZM575.6 468.4L578.2 482.9M590.8 460L593.3 474.3M570.3 458.9L572.9 473M554.9 467.1L557.6 481.5M441.6 475.4L417.8 484.1L426.1 487.9L450.2 478.9ZM441.6 475.4L446.1 489.1M417.8 484.1L422.5 498M426.1 487.9L430.8 502M450.2 478.9L454.8 492.9M429.2 483.5L444.6 485L464.8 475.3L449.4 474ZM429.2 483.5L433.6 497.4M444.6 485L449 499.1M464.8 475.3L469.1 489.2M449.4 474L453.7 487.7M868.9 476.1L885.2 491.6L905 478.7L888.5 463.5ZM868.9 476.1L869.1 485.6M885.2 491.6L885.3 501M905 478.7L904.8 488.2M888.5 463.5L888.5 473.1M551.3 469.6L574.2 469.5L586.2 461L563.7 461.1ZM551.3 469.6L554 484.1M574.2 469.5L576.8 484.2M586.2 461L588.7 475.4M563.7 461.1L566.2 475.4M1085.9 450.6L1073.4 462L1096.8 472.6L1109.1 461ZM1085.9 450.6L1083 462.9M1073.4 462L1070.6 474.3M1096.8 472.6L1093.8 485M1109.1 461L1106 473.2M863.9 468.7L840 474.9L848.6 493.9L872.8 487.4ZM863.9 468.7L863.4 478.2M840 474.9L839.8 484.5M848.6 493.9L848.2 503.3M872.8 487.4L872.2 496.9M476.2 472.2L463.7 480.9L486.8 479.4L498.8 470.7ZM476.2 472.2L479.6 486.3M463.7 480.9L467.3 495.3M486.8 479.4L490.3 493.9M498.8 470.7L502.2 484.8M431.7 481.7L431.6 488.7L457.5 481.7L457.1 474.9ZM431.7 481.7L436.1 495.6M431.6 488.7L436.1 502.9M457.5 481.7L461.9 495.8M457.1 474.9L461.4 488.8M874.2 489.7L859 473.2L838.3 484L853.4 500.8ZM874.2 489.7L873.2 499.3M859 473.2L858.2 482.9M838.3 484L837.7 493.7M853.4 500.8L852.6 510.4M403.4 489.7L407.7 495.2L433.4 486.7L428.7 481.5ZM403.4 489.7L408.1 503.7M407.7 495.2L412.4 509.4M433.4 486.7L438 500.9M428.7 481.5L433.2 495.4M807.3 475.4L783.1 467.4L775.8 480.9L800.4 489.1ZM807.3 475.4L804.3 487.5M783.1 467.4L780.3 479.6M775.8 480.9L773 493.2M800.4 489.1L797.4 501.3M1159.4 486L1176.6 480.8L1157.4 465.6L1140.3 470.5ZM1159.4 486L1153.3 498.3M1176.6 480.8L1170.4 493M1157.4 465.6L1151.5 477.7M1140.3 470.5L1134.4 482.7M954.3 489.7L936.5 474.2L917.2 488.2L934.9 504ZM954.3 489.7L954 498.7M936.5 474.2L936.4 483.2M917.2 488.2L917.4 497.1M934.9 504L934.8 512.9M1034.9 476.4L1057.1 487.6L1072.5 471.6L1050.3 460.8ZM1034.9 476.4L1035.2 487M1057.1 487.6L1057.1 498.2M1072.5 471.6L1072.4 482.3M1050.3 460.8L1050.5 471.5M1033.7 486.8L1061 488.2L1062.7 468.8L1035.8 467.6ZM1033.7 486.8L1034 497.4M1061 488.2L1061 498.9M1062.7 468.8L1062.6 479.5M1035.8 467.6L1036.1 478.2M1001.3 484.1L1022.8 496.3L1038.9 480.4L1017.3 468.5ZM1001.3 484.1L1001.3 494.2M1022.8 496.3L1022.6 506.5M1038.9 480.4L1038.5 490.6M1017.3 468.5L1017.2 478.7M693.8 465.5L690.5 481.2L717 484.5L719.8 468.8ZM693.8 465.5L692.8 477.9M690.5 481.2L689.5 493.7M717 484.5L715.7 497M719.8 468.8L718.6 481.1M1087.5 481.4L1114.6 485.2L1113 469L1086.4 465.3ZM1087.5 481.4L1084.1 493.7M1114.6 485.2L1111 497.5M1113 469L1109.5 481.2M1086.4 465.3L1083.1 477.6M757.8 492.9L774.7 481.6L754.8 469.9L737.7 480.9ZM757.8 492.9L756.4 505.3M774.7 481.6L773.2 493.9M754.8 469.9L753.4 482.2M737.7 480.9L736.5 493.3M564 470.7L540.8 470.4L527.7 479.8L551.3 480.2ZM564 470.7L566.5 485.4M540.8 470.4L543.5 484.9M527.7 479.8L530.5 494.5M551.3 480.2L553.9 495.1M1099.7 487.8L1121.6 482L1105.7 466L1084.1 471.6ZM1099.7 487.8L1095.9 499.9M1121.6 482L1117.7 494.1M1105.7 466L1102 478.1M1084.1 471.6L1080.5 483.6M415.4 488.5L390.7 497.8L399.4 501.7L424.5 492.2ZM415.4 488.5L420.1 502.6M390.7 497.8L395.5 512.1M399.4 501.7L404.4 516.2M424.5 492.2L429.3 506.6M1093.4 472L1066.4 468.1L1062.5 484.8L1089.9 489ZM1093.4 472L1091.9 484M1066.4 468.1L1065.2 480M1062.5 484.8L1061.3 496.8M1089.9 489L1088.4 501.1M782.6 490.2L769.3 474.4L746.7 480.7L759.8 496.8ZM782.6 490.2L780.6 502.2M769.3 474.4L767.4 486.4M746.7 480.7L744.9 492.8M759.8 496.8L757.9 508.8M750 485.7L730.8 473.2L712.4 484L731.8 496.8ZM750 485.7L748.6 498M730.8 473.2L729.5 485.5M712.4 484L711.3 496.4M731.8 496.8L730.5 509.2M798.2 509.1L818.5 500.9L802.6 483.5L782.4 491.5ZM798.2 509.1L794.5 519.9M818.5 500.9L814.7 511.6M802.6 483.5L799 494.3M782.4 491.5L778.9 502.3M391 497.6L388.8 504.9L415.9 497.8L417.4 490.6ZM391 497.6L395.8 511.9M388.8 504.9L393.7 519.6M415.9 497.8L420.6 512.4M417.4 490.6L422.1 505M1029.1 506.5L1045.2 490L1023.2 478.5L1007.2 494.7ZM1029.1 506.5L1029.4 516.9M1045.2 490L1045.4 500.5M1023.2 478.5L1023.6 488.9M1007.2 494.7L1007.7 505M910.9 507.1L927.6 524.4L948.4 510.6L931.5 493.6ZM910.9 507.1L911 515.9M927.6 524.4L927.6 533.1M948.4 510.6L948.1 519.4M931.5 493.6L931.4 502.5M497 490L520.2 481.5L505.8 478.1L482.8 486.4ZM497 490L500.4 505.2M520.2 481.5L523.4 496.6M505.8 478.1L509.1 493M482.8 486.4L486.2 501.4M983.7 516.9L981.3 494.6L954.7 496L956.7 518.3ZM983.7 516.9L983.3 525.4M981.3 494.6L980.9 503.3M954.7 496L954.6 504.7M956.7 518.3L956.6 526.8M551.2 474.8L524.1 477.9L523.3 489.2L551 486ZM551.2 474.8L553.2 489.2M524.1 477.9L526.3 492.2M523.3 489.2L525.6 503.8M551 486L553.1 500.6M926.9 526.2L936.3 505.6L911.5 497.6L901.9 518ZM926.9 526.2L926.7 534.9M936.3 505.6L936 514.4M911.5 497.6L911.5 506.4M901.9 518L901.9 526.7M624.9 490.5L645.1 481.1L626.6 474.3L606.4 483.4ZM624.9 490.5L626.3 505.3M645.1 481.1L646.3 495.7M626.6 474.3L627.9 488.7M606.4 483.4L607.9 498M1087.1 506.4L1109.9 495.8L1093.2 478.9L1070.6 489.2ZM1087.1 506.4L1085.8 517.2M1109.9 495.8L1108.4 506.7M1093.2 478.9L1091.8 489.8M1070.6 489.2L1069.5 500M488.3 493L516.2 488.2L516.9 480.2L489.7 484.8ZM488.3 493L491.6 508.4M516.2 488.2L519.3 503.5M516.9 480.2L520 495.1M489.7 484.8L492.9 499.9M892.6 509.5L895.4 531.8L922.2 529.5L918.9 507.2ZM892.6 509.5L892.6 518.1M895.4 531.8L895.4 540.2M922.2 529.5L921.9 538M918.9 507.2L918.7 515.9M461.5 490.1L462.6 497.3L490.2 490.4L488.5 483.4ZM461.5 490.1L465.6 505M462.6 497.3L466.7 512.6M490.2 490.4L494.2 505.6M488.5 483.4L492.4 498.2M981.5 524.5L979.2 502.7L952.4 504.7L954.3 526.4ZM981.5 524.5L981.8 533.6M979.2 502.7L979.5 511.9M952.4 504.7L953 513.8M954.3 526.4L954.9 535.5M1019.8 521L1034.3 502.5L1011 492.3L996.5 510.5ZM1019.8 521L1020.8 530.9M1034.3 502.5L1035.2 512.5M1011 492.3L1012.2 502.3M996.5 510.5L997.8 520.4M767.3 507.8L753.9 488.8L730.7 496.2L744 515.5ZM767.3 507.8L764.4 518.3M753.9 488.8L751.1 499.4M730.7 496.2L728.2 506.8M744 515.5L741.3 526M406.1 497.9L378.8 504.8L383.5 510.1L411.4 503ZM406.1 497.9L409.6 512.9M378.8 504.8L382.5 519.9M383.5 510.1L387.3 525.5M411.4 503L415 518.3M832.2 516.7L847.8 535.5L868 528.4L852.4 509.9ZM832.2 516.7L827.5 527.5M847.8 535.5L842.9 546.2M868 528.4L862.9 539M852.4 509.9L847.5 520.6M464.4 489.2L437.2 495.7L436.1 503.3L464 496.6ZM464.4 489.2L468.6 504.1M437.2 495.7L441.5 510.7M436.1 503.3L440.5 518.6M464 496.6L468.3 511.8M888.5 520.3L862.4 514.8L857.2 536.4L883.7 542ZM888.5 520.3L887 529.2M862.4 514.8L861.2 523.7M857.2 536.4L856.1 545.2M883.7 542L882.2 550.7M999.8 535.2L1009.5 514.6L984 507.9L974 528.2ZM999.8 535.2L1000.9 545M1009.5 514.6L1010.5 524.5M984 507.9L985.2 517.8M974 528.2L975.3 537.9M1075.2 517.6L1067.7 497.1L1040.6 502L1047.6 522.5ZM1075.2 517.6L1074.7 528M1067.7 497.1L1067.3 507.6M1040.6 502L1040.5 512.4M1047.6 522.5L1047.5 532.9M693.5 491.2L666.1 490.2L665.8 508.3L693.8 509.3ZM693.5 491.2L692.5 503.6M666.1 490.2L665.4 502.6M665.8 508.3L665.1 520.8M693.8 509.3L692.8 521.7M458.3 497.5L448.2 493.4L422.3 502.4L432 506.8ZM458.3 497.5L462.6 512.8M448.2 493.4L452.5 508.4M422.3 502.4L426.8 517.6M432 506.8L436.5 522.3M462.1 492.7L435.3 497.7L428.4 506.5L455.9 501.4ZM462.1 492.7L466.4 507.8M435.3 497.7L439.6 512.8M428.4 506.5L432.9 521.9M455.9 501.4L460.2 516.8M985.1 518.4L982.7 540.2L1010.7 541.2L1012.6 519.2ZM985.1 518.4L986.4 528.2M982.7 540.2L984.1 549.9M1010.7 541.2L1011.7 550.9M1012.6 519.2L1013.6 529M1035.8 527.7L1014.2 514.7L996.2 531.9L1017.7 545.3ZM1035.8 527.7L1036.9 537.8M1014.2 514.7L1015.6 524.7M996.2 531.9L997.8 541.8M1017.7 545.3L1019 555.3M935 561.4L960 550.9L947.8 530.9L923.1 541.1ZM935 561.4L935.9 570.5M960 550.9L960.6 560.1M947.8 530.9L948.6 540.2M923.1 541.1L924.2 550.3M1013.5 521.3L998.9 540.6L1023.2 552L1037.8 532.2ZM1013.5 521.3L1014.5 531M998.9 540.6L1000 550.3M1023.2 552L1024.1 561.7M1037.8 532.2L1038.5 542M366.9 520.2L396.7 514L395.9 507.9L366.8 513.9ZM366.9 520.2L370.7 536.4M396.7 514L400.3 530.1M395.9 507.9L399.4 523.6M366.8 513.9L370.5 529.7M433.2 502.6L404.8 510.3L406.4 517.1L435.5 509.1ZM433.2 502.6L437.7 518M404.8 510.3L409.4 525.9M406.4 517.1L411.1 533M435.5 509.1L440 525M971.1 531.7L961.9 553.1L988.6 559.7L997.5 538.1ZM971.1 531.7L972.4 541.5M961.9 553.1L963.4 562.7M988.6 559.7L989.7 569.4M997.5 538.1L998.5 547.8M876.2 570L899.5 562.3L885.9 541.6L862.8 549ZM876.2 570L872.6 579.7M899.5 562.3L895.6 572M885.9 541.6L882.2 551.4M862.8 549L859.3 558.8M813.1 533.7L786.8 525.4L779.9 546L806.7 554.5ZM813.1 533.7L809.9 543.7M786.8 525.4L783.8 535.4M779.9 546L777 556M806.7 554.5L803.5 564.4M524.1 501.5L527.6 513L556.8 507.7L552.7 496.5ZM524.1 501.5L526.4 516.8M527.6 513L530 528.5M556.8 507.7L559 523.2M552.7 496.5L554.8 511.7M886.6 562.1L907.4 577.5L925.7 560.9L904.9 545.8ZM886.6 562.1L886.5 571.7M907.4 577.5L907.1 587.1M925.7 560.9L925.2 570.6M904.9 545.8L904.6 555.5M595.6 524.8L586.1 506.1L558.1 512.3L567.2 531.3ZM595.6 524.8L595.2 537.4M586.1 506.1L585.8 518.6M558.1 512.3L558.1 524.9M567.2 531.3L567.2 544M509.9 507.1L483.8 506L470 519.1L496.7 520.2ZM509.9 507.1L513 522.4M483.8 506L486.9 521.3M470 519.1L473.3 534.7M496.7 520.2L499.9 535.9M1000.7 549.4L972.5 548L969.6 571L998.2 572.5ZM1000.7 549.4L1001.7 559.1M972.5 548L973.9 557.7M969.6 571L971 580.6M998.2 572.5L999.3 582.1M896 583L900.1 564.1L873.9 555.2L869.2 573.9ZM896 583L891 594.1M900.1 564.1L895.2 575.1M873.9 555.2L869.3 566.3M869.2 573.9L864.6 585M1056.3 547.2L1030.8 536.6L1016.9 557L1042.6 568ZM1056.3 547.2L1056.9 557M1030.8 536.6L1031.6 546.4M1016.9 557L1017.9 566.6M1042.6 568L1043.3 577.7M730.3 544.6L711 526.1L690 540.1L709.4 558.9ZM730.3 544.6L727.6 554.5M711 526.1L708.5 536.2M690 540.1L687.8 550.1M709.4 558.9L706.9 568.8M953.1 569.4L977.5 580.5L992.2 560.1L967.9 549.4ZM953.1 569.4L955 579.2M977.5 580.5L979.1 590.3M992.2 560.1L993.6 570M967.9 549.4L969.6 559.3M427.3 527.6L457.6 520.3L453.8 509L424.3 516ZM427.3 527.6L431.2 543.2M457.6 520.3L461.1 535.9M453.8 509L457.3 524.3M424.3 516L428 531.3M738.4 564.7L762.3 554.1L747 533.3L723.2 543.5ZM738.4 564.7L735.7 574.4M762.3 554.1L759.4 563.8M747 533.3L744.3 543.2M723.2 543.5L720.7 553.4M977.7 552.5L979.5 575.7L1008.4 573.5L1006.1 550.2ZM977.7 552.5L979 562.1M979.5 575.7L980.8 585.2M1008.4 573.5L1009.3 583.1M1006.1 550.2L1007.1 559.9M517.9 508.5L511.6 528.7L541.6 532.3L547.3 512ZM517.9 508.5L518.2 521.1M511.6 528.7L511.9 541.4M541.6 532.3L541.7 544.9M547.3 512L547.3 524.6M508.3 517L494 508.8L467.5 519L481.6 527.5ZM508.3 517L511.4 532.7M494 508.8L497.1 524.3M467.5 519L470.9 534.7M481.6 527.5L484.9 543.4M541.7 528L564.3 541.8L584.3 526L562 512.7ZM541.7 528L541.9 540.7M564.3 541.8L564.2 554.4M584.3 526L584 538.6M562 512.7L562 525.3M900.6 572.9L873.5 567.4L873.2 587L900.9 592.6ZM900.6 572.9L896.2 584.7M873.5 567.4L869.3 579.2M873.2 587L868.9 598.9M900.9 592.6L896.4 604.4M451.2 533.4L473 520.5L451.7 515.8L429.7 528.4ZM451.2 533.4L454.8 549.4M473 520.5L476.4 536.3M451.7 515.8L455.2 531.3M429.7 528.4L433.4 544.2M462.2 537L486.9 524.7L468.3 517.6L443.6 529.6ZM462.2 537L465.6 553M486.9 524.7L490.1 540.5M468.3 517.6L471.6 533.2M443.6 529.6L447.1 545.4M653.7 545.4L654.5 570.1L684.3 570.9L682.9 546.4ZM653.7 545.4L651.6 555.3M654.5 570.1L652.4 579.9M684.3 570.9L681.8 580.6M682.9 546.4L680.5 556.2M895.3 603.1L920.5 599.3L908 579.5L883.1 583ZM895.3 603.1L891.1 615.3M920.5 599.3L916 611.5M908 579.5L903.7 591.6M883.1 583L879.1 595.2M756.3 561.5L738.2 579.1L761.1 596.7L778.9 578.6ZM756.3 561.5L753.5 571.1M738.2 579.1L735.7 588.6M761.1 596.7L758.2 606M778.9 578.6L775.8 588M739.5 596.1L767.6 591.3L759.3 566.9L731.5 571.4ZM739.5 596.1L736.8 605.4M767.6 591.3L764.6 600.6M759.3 566.9L756.4 576.3M731.5 571.4L729 580.8M441.8 539L438.9 527.6L407.3 532.3L409.5 544ZM441.8 539L443.9 555.8M438.9 527.6L440.9 544M407.3 532.3L409.6 548.8M409.5 544L411.8 560.8M942.5 611.7L930.4 591.7L904.4 596.3L916 616.6ZM942.5 611.7L939.4 624M930.4 591.7L927.5 603.9M904.4 596.3L901.7 608.6M916 616.6L913.1 628.9M584.9 566.6L612.3 579.6L626.2 557.2L599.3 544.5ZM584.9 566.6L583.4 576.3M612.3 579.6L610.4 589.1M626.2 557.2L624.2 566.9M599.3 544.5L597.6 554.3M532.5 544.8L507.6 532.5L488.1 551L513.4 563.7ZM532.5 544.8L533.1 557.2M507.6 532.5L508.5 545M488.1 551L489.2 563.5M513.4 563.7L514.2 576.1M590.5 551.8L589.9 577.7L620.9 579L621 553.3ZM590.5 551.8L589 561.5M589.9 577.7L588.3 587.3M620.9 579L618.9 588.5M621 553.3L619 562.9M402 531.2L380 542.8L404.4 547.8L426 536ZM402 531.2L404.4 547.8M380 542.8L382.5 559.7M404.4 547.8L406.8 564.9M426 536L428.2 552.7M583.1 550.2L552.6 545.1L546.9 570.4L578 575.5ZM583.1 550.2L581.5 560.2M552.6 545.1L551.3 555.2M546.9 570.4L545.7 580.4M578 575.5L576.5 585.3M624.4 564.6L630.8 590.3L660.6 585.9L653.9 560.6ZM624.4 564.6L622.6 574.2M630.8 590.3L628.8 599.7M660.6 585.9L658.3 595.3M653.9 560.6L651.7 570.2M400.6 535.7L394 549.2L426.6 547.9L432.3 534.5ZM400.6 535.7L402.8 552.3M394 549.2L396.3 566.2M426.6 547.9L428.7 564.8M432.3 534.5L434.3 551M482.7 569.1L513.9 561.1L505 539.7L474.3 547.4ZM482.7 569.1L483.8 581.7M513.9 561.1L514.7 573.5M505 539.7L505.9 552.2M474.3 547.4L475.5 560M417.8 555.3L448.7 562.4L460.4 541L430.2 534.1ZM417.8 555.3L418.5 568.3M448.7 562.4L449.1 575.3M460.4 541L460.6 553.9M430.2 534.1L430.7 547.1M867.9 601.8L879 622.4L906.3 617.4L894.8 597.1ZM867.9 601.8L865.6 614.4M879 622.4L876.5 635M906.3 617.4L903.6 630M894.8 597.1L892.2 609.7M746.8 593.3L720.2 580.3L706.8 602.5L733.9 615.8ZM746.8 593.3L744 602.6M720.2 580.3L717.7 589.7M706.8 602.5L704.5 611.8M733.9 615.8L731.2 625M466.6 544L452.2 565.7L481.8 574L495.7 552ZM466.6 544L467.9 556.5M452.2 565.7L453.7 578.3M481.8 574L483 586.5M495.7 552L496.7 564.5M485.1 563.4L472.1 543.1L442.1 554.2L454.8 574.9ZM485.1 563.4L486.2 575.9M472.1 543.1L473.3 555.6M442.1 554.2L443.7 566.7M454.8 574.9L456.3 587.4M709.5 619L739.7 617.8L736 591.5L706.3 592.5ZM709.5 619L707.2 628.1M739.7 617.8L737 626.9M736 591.5L733.3 600.8M706.3 592.5L704 601.9M601.2 578.6L596.6 605.4L627.9 610.1L632 583.3ZM601.2 578.6L599.6 587.9M596.6 605.4L595 614.5M627.9 610.1L625.9 619.1M632 583.3L630 592.5M725.1 624.7L724.1 598.1L694 596.8L694.4 623.6ZM725.1 624.7L722.4 633.8M724.1 598.1L721.5 607.3M694 596.8L691.7 606.1M694.4 623.6L692.1 632.7M775.2 620.8L799.7 636.5L817.3 618L793 602.8ZM775.2 620.8L773.8 632.2M799.7 636.5L798 647.8M817.3 618L815.4 629.3M793 602.8L791.4 614.1M920.9 624.5L941.7 643L962.4 633.1L941.6 615ZM920.9 624.5L916.7 637.7M941.7 643L937.3 656.3M962.4 633.1L957.9 646.2M941.6 615L937.3 628.1M633.2 618.1L663.7 613.2L656.7 586.5L626.6 591.2ZM633.2 618.1L631.2 627.1M663.7 613.2L661.4 622.1M656.7 586.5L654.5 595.7M626.6 591.2L624.7 600.4M846.6 647L872.6 636.2L856.1 616.6L830.4 627ZM846.6 647L845.5 659.7M872.6 636.2L871.2 648.8M856.1 616.6L854.9 629.1M830.4 627L829.5 639.6M907.2 621.6L882.6 630.7L900.1 651.2L924.9 641.6ZM907.2 621.6L904.2 634.3M882.6 630.7L879.8 643.5M900.1 651.2L897.1 664M924.9 641.6L921.7 654.4M870.4 648L871.5 625.2L841.2 622.3L839.4 644.9ZM870.4 648L868.8 660.5M871.5 625.2L870 637.7M841.2 622.3L840 634.7M839.4 644.9L838.2 657.4M657.8 635.8L664.5 608.7L634 601.6L626.7 628.6ZM657.8 635.8L655.5 644.5M664.5 608.7L662.2 617.6M634 601.6L632.2 610.5M626.7 628.6L624.9 637.4M464.5 606.2L494.3 591.7L478.1 568.9L448.5 582.9ZM464.5 606.2L465.1 616.9M494.3 591.7L494.5 602.4M478.1 568.9L478.5 579.8M448.5 582.9L449.3 593.7M508.7 611L515.7 582.9L483.4 577.3L475.7 605.4ZM508.7 611L508 619.9M515.7 582.9L515 592.1M483.4 577.3L483.1 586.5M475.7 605.4L475.5 614.4M678.7 622.3L692.3 648L720.3 637L706.5 611.7ZM678.7 622.3L676.6 631.4M692.3 648L690 656.9M720.3 637L717.7 645.9M706.5 611.7L704.1 620.8M877 655.9L901.6 643.7L882.9 624.1L858.5 635.8ZM877 655.9L875.2 668.4M901.6 643.7L899.6 656.2M882.9 624.1L881.2 636.6M858.5 635.8L856.9 648.3M695.7 614.6L665.2 618.5L671 646.3L702 642ZM695.7 614.6L693.3 623.6M665.2 618.5L663.2 627.6M671 646.3L669 655.1M702 642L699.5 650.9M879.4 630.1L883.6 652.9L914.3 653.2L909.5 630.5ZM879.4 630.1L877 642.9M883.6 652.9L881 665.7M914.3 653.2L911.4 666M909.5 630.5L906.7 643.2M582.9 627.5L581.2 598.8L548.8 600L549.9 628.9ZM582.9 627.5L581.5 636.1M581.2 598.8L579.9 607.6M548.8 600L547.9 608.9M549.9 628.9L549 637.6M752.5 627.2L744.4 650.9L775 658.3L782.4 634.3ZM752.5 627.2L751.5 638.8M744.4 650.9L743.5 662.5M775 658.3L773.6 669.9M782.4 634.3L781 645.9M599 611.7L594.9 640.3L627.2 644.2L630.8 615.7ZM599 611.7L597.5 620.5M594.9 640.3L593.4 648.9M627.2 644.2L625.3 652.7M630.8 615.7L628.8 624.4M449.9 580.2L421.5 596.4L441.6 620L469.8 603.2ZM449.9 580.2L448.4 590.5M421.5 596.4L420.3 606.7M441.6 620L440.1 630M469.8 603.2L468 613.3M688 669.3L713.6 653.2L694.6 630.5L669 646.1ZM688 669.3L686.3 678.8M713.6 653.2L711.6 662.8M694.6 630.5L692.8 640.3M669 646.1L667.6 655.8M710.2 634.7L699.8 658.9L730.2 667.7L740 643.3ZM710.2 634.7L709.5 646.2M699.8 658.9L699.2 670.3M730.2 667.7L729.2 679.1M740 643.3L738.9 654.7M670.3 673.5L684.1 647.4L655.3 634L641 659.9ZM670.3 673.5L668.2 681.9M684.1 647.4L681.8 656M655.3 634L653.4 642.8M641 659.9L639.3 668.4M613.2 676.4L638.5 657.2L617.4 634.5L592 653.1ZM613.2 676.4L611.7 684.8M638.5 657.2L636.6 665.8M617.4 634.5L615.9 643.2M592 653.1L590.8 661.8M581.8 663.8L612.6 675.8L625.5 648.1L595.3 636.4ZM581.8 663.8L580.7 672.3M612.6 675.8L611.1 684.2M625.5 648.1L623.8 656.7M595.3 636.4L594 645.1M728 675L757.7 686.4L770.6 662.7L741.4 651.7ZM728 675L727.4 686.9M757.7 686.4L756.8 698.3M770.6 662.7L769.5 674.6M741.4 651.7L740.6 663.6M829.1 685.7L861.6 684.5L857.5 660.2L825.8 661.3ZM829.1 685.7L828.1 698.8M861.6 684.5L860.2 697.6M857.5 660.2L856.2 673.2M825.8 661.3L824.8 674.4M596.8 680.4L612.6 653.4L583.3 639.4L567.1 666ZM596.8 680.4L595.6 688.6M612.6 653.4L611.1 661.9M583.3 639.4L582.3 648M567.1 666L566.3 674.5M517.3 643.4L493.4 622.1L468.1 644.1L492.3 665.9ZM517.3 643.4L516.6 651.6M493.4 622.1L493 630.6M468.1 644.1L468 652.5M492.3 665.9L491.9 674M736.5 687L730.9 660.6L698.9 664.6L703.9 691.2ZM736.5 687L735.6 698.6M730.9 660.6L730.1 672.3M698.9 664.6L698.5 676.3M703.9 691.2L703.4 702.9M661.1 676.6L633.6 662L614.5 685.4L642.4 700.5ZM661.1 676.6L660.9 688M633.6 662L633.7 673.5M614.5 685.4L614.9 696.8M642.4 700.5L642.4 711.8M584.3 694.3L594.3 664.2L562 655.6L551.4 685.5ZM584.3 694.3L583.3 702.3M594.3 664.2L593.2 672.6M562 655.6L561.3 664.1M551.4 685.5L550.8 693.7M577.8 655.6L551.2 675.6L572.8 699.7L599.3 679.2ZM577.8 655.6L577 664.1M551.2 675.6L550.7 683.9M572.8 699.7L572 707.7M599.3 679.2L598.1 687.3M768 690.9L794.9 706.7L814.2 686.2L787.6 671ZM768 690.9L767.7 704.2M794.9 706.7L794.3 719.9M814.2 686.2L813.4 699.4M787.6 671L787.1 684.2M770.2 712.2L802.2 704.2L791.3 679.8L759.9 687.4ZM770.2 712.2L769.9 725.5M802.2 704.2L801.5 717.5M791.3 679.8L790.8 693.1M759.9 687.4L759.7 700.7M744.8 704.7L771.4 721.3L792.2 700.5L765.8 684.6ZM744.8 704.7L744.8 718.1M771.4 721.3L771.1 734.7M792.2 700.5L791.7 713.9M765.8 684.6L765.6 698M489.1 662.3L453.9 669.1L460.9 701L496.5 693.6ZM489.1 662.3L487.1 671.1M453.9 669.1L452.4 678M460.9 701L459.2 709.5M496.5 693.6L494.3 702.1M680.6 697.9L649.1 688.3L636 715.1L668.1 725.1ZM680.6 697.9L680.4 709.6M649.1 688.3L649.3 700.1M636 715.1L636.3 726.8M668.1 725.1L668 736.8M524.1 707.7L496.9 686.9L472.8 711.9L500.4 733.3ZM524.1 707.7L521.7 716.4M496.9 686.9L495 695.8M472.8 711.9L471.1 720.7M500.4 733.3L498.3 741.8M732.5 706.3L723.2 732.3L757.1 738.8L765.6 712.5ZM732.5 706.3L732.9 720.1M723.2 732.3L723.6 746.2M757.1 738.8L757.2 752.7M765.6 712.5L765.6 726.3M582.9 707.8L581.8 737.8L617.6 735.9L617.8 706.1ZM582.9 707.8L584 719.6M581.8 737.8L583 749.4M617.6 735.9L618.3 747.5M617.8 706.1L618.5 717.9M581.4 728.4L549.4 717.5L532.5 746.2L565.2 757.5ZM581.4 728.4L582.6 740.1M549.4 717.5L551 729.3M532.5 746.2L534.3 757.9M565.2 757.5L566.5 769.1M581 720.7L566.7 749.9L600.4 759.6L614 730ZM581 720.7L582.2 732.5M566.7 749.9L568.1 761.6M600.4 759.6L601.3 771.2M614 730L614.7 741.7M716.7 759.5L721.7 731.4L686.8 728.8L680.9 756.8ZM716.7 759.5L717.3 773.7M721.7 731.4L722.3 745.5M686.8 728.8L687.7 742.9M680.9 756.8L681.9 771M695.1 766.7L718.4 743.6L691.2 727L667.7 749.4ZM695.1 766.7L696 780.9M718.4 743.6L718.9 757.8M691.2 727L692 741.2M667.7 749.4L668.9 763.5M543.4 755.5L567.7 777.2L595.5 753.7L571.3 732.8ZM543.4 755.5L545.4 767.6M567.7 777.2L569.3 789.2M595.5 753.7L596.7 765.8M571.3 732.8L572.8 744.9M578.8 772.2L576.9 740.8L540.2 745.5L541.2 777.2ZM578.8 772.2L580.1 784.1M576.9 740.8L578.2 752.8M540.2 745.5L542.1 757.5M541.2 777.2L543.1 789.1M536.1 778.3L570.4 785.4L585.6 756.8L552.2 750.1ZM536.1 778.3L539.6 793M570.4 785.4L573.4 800.1M585.6 756.8L588.4 771.4M552.2 750.1L555.4 764.8M587 786.9L624.6 779.9L621.1 751.4L584.4 758ZM587 786.9L589.5 801.5M624.6 779.9L626.7 794.5M621.1 751.4L623.2 765.9M584.4 758L587 772.5M638.5 791.1L632.4 762.3L595.5 770.6L600.6 799.9ZM638.5 791.1L640.3 805.8M632.4 762.3L634.2 777M595.5 770.6L597.7 785.3M600.6 799.9L602.9 814.6M609.5 790.9L588.1 769.1L556.3 789.7L577.4 812.4ZM609.5 790.9L611.9 805.9M588.1 769.1L590.6 783.9M556.3 789.7L559.2 804.6M577.4 812.4L580.2 827.4" stroke="#f2a03e" stroke-width="1.2" fill="none" stroke-linejoin="round" opacity=".92"/>
<g transform="translate(-2,-50)">
<!-- Suzanne -->
<g stroke="none">
<path d="M1146.5 261L1152 256.5L1153 270L1148 268.5Z" fill="#a6a6a6"/>
<ellipse cx="1180.5" cy="272.3" rx="7.2" ry="4.3" fill="#b9b9b9" transform="rotate(-14 1180.5 272.3)"/>
<path d="M1149.5 273L1160 275.5L1159 288.2L1152.2 287.5L1149 282Z" fill="#b2b2b2"/>
<ellipse cx="1164" cy="264.8" rx="14.3" ry="10.6" fill="#b3b3b3"/>
<ellipse cx="1167" cy="260.5" rx="9" ry="5" fill="#c2c2c2"/>
<path d="M1156.5 264.5L1160 266L1165 270.5" fill="none" stroke="#7d7d7d" stroke-width="1"/>
<path d="M1150 270Q1156 277 1166 275" fill="none" stroke="#8f8f8f" stroke-width="1"/>
</g>
<!-- 3D cursor -->
<g fill="none">
<path d="M753.4 416V428.3M753.8 438.3V450.6M736.3 438.8L748.4 435M765.1 429.6L769.9 428.3M743 426L750 431.3M756.3 436L763.6 441.3" stroke="#1a1a1a" stroke-width="1.2"/>
<circle cx="753.6" cy="433.3" r="10" stroke="#f2f2f2" stroke-width="1.6"/>
<circle cx="753.6" cy="433.3" r="10" stroke="#e0506a" stroke-width="1.6" stroke-dasharray="3.9 3.95"/>
<circle cx="753.3" cy="433.5" r="2.5" fill="#f3a030" stroke="#3a2a18" stroke-width=".9"/>
</g>
</g>

</svg>
</div>
<div style="left:2px;top:50px;width:1583px;height:25px;background:rgba(45,45,45,.94);border-radius:5px 5px 0 0"></div>
<div style="left:12px;top:53px;width:29.5px;height:18px;background:#272727;border:1px solid #2f2f2f;border-radius:4px"></div>
<svg style="left:15px;top:54.5px;" width="16" height="16" viewBox="0 0 16 16"><path d="M1 8.5H12M1.5 12.5H11.5M4.5 6.5L2.5 15M9 6.5L10 15" stroke="#ddd" stroke-width="1.1" fill="none"/><circle cx="10.5" cy="4" r="3.2" fill="#ddd"/><circle cx="9.5" cy="3" r="1" fill="#fff"/></svg>
<svg style="left:31px;top:58.5px;" width="10" height="8" viewBox="0 0 10 8"><path d="M1.5 2.3L5 5.8L8.5 2.3" fill="none" stroke="#ddd" stroke-width="1.3" stroke-linecap="round" stroke-linejoin="round"/></svg>
<div style="left:50.5px;top:53px;width:107.5px;height:18px;background:#272727;border:1px solid #2f2f2f;border-radius:4px"></div>
<svg style="left:52px;top:54px;" width="16" height="16" viewBox="0 0 16 16"><path d="M1.5 5V1.5H5M11 1.5H14.5V5M14.5 11V14.5H11M5 14.5H1.5V11" fill="none" stroke="#ddd" stroke-width="1.2"/><rect x="4.2" y="4.2" width="7.6" height="7.6" fill="#e6e6e6"/></svg>
<div class="t" style="left:74px;top:55px;color:#e6e6e6">Object Mode</div>
<svg style="left:147px;top:58.5px;" width="10" height="8" viewBox="0 0 10 8"><path d="M1.5 2.3L5 5.8L8.5 2.3" fill="none" stroke="#ddd" stroke-width="1.3" stroke-linecap="round" stroke-linejoin="round"/></svg>
<div class="t" style="left:171px;top:55px;color:#e0e0e0">View</div>
<div class="t" style="left:211.5px;top:55px;color:#e0e0e0">Select</div>
<div class="t" style="left:259px;top:55px;color:#e0e0e0">Add</div>
<div class="t" style="left:296px;top:55px;color:#e0e0e0">Object</div>
<div class="t" style="left:345px;top:55px;color:#e0e0e0">mymenu</div>
<div style="left:670px;top:53px;width:75.5px;height:18px;background:#272727;border:1px solid #2f2f2f;border-radius:4px"></div>
<svg style="left:672px;top:54px;" width="16" height="16" viewBox="0 0 16 16"><path d="M3.5 1.5V12.5H14.5M3.5 12.5L10 6" fill="none" stroke="#ddd" stroke-width="1.2"/><path d="M1.5 4L3.5 1L5.5 4ZM12 10.5L15 12.5L12 14.5Z" fill="#ddd"/></svg>
<div class="t" style="left:694px;top:55px;color:#e6e6e6">Global</div>
<svg style="left:734px;top:58.5px;" width="10" height="8" viewBox="0 0 10 8"><path d="M1.5 2.3L5 5.8L8.5 2.3" fill="none" stroke="#ddd" stroke-width="1.3" stroke-linecap="round" stroke-linejoin="round"/></svg>
<div style="left:752.5px;top:53px;width:30.5px;height:18px;background:#272727;border:1px solid #2f2f2f;border-radius:4px"></div>
<svg style="left:755px;top:54px;" width="16" height="16" viewBox="0 0 16 16"><circle cx="6" cy="10.5" r="4" fill="none" stroke="#ddd" stroke-width="1.3"/><circle cx="10.5" cy="5.5" r="4" fill="none" stroke="#ddd" stroke-width="1.3"/><circle cx="8.3" cy="8" r="1.4" fill="#fff"/></svg>
<svg style="left:771.5px;top:58.5px;" width="10" height="8" viewBox="0 0 10 8"><path d="M1.5 2.3L5 5.8L8.5 2.3" fill="none" stroke="#ddd" stroke-width="1.3" stroke-linecap="round" stroke-linejoin="round"/></svg>
<div style="left:789px;top:53px;width:17.5px;height:18px;background:#454545;border-radius:4px 0 0 4px"></div>
<svg style="left:790px;top:54px;" width="16" height="16" viewBox="0 0 16 16"><path d="M4.5 2.5V8.5A3.5 3.5 0 0 0 11.5 8.5V2.5" transform="rotate(-135 8 8)" fill="none" stroke="#9a9a9a" stroke-width="2.3"/></svg>
<div style="left:806.5px;top:53px;width:33px;height:18px;background:#272727;border:1px solid #2f2f2f;border-radius:0 4px 4px 0"></div>
<svg style="left:808.5px;top:54.5px;" width="16" height="16" viewBox="0 0 16 16"><path d="M1.5 10.5H14.5M1.5 7.5V13.5M5.8 8.5V12.5M10.1 8.5V12.5M14.4 7.5V13.5" stroke="#e6e6e6" stroke-width="1.2"/><rect x="10.5" y="1.5" width="4" height="4" fill="#e6e6e6"/></svg>
<svg style="left:828px;top:58.5px;" width="10" height="8" viewBox="0 0 10 8"><path d="M1.5 2.3L5 5.8L8.5 2.3" fill="none" stroke="#ddd" stroke-width="1.3" stroke-linecap="round" stroke-linejoin="round"/></svg>
<div style="left:846px;top:53px;width:18.5px;height:18px;background:#454545;border-radius:4px 0 0 4px"></div>
<svg style="left:847.5px;top:54px;" width="16" height="16" viewBox="0 0 16 16"><circle cx="8" cy="8" r="6.3" fill="none" stroke="#8a8a8a" stroke-width="1"/><circle cx="8" cy="8" r="2.1" fill="#fff"/></svg>
<div style="left:864.5px;top:53px;width:30.5px;height:18px;background:#2c2c2c;border:1px solid #333;border-radius:0 4px 4px 0"></div>
<svg style="left:867px;top:55px;" width="16" height="14" viewBox="0 0 16 14"><path d="M1.5 12C6 12 5.5 2.5 8 2.5C10.5 2.5 10 12 14.5 12" fill="none" stroke="#555" stroke-width="1.2"/></svg>
<svg style="left:884px;top:58.5px;" width="10" height="8" viewBox="0 0 10 8"><path d="M1.5 2.3L5 5.8L8.5 2.3" fill="none" stroke="#484848" stroke-width="1.3" stroke-linecap="round" stroke-linejoin="round"/></svg>
<svg style="left:1329px;top:54px;" width="20" height="16" viewBox="0 0 20 16"><path d="M1.5 6.5C4 2.5 10 2.5 12.5 6.5C10 10.5 4 10.5 1.5 6.5Z" fill="#ddd"/><circle cx="7" cy="6.5" r="2" fill="#2d2d2d"/><path d="M4 9L4.5 15L6.5 13L9 14.5Z" fill="#ddd" stroke="#2d2d2d" stroke-width=".6"/></svg>
<svg style="left:1348px;top:58.5px;" width="10" height="8" viewBox="0 0 10 8"><path d="M1.5 2.3L5 5.8L8.5 2.3" fill="none" stroke="#ddd" stroke-width="1.3" stroke-linecap="round" stroke-linejoin="round"/></svg>
<div style="left:1366px;top:53px;width:18.5px;height:18px;background:#4772b3;border-radius:4px 0 0 4px"></div>
<svg style="left:1367px;top:54px;" width="16" height="16" viewBox="0 0 16 16"><path d="M3 13L12 4M12 4H8.5M12 4V7.5" stroke="#fff" stroke-width="1.3" fill="none"/><path d="M3 6.5A7 7 0 0 1 10 13.5" stroke="#fff" stroke-width="1.2" fill="none"/></svg>
<div style="left:1384.5px;top:53px;width:18px;height:18px;background:#272727;border:1px solid #2f2f2f;border-radius:0 4px 4px 0"></div>
<svg style="left:1388.5px;top:58.5px;" width="10" height="8" viewBox="0 0 10 8"><path d="M1.5 2.3L5 5.8L8.5 2.3" fill="none" stroke="#ddd" stroke-width="1.3" stroke-linecap="round" stroke-linejoin="round"/></svg>
<div style="left:1411px;top:53px;width:18.5px;height:18px;background:#4772b3;border-radius:4px 0 0 4px"></div>
<svg style="left:1412px;top:54px;" width="16" height="16" viewBox="0 0 16 16"><circle cx="6.5" cy="9" r="4.8" fill="#fff"/><circle cx="10" cy="6.5" r="4.3" fill="none" stroke="#fff" stroke-width="1.2"/></svg>
<div style="left:1429.5px;top:53px;width:17.5px;height:18px;background:#272727;border:1px solid #2f2f2f;border-radius:0 4px 4px 0"></div>
<svg style="left:1433.5px;top:58.5px;" width="10" height="8" viewBox="0 0 10 8"><path d="M1.5 2.3L5 5.8L8.5 2.3" fill="none" stroke="#ddd" stroke-width="1.3" stroke-linecap="round" stroke-linejoin="round"/></svg>
<div style="left:1456px;top:53px;width:18px;height:18px;background:#2c2c2c;border:1px solid #3a3a3a;border-radius:4px"></div>
<svg style="left:1457px;top:54px;" width="16" height="16" viewBox="0 0 16 16"><path d="M2.5 5.5H10.5V13.5H2.5Z" fill="none" stroke="#ddd" stroke-width="1.1"/><path d="M5.5 5V2.5H13.5V10.5H11" fill="none" stroke="#ddd" stroke-width="1.1" stroke-dasharray="2 1"/></svg>
<div style="left:1481px;top:53px;width:76.5px;height:18px;background:#2c2c2c;border:1px solid #3a3a3a;border-radius:4px"></div>
<div style="left:1500px;top:53px;width:19px;height:18px;background:#4772b3"></div>
<svg style="left:1482.5px;top:54px;" width="16" height="16" viewBox="0 0 16 16"><circle cx="8" cy="8" r="5.7" fill="none" stroke="#ddd" stroke-width="1.1"/><ellipse cx="8" cy="8" rx="2.6" ry="5.7" fill="none" stroke="#ddd" stroke-width=".9"/><path d="M2.3 8H13.7" stroke="#ddd" stroke-width=".9"/></svg>
<svg style="left:1501.5px;top:54px;" width="16" height="16" viewBox="0 0 16 16"><circle cx="8" cy="8" r="6" fill="#fff"/></svg>
<svg style="left:1520.5px;top:54px;" width="16" height="16" viewBox="0 0 16 16"><circle cx="8" cy="8" r="5.7" fill="#bbb"/><path d="M8 2.3A5.7 5.7 0 0 1 8 13.7A8 8 0 0 0 8 2.3Z" fill="#555"/><circle cx="8" cy="8" r="5.7" fill="none" stroke="#ddd" stroke-width="1"/></svg>
<svg style="left:1539.5px;top:54px;" width="16" height="16" viewBox="0 0 16 16"><circle cx="8" cy="8" r="5.7" fill="#777"/><circle cx="6.5" cy="6" r="2.5" fill="#ddd"/><circle cx="8" cy="8" r="5.7" fill="none" stroke="#ddd" stroke-width="1"/></svg>
<svg style="left:1561px;top:58.5px;" width="10" height="8" viewBox="0 0 10 8"><path d="M1.5 2.3L5 5.8L8.5 2.3" fill="none" stroke="#ddd" stroke-width="1.3" stroke-linecap="round" stroke-linejoin="round"/></svg>
<div style="left:10px;top:78.5px;width:96px;height:21px;background:rgba(60,60,60,.6);border-radius:4px"></div>
<div style="left:11.1px;top:79.9px;width:18.4px;height:18.2px;background:#4772b3;border-radius:3px 0 0 3px"></div>
<div style="left:30.05px;top:79.9px;width:18.1px;height:18.2px;background:#505050"></div>
<div style="left:48.7px;top:79.9px;width:18.1px;height:18.2px;background:#505050"></div>
<div style="left:67.35px;top:79.9px;width:18.1px;height:18.2px;background:#505050"></div>
<div style="left:86px;top:79.9px;width:18.1px;height:18.2px;background:#505050;border-radius:0 3px 3px 0"></div>
<svg style="left:11.1px;top:79.9px;" width="94" height="18.2" viewBox="0 0 94 18.2"><rect x="2.6" y="2.9" width="12.6" height="12.7" fill="none" stroke="#fff" stroke-width="1.3" stroke-dasharray="2.3 1.9" stroke-dashoffset="1.1"/><path d="M25.2 2.2H34.8V11.9H30.4V16.3H20.8V6.7H25.2Z" fill="#c9c9c9"/><path d="M44.5 2.2H54.1V11.9H49.6V6.7H44.5Z" fill="#c9c9c9"/><path d="M40.6 7.3H49V15.7H40.6Z" fill="none" stroke="#c9c9c9" stroke-width="1.2" stroke-dasharray="2 1.7"/><path d="M63.3 2.2H73V11.9H68.5V6.7H63.3ZM58.9 6.7H63.3V11.9H68.5V16.3H58.9Z" fill="#c9c9c9"/><rect x="78.4" y="2.8" width="12.9" height="12.9" fill="none" stroke="#c9c9c9" stroke-width="1.2" stroke-dasharray="2 1.7"/><rect x="81.5" y="5.9" width="6.7" height="6.7" fill="#c9c9c9"/></svg>
<div class="t" style="left:67px;top:111px;text-shadow:0 0 2px #000,0 1px 1px #000;color:#fff">User Perspective</div>
<div class="t" style="left:67px;top:129px;text-shadow:0 0 2px #000,0 1px 1px #000;color:#fff">(11) Collection | Grid</div>
<div style="left:1501px;top:78px;width:83px;height:22px;background:rgba(50,50,50,.7);border-radius:4px 0 0 4px"></div>
<div style="left:1509px;top:80px;width:71px;height:18px;background:#282828;border-radius:4px"></div>
<div class="t" style="left:1518.5px;top:82px;color:#e6e6e6">Options</div>
<svg style="left:1565px;top:85.5px;" width="10" height="8" viewBox="0 0 10 8"><path d="M1.5 2.3L5 5.8L8.5 2.3" fill="none" stroke="#ddd" stroke-width="1.3" stroke-linecap="round" stroke-linejoin="round"/></svg>
<svg style="left:1575px;top:126px;" width="8" height="12" viewBox="0 0 8 12"><path d="M6 2L2.5 6L6 10" fill="none" stroke="#999" stroke-width="1.2"/></svg>
<div style="left:11px;top:111px;width:38px;height:33.5px;background:#4772b3;border-radius:4px 4px 0 0"></div>
<div style="left:11px;top:144.5px;width:38px;height:33.5px;background:rgba(38,38,38,.93);border-radius:0 0 4px 4px"></div>
<div style="left:11px;top:186px;width:38px;height:138.5px;background:rgba(38,38,38,.93);border-radius:4px"></div>
<div style="left:11px;top:219.5px;width:38px;height:1px;background:#1d1d1d"></div>
<div style="left:11px;top:254px;width:38px;height:1px;background:#1d1d1d"></div>
<div style="left:11px;top:289px;width:38px;height:1px;background:#1d1d1d"></div>
<div style="left:11px;top:331px;width:38px;height:67.5px;background:rgba(38,38,38,.93);border-radius:4px"></div>
<div style="left:11px;top:364.5px;width:38px;height:1px;background:#1d1d1d"></div>
<div style="left:11px;top:406px;width:38px;height:33.5px;background:rgba(38,38,38,.93);border-radius:4px"></div>
<svg style="left:18px;top:115.5px;" width="24" height="24" viewBox="0 0 24 24"><rect x="1.5" y="1.5" width="21" height="21" fill="none" stroke="#e8b84a" stroke-width="1.5" stroke-dasharray="4 2.5"/><path d="M9 6L9 18L12.5 14.5L17.5 14Z" fill="#fff"/></svg>
<svg style="left:18px;top:149px;" width="24" height="24" viewBox="0 0 24 24"><circle cx="12" cy="12" r="10" fill="none" stroke="#eee" stroke-width="1.5"/><circle cx="12" cy="12" r="10" fill="none" stroke="#e06070" stroke-width="1.5" stroke-dasharray="3 5"/><path d="M12 4.5V9.5M12 14.5V19.5M4.5 12H9.5M14.5 12H19.5" stroke="#bbb" stroke-width="1.5"/></svg>
<svg style="left:18px;top:190.5px;" width="24" height="24" viewBox="0 0 24 24"><path d="M12 1L15.5 5.5H8.5ZM12 23L15.5 18.5H8.5ZM1 12L5.5 8.5V15.5ZM23 12L18.5 8.5V15.5Z" fill="#e6e6e6"/><path d="M12 6.5V9.5M12 14.5V17.5M6.5 12H9.5M14.5 12H17.5" stroke="#e6e6e6" stroke-width="1.6"/></svg>
<svg style="left:18px;top:225px;" width="24" height="24" viewBox="0 0 24 24"><path d="M4.5 9A8.5 8.5 0 0 1 20 9.5M19.5 15A8.5 8.5 0 0 1 4 14.5" fill="none" stroke="#e6e6e6" stroke-width="1.5"/><path d="M12 8L16 12L12 16L8 12Z" fill="#ccc"/><path d="M17.5 13.5L20.5 8.5L23.5 13.5ZM0.5 10.5L3.5 15.5L6.5 10.5Z" fill="#e6e6e6"/></svg>
<svg style="left:18px;top:260px;" width="24" height="24" viewBox="0 0 24 24"><path d="M4.5 12V2.5H21.5V19.5H12" fill="none" stroke="#c8c8c8" stroke-width="1.1"/><rect x="2.5" y="12" width="9.5" height="9.5" fill="#e6e6e6"/><path d="M13 11L19 5M19 5H15.5M19 5V8.5" fill="none" stroke="#e6e6e6" stroke-width="1.4"/></svg>
<svg style="left:18px;top:295px;" width="24" height="24" viewBox="0 0 24 24"><path d="M4.8 5.5A9.5 9.5 0 0 1 8.5 3.2M15.5 3.2A9.5 9.5 0 0 1 19.2 5.5M20.8 8.5A9.5 9.5 0 0 1 20.8 15.5M19.2 18.5A9.5 9.5 0 0 1 15.5 20.8M8.5 20.8A9.5 9.5 0 0 1 4.8 18.5M3.2 15.5A9.5 9.5 0 0 1 3.2 8.5" fill="none" stroke="#e6e6e6" stroke-width="1.3"/><rect x="7.8" y="7.8" width="8.4" height="8.4" fill="#e6e6e6"/><path d="M12 2.5L14.5 6H9.5ZM12 21.5L14.5 18H9.5ZM2.5 12L6 9.5V14.5ZM21.5 12L18 9.5V14.5Z" fill="#e6e6e6"/></svg>
<svg style="left:18px;top:336px;" width="24" height="24" viewBox="0 0 24 24"><path d="M4 12.5L15.5 2L19.5 6L8 16.5L3 17.5Z" fill="#e6e6e6"/><path d="M15.5 2L17 0.8L20.7 4.5L19.5 6Z" fill="#bbb"/><path d="M3 18.5C7 22.5 10 14.5 14 16.5C17.5 18.5 19 22 23 20" fill="none" stroke="#cfe8df" stroke-width="1.3"/></svg>
<svg style="left:18px;top:369.5px;" width="24" height="24" viewBox="0 0 24 24"><path d="M3.5 1V22.5H8.5V8ZM3.5 22.5H23" fill="#e6e6e6" stroke="#e6e6e6" stroke-width="1"/><path d="M8.5 9.5A13 13 0 0 1 21.5 22.5H8.5Z" fill="#86cfb4"/><path d="M3.5 5H6M3.5 9H6M3.5 13H6M3.5 17H6M12 20V22.5M16 20V22.5M20 20V22.5" stroke="#333" stroke-width="1"/></svg>
<svg style="left:17px;top:409.5px;" width="26" height="26" viewBox="0 0 26 26"><path d="M7 10.5L16 7L23.5 9.5V20L14.5 24.5L7 21ZM7 10.5L14.5 13.5L23.5 9.5M14.5 13.5V24.5" fill="none" stroke="#ddd" stroke-width="1.2" stroke-linejoin="round"/><path d="M4.5 1V8M1 4.5H8" stroke="#8fe0c0" stroke-width="1.8"/></svg>
<svg style="left:42.5px;top:138px;" width="5" height="5" viewBox="0 0 5 5"><path d="M4.5 0.5V4.5H0.5Z" fill="#aaa"/></svg>
<svg style="left:42.5px;top:282.5px;" width="5" height="5" viewBox="0 0 5 5"><path d="M4.5 0.5V4.5H0.5Z" fill="#aaa"/></svg>
<svg style="left:42.5px;top:358px;" width="5" height="5" viewBox="0 0 5 5"><path d="M4.5 0.5V4.5H0.5Z" fill="#aaa"/></svg>
<svg style="left:42.5px;top:433px;" width="5" height="5" viewBox="0 0 5 5"><path d="M4.5 0.5V4.5H0.5Z" fill="#aaa"/></svg>
<svg style="left:1494px;top:110px;" width="90" height="90" viewBox="0 0 90 90"><path d="M40 42.5L39.5 16" stroke="#3b83d6" stroke-width="2.2"/><path d="M40 42.5L66 32.5" stroke="#7aa823" stroke-width="2.2"/><path d="M40 42.5L57 57" stroke="#e8364f" stroke-width="2.2"/><circle cx="22.5" cy="27.5" r="7.3" fill="rgba(150,40,60,.25)" stroke="#b5324a" stroke-width="1.3"/><circle cx="13" cy="52" r="7.8" fill="#5f7d22" stroke="#9bc530" stroke-width="1.5"/><circle cx="40" cy="68.5" r="7.3" fill="rgba(50,90,160,.25)" stroke="#3f74bd" stroke-width="1.3"/><circle cx="39.5" cy="15.5" r="8.3" fill="#2f83e3"/><circle cx="66.5" cy="32" r="8.3" fill="#7aa823"/><circle cx="57.5" cy="57" r="8.3" fill="#f53651"/><text x="39.5" y="19.7" font-size="11.5" font-family="Liberation Sans,sans-serif" text-anchor="middle" fill="#111">Z</text><text x="66.5" y="36.2" font-size="11.5" font-family="Liberation Sans,sans-serif" text-anchor="middle" fill="#111">Y</text><text x="57.5" y="61.2" font-size="11.5" font-family="Liberation Sans,sans-serif" text-anchor="middle" fill="#111">X</text></svg>
<div style="left:1550px;top:194.5px;width:24px;height:24px;background:rgba(42,42,42,.85);border-radius:12px"></div>
<div style="left:1550px;top:224.5px;width:24px;height:24px;background:rgba(42,42,42,.85);border-radius:12px"></div>
<div style="left:1550px;top:254.5px;width:24px;height:24px;background:rgba(42,42,42,.85);border-radius:12px"></div>
<div style="left:1550px;top:284.5px;width:24px;height:24px;background:rgba(42,42,42,.85);border-radius:12px"></div>
<svg style="left:1552px;top:196.5px;" width="20" height="20" viewBox="0 0 20 20"><circle cx="11.5" cy="8.5" r="5.3" fill="#e6e6e6"/><path d="M7.5 12.5L3 17" stroke="#e6e6e6" stroke-width="2.2" stroke-linecap="round"/><path d="M11.5 6V11M9 8.5H14" stroke="#2a2a2a" stroke-width="1.3"/></svg>
<svg style="left:1552px;top:226.5px;" width="20" height="20" viewBox="0 0 20 20"><path d="M5.5 10V5.5Q6.5 4.5 7.5 5.5V9V3.5Q8.5 2.5 9.5 3.5V9V3Q10.5 2 11.5 3V9.5V4.5Q12.5 3.5 13.5 4.5V12L15.5 9.5Q17 9 17 10.5L13.5 16.5Q12 18 9.5 18Q6 17.5 5.5 14Z" fill="#e6e6e6"/></svg>
<svg style="left:1552px;top:256.5px;" width="20" height="20" viewBox="0 0 20 20"><circle cx="6.5" cy="5.5" r="3" fill="none" stroke="#e6e6e6" stroke-width="1.3"/><circle cx="13" cy="5.5" r="3" fill="none" stroke="#e6e6e6" stroke-width="1.3"/><path d="M5.5 10.5H13.5V16H5.5ZM14.5 13L18 11V16Z" fill="none" stroke="#e6e6e6" stroke-width="1.3" stroke-linejoin="round"/><path d="M3 11V15" stroke="#e6e6e6" stroke-width="1.3"/></svg>
<svg style="left:1552px;top:286.5px;" width="20" height="20" viewBox="0 0 20 20"><path d="M5.5 3.5H14.5L17.5 16.5H2.5ZM8.5 3.5L7.5 16.5M11.5 3.5L12.5 16.5M4.6 7.5H15.4M3.6 11.8H16.4" fill="none" stroke="#e6e6e6" stroke-width="1.3" stroke-linejoin="round"/></svg>
<div style="left:1588px;top:50px;width:328px;height:322px;background:#282828;border-radius:5px"></div>
<div style="left:1598px;top:53px;width:30px;height:18px;background:#252525;border:1px solid #383838;border-radius:4px"></div>
<svg style="left:1601px;top:54px;" width="16" height="16" viewBox="0 0 16 16"><path d="M2 2.5H7V5H2Z" fill="#ddd"/><path d="M4 5V13H7M4 8.5H7" fill="none" stroke="#ddd" stroke-width="1.1"/><path d="M8 7H15V9.8H8ZM8 11.5H15V14.3H8Z" fill="#ddd"/></svg>
<svg style="left:1617px;top:58.5px;" width="10" height="8" viewBox="0 0 10 8"><path d="M1.5 2.3L5 5.8L8.5 2.3" fill="none" stroke="#ddd" stroke-width="1.3" stroke-linecap="round" stroke-linejoin="round"/></svg>
<div style="left:1635px;top:53px;width:30.5px;height:18px;background:#252525;border:1px solid #383838;border-radius:4px"></div>
<svg style="left:1638px;top:54px;" width="18" height="16" viewBox="0 0 18 16"><path d="M2.5 5V14H12" fill="none" stroke="#ddd" stroke-width="1.1"/><path d="M4.5 3.5V12H14" fill="none" stroke="#ddd" stroke-width="1.1"/><path d="M6.5 1.5H15.5V10.5H6.5Z" fill="#ddd"/><path d="M7.5 9.5L10.5 5.5L12.5 8L13.5 7L14.5 9.5Z" fill="#252525"/><circle cx="13.3" cy="3.8" r="1" fill="#252525"/></svg>
<svg style="left:1654.5px;top:58.5px;" width="10" height="8" viewBox="0 0 10 8"><path d="M1.5 2.3L5 5.8L8.5 2.3" fill="none" stroke="#ddd" stroke-width="1.3" stroke-linecap="round" stroke-linejoin="round"/></svg>
<div style="left:1684px;top:53px;width:117.5px;height:18px;background:#1d1d1d;border:1px solid #383838;border-radius:4px"></div>
<svg style="left:1688px;top:54px;" width="16" height="16" viewBox="0 0 16 16"><circle cx="9.5" cy="6.5" r="4.3" fill="none" stroke="#ddd" stroke-width="1.3"/><path d="M6.5 9.5L2 14" stroke="#ddd" stroke-width="1.4" stroke-linecap="round"/></svg>
<div class="t" style="left:1709px;top:55px;color:#6f6f6f">Search</div>
<div style="left:1853.5px;top:53px;width:30.5px;height:18px;background:#252525;border:1px solid #383838;border-radius:4px"></div>
<svg style="left:1856px;top:54px;" width="16" height="16" viewBox="0 0 16 16"><path d="M2 2.5H14L9.5 8V14L6.5 12.5V8Z" fill="none" stroke="#ddd" stroke-width="1.3" stroke-linejoin="round"/></svg>
<svg style="left:1873px;top:58.5px;" width="10" height="8" viewBox="0 0 10 8"><path d="M1.5 2.3L5 5.8L8.5 2.3" fill="none" stroke="#ddd" stroke-width="1.3" stroke-linecap="round" stroke-linejoin="round"/></svg>
<div style="left:1891px;top:53px;width:18.5px;height:18px;background:#4c4c4c;border-radius:4px"></div>
<svg style="left:1892px;top:54px;" width="16" height="16" viewBox="0 0 16 16"><path d="M2 4H9.5V6.5H2ZM3 7.5H11V14H3Z" fill="none" stroke="#ddd" stroke-width="1.1"/><path d="M5.5 9.5H8.5" stroke="#ddd" stroke-width="1.1"/><circle cx="12" cy="4" r="3.4" fill="#ddd"/><path d="M12 2V6M10 4H14" stroke="#4c4c4c" stroke-width="1.1"/></svg>
<svg style="left:1611px;top:80px;" width="16" height="16" viewBox="0 0 16 16"><path d="M1.5 1.5H14.5V5H1.5Z" fill="#e0e0e0"/><path d="M2.5 6H13.5V14.5H2.5Z" fill="#e0e0e0"/><path d="M6 8.3H10V9.8H6Z" fill="#282828"/></svg>
<div class="t" style="left:1633.5px;top:81px;color:#d8d8d8">Scene Collection</div>
<svg style="left:1614px;top:104.5px;" width="10" height="8" viewBox="0 0 10 8"><path d="M1.5 2.3L5 5.8L8.5 2.3" fill="none" stroke="#c8c8c8" stroke-width="1.3" stroke-linecap="round" stroke-linejoin="round"/></svg>
<div style="left:1629px;top:98px;width:20px;height:20px;background:#4a4a4a;border-radius:4px;border:1px solid #5a5a5a"></div>
<svg style="left:1631px;top:100px;" width="16" height="16" viewBox="0 0 16 16"><path d="M1.5 1.5H14.5V5H1.5Z" fill="#e0e0e0"/><path d="M2.5 6H13.5V14.5H2.5Z" fill="#e0e0e0"/><path d="M6 8.3H10V9.8H6Z" fill="#4a4a4a"/></svg>
<div class="t" style="left:1653px;top:101px;color:#fff">Collection</div>
<svg style="left:1852px;top:102px;" width="12" height="12" viewBox="0 0 12 12"><rect x=".5" y=".5" width="11" height="11" rx="1.5" fill="#e6e6e6"/><path d="M2.8 6.2L5 8.5L9.3 3.5" fill="none" stroke="#222" stroke-width="1.6"/></svg>
<svg style="left:1870.5px;top:102px;" width="16" height="12" viewBox="0 0 16 12"><path d="M1 6C4 1 12 1 15 6C12 11 4 11 1 6Z" fill="#e6e6e6"/><circle cx="8" cy="6" r="2.6" fill="#222"/><circle cx="8" cy="6" r="1.2" fill="#e6e6e6"/></svg>
<svg style="left:1891px;top:101.5px;" width="15" height="13" viewBox="0 0 15 13"><path d="M1 3.5H4L5 1.5H10L11 3.5H14V12.5H1Z" fill="#e6e6e6"/><circle cx="7.5" cy="7.8" r="3.2" fill="#282828"/><circle cx="7.5" cy="7.8" r="2" fill="none" stroke="#e6e6e6" stroke-width="1.1"/></svg>
<div style="left:1592px;top:118px;width:324px;height:18px;background:#2e4f85;border:1px solid #4772b3;border-radius:3px"></div>
<div style="left:1617px;top:120px;width:1px;height:34px;background:#5a5a5a"></div>
<svg style="left:1635px;top:122.5px;" width="8" height="10" viewBox="0 0 8 10"><path d="M2.3 1.5L5.8 5L2.3 8.5" fill="none" stroke="#dcdcdc" stroke-width="1.3" stroke-linecap="round" stroke-linejoin="round"/></svg>
<div style="left:1649.5px;top:118.5px;width:19px;height:17px;background:rgba(150,150,150,.45);border-radius:4px"></div>
<svg style="left:1652px;top:121px;" width="14" height="14" viewBox="0 0 14 14"><path d="M2 2.2H12L7 12.3Z" fill="none" stroke="#e08a3c" stroke-width="2.4" stroke-linejoin="round"/></svg>
<div class="t" style="left:1673.5px;top:121px;color:#f2a548">Grid</div>
<svg style="left:1717px;top:120px;" width="16" height="16" viewBox="0 0 16 16"><path d="M2.5 12L8 6.5A3.8 3.8 0 0 1 12.5 1.8L10.3 4L12 5.7L14.2 3.5A3.8 3.8 0 0 1 9.5 8L4 13.5A1.06 1.06 0 0 1 2.5 12Z" fill="none" stroke="#5f8ee0" stroke-width="1.3" stroke-linejoin="round"/></svg>
<svg style="left:1737px;top:119.5px;" width="16" height="16" viewBox="0 0 16 16"><path d="M3 3H13L8 13.5Z" fill="none" stroke="#1fd4a5" stroke-width="1.2"/><rect x="1.3" y="1.3" width="3.4" height="3.4" fill="#282828" stroke="#1fd4a5" stroke-width="1.1"/><rect x="11.3" y="1.3" width="3.4" height="3.4" fill="#282828" stroke="#1fd4a5" stroke-width="1.1"/><rect x="6.3" y="11.6" width="3.4" height="3.4" fill="#282828" stroke="#1fd4a5" stroke-width="1.1"/></svg>
<svg style="left:1870.5px;top:121.5px;" width="16" height="12" viewBox="0 0 16 12"><path d="M1 6C4 1 12 1 15 6C12 11 4 11 1 6Z" fill="#e6e6e6"/><circle cx="8" cy="6" r="2.6" fill="#222"/><circle cx="8" cy="6" r="1.2" fill="#e6e6e6"/></svg>
<svg style="left:1891px;top:121px;" width="15" height="13" viewBox="0 0 15 13"><path d="M1 3.5H4L5 1.5H10L11 3.5H14V12.5H1Z" fill="#e6e6e6"/><circle cx="7.5" cy="7.8" r="3.2" fill="#2e4f85"/><circle cx="7.5" cy="7.8" r="2" fill="none" stroke="#e6e6e6" stroke-width="1.1"/></svg>
<svg style="left:1635px;top:142.5px;" width="8" height="10" viewBox="0 0 8 10"><path d="M2.3 1.5L5.8 5L2.3 8.5" fill="none" stroke="#c8c8c8" stroke-width="1.3" stroke-linecap="round" stroke-linejoin="round"/></svg>
<svg style="left:1652px;top:141px;" width="14" height="14" viewBox="0 0 14 14"><path d="M2 2.2H12L7 12.3Z" fill="none" stroke="#e08a3c" stroke-width="2.4" stroke-linejoin="round"/></svg>
<div class="t" style="left:1673.5px;top:141px;color:#d8d8d8">Suzanne</div>
<svg style="left:1741px;top:139.5px;" width="16" height="16" viewBox="0 0 16 16"><path d="M3 3H13L8 13.5Z" fill="none" stroke="#1fd4a5" stroke-width="1.2"/><rect x="1.3" y="1.3" width="3.4" height="3.4" fill="#282828" stroke="#1fd4a5" stroke-width="1.1"/><rect x="11.3" y="1.3" width="3.4" height="3.4" fill="#282828" stroke="#1fd4a5" stroke-width="1.1"/><rect x="6.3" y="11.6" width="3.4" height="3.4" fill="#282828" stroke="#1fd4a5" stroke-width="1.1"/></svg>
<svg style="left:1870.5px;top:141.5px;" width="16" height="12" viewBox="0 0 16 12"><path d="M1 6C4 1 12 1 15 6C12 11 4 11 1 6Z" fill="#e6e6e6"/><circle cx="8" cy="6" r="2.6" fill="#222"/><circle cx="8" cy="6" r="1.2" fill="#e6e6e6"/></svg>
<svg style="left:1891px;top:141px;" width="15" height="13" viewBox="0 0 15 13"><path d="M1 3.5H4L5 1.5H10L11 3.5H14V12.5H1Z" fill="#e6e6e6"/><circle cx="7.5" cy="7.8" r="3.2" fill="#282828"/><circle cx="7.5" cy="7.8" r="2" fill="none" stroke="#e6e6e6" stroke-width="1.1"/></svg>
<div style="left:1588px;top:376px;width:328px;height:664px;background:#303030;border-radius:5px 5px 0 0"></div>
<div style="left:1588px;top:376px;width:328px;height:26px;background:#2b2b2b;border-radius:5px 5px 0 0"></div>
<div style="left:1588px;top:402px;width:29px;height:638px;background:#191919"></div>
<div style="left:1598px;top:379px;width:30px;height:18.5px;background:#252525;border:1px solid #383838;border-radius:4px"></div>
<svg style="left:1601px;top:380px;" width="16" height="16" viewBox="0 0 16 16"><rect x="1" y="1.5" width="14" height="6" rx="3" fill="#e6e6e6"/><rect x="1" y="9" width="14" height="6" rx="3" fill="#e6e6e6"/><circle cx="11.5" cy="4.5" r="1.9" fill="#2b2b2b"/><circle cx="4.5" cy="12" r="1.9" fill="#2b2b2b"/></svg>
<svg style="left:1617px;top:384.5px;" width="10" height="8" viewBox="0 0 10 8"><path d="M1.5 2.3L5 5.8L8.5 2.3" fill="none" stroke="#ddd" stroke-width="1.3" stroke-linecap="round" stroke-linejoin="round"/></svg>
<div style="left:1696px;top:379px;width:117px;height:18.5px;background:#1d1d1d;border:1px solid #383838;border-radius:4px"></div>
<svg style="left:1700px;top:380px;" width="16" height="16" viewBox="0 0 16 16"><circle cx="9.5" cy="6.5" r="4.3" fill="none" stroke="#ddd" stroke-width="1.3"/><path d="M6.5 9.5L2 14" stroke="#ddd" stroke-width="1.4" stroke-linecap="round"/></svg>
<div class="t" style="left:1721px;top:381px;color:#6f6f6f">Search</div>
<div style="left:1891px;top:379px;width:18.5px;height:18.5px;background:#252525;border:1px solid #383838;border-radius:4px"></div>
<svg style="left:1895px;top:384.5px;" width="10" height="8" viewBox="0 0 10 8"><path d="M1.5 2.3L5 5.8L8.5 2.3" fill="none" stroke="#ddd" stroke-width="1.3" stroke-linecap="round" stroke-linejoin="round"/></svg>
<div style="left:1588px;top:658px;width:29px;height:28px;background:#303030;border-radius:4px 0 0 4px"></div>
<svg style="left:1596px;top:415px;" width="16" height="16" viewBox="0 0 16 16"><path d="M3.5 2V8.5M2 8.5H5V13Q3.5 14.5 2 13Z" fill="#ddd" stroke="#ddd" stroke-width="1.2"/><path d="M11.5 14V7.5M9 2V5Q9 7.5 11.5 7.5Q14 7.5 14 5V2" fill="none" stroke="#ddd" stroke-width="1.8"/></svg>
<svg style="left:1596px;top:451px;" width="16" height="16" viewBox="0 0 16 16"><path d="M2 5H14V14H2Z" fill="none" stroke="#ddd" stroke-width="1.3"/><path d="M4 5V2.5H8V5M4.5 8H8.5V11H4.5Z" fill="none" stroke="#ddd" stroke-width="1.2"/><circle cx="11.5" cy="8" r=".9" fill="#ddd"/><circle cx="11.5" cy="11" r=".9" fill="#ddd"/><path d="M13 2L15 1" stroke="#ddd"/></svg>
<svg style="left:1596px;top:480.5px;" width="16" height="16" viewBox="0 0 16 16"><path d="M1.5 2H14.5V6H1.5Z" fill="#ddd"/><path d="M3.5 7.5H12.5V14.5H3.5Z" fill="none" stroke="#ddd" stroke-width="1.3"/><path d="M5 13L7.5 9.5L9 11.5L10 10.5L11.5 13Z" fill="#ddd"/></svg>
<svg style="left:1596px;top:507.5px;" width="16" height="16" viewBox="0 0 16 16"><path d="M1.5 5V14.5H11" fill="none" stroke="#ddd" stroke-width="1.1"/><path d="M3.5 3.5V12.5H13" fill="none" stroke="#ddd" stroke-width="1.1"/><path d="M5.5 1.5H15V10.5H5.5Z" fill="none" stroke="#ddd" stroke-width="1.1"/><path d="M6.5 9.5L9.5 5.5L11.5 8L12.5 7L14 9.5Z" fill="#ddd"/><circle cx="12.5" cy="4" r="1" fill="#ddd"/></svg>
<svg style="left:1596px;top:535.5px;" width="16" height="16" viewBox="0 0 16 16"><path d="M1.5 12L6 2L8 6.5L6.5 13Z" fill="#ddd"/><circle cx="11.5" cy="3" r="1.8" fill="#ddd"/><circle cx="10" cy="11" r="3.3" fill="none" stroke="#ddd" stroke-width="1.2"/><circle cx="9.3" cy="10.3" r="1" fill="#ddd"/></svg>
<svg style="left:1596px;top:563.5px;" width="16" height="16" viewBox="0 0 16 16"><circle cx="8" cy="8.5" r="5.7" fill="none" stroke="#d65a6c" stroke-width="1.3"/><path d="M4 6Q6 4 8 6Q9 8 7 9.5Q6 12 8.5 13M10 4.5Q12.5 6 11 9" fill="none" stroke="#d65a6c" stroke-width="1.3"/><path d="M2 13L14 3" stroke="#d65a6c" stroke-width="1"/></svg>
<svg style="left:1596px;top:599.5px;" width="16" height="16" viewBox="0 0 16 16"><path d="M1.5 2H14.5V5.5H1.5ZM2.5 6.5H13.5V14.5H2.5Z" fill="none" stroke="#e6e6e6" stroke-width="1.3"/><path d="M6 9.5H10" stroke="#e6e6e6" stroke-width="1.3"/></svg>
<svg style="left:1596px;top:636px;" width="16" height="16" viewBox="0 0 16 16"><path d="M1.5 5V1.5H5M11 1.5H14.5V5M14.5 11V14.5H11M5 14.5H1.5V11" fill="none" stroke="#e08a3c" stroke-width="1.3"/><rect x="4.2" y="4.2" width="7.6" height="7.6" fill="#e08a3c"/></svg>
<svg style="left:1596px;top:692px;" width="16" height="16" viewBox="0 0 16 16"><path d="M3 3L12.5 4.5M3 3L4 13M3 3L13 12" fill="none" stroke="#5f8ee0" stroke-width="1.1"/><circle cx="3" cy="3" r="1.8" fill="#5f8ee0"/><circle cx="13" cy="4.5" r="1.4" fill="#5f8ee0"/><circle cx="4" cy="13.5" r="1.4" fill="#5f8ee0"/><circle cx="13.5" cy="12.5" r="1.4" fill="#5f8ee0"/></svg>
<svg style="left:1596px;top:720px;" width="16" height="16" viewBox="0 0 16 16"><circle cx="8" cy="8" r="5.5" fill="none" stroke="#5f8ee0" stroke-width="1.3" stroke-dasharray="27 8"/><circle cx="8" cy="8" r="2.3" fill="#5f8ee0"/><circle cx="13.5" cy="3.5" r="1.3" fill="#5f8ee0"/></svg>
<svg style="left:1596px;top:748px;" width="16" height="16" viewBox="0 0 16 16"><path d="M3 11A4 4 0 0 1 4.5 5L11 2.5A3 3 0 0 1 14 7L9.5 13A4 4 0 0 1 3 11Z" fill="none" stroke="#5f8ee0" stroke-width="1.3"/><circle cx="6.5" cy="9.5" r="2.2" fill="none" stroke="#5f8ee0" stroke-width="1.3"/><circle cx="11.5" cy="5" r=".9" fill="#5f8ee0"/></svg>
<svg style="left:1596px;top:664px;" width="16" height="16" viewBox="0 0 16 16"><path d="M2.5 12L8 6.5A3.8 3.8 0 0 1 12.5 1.8L10.3 4L12 5.7L14.2 3.5A3.8 3.8 0 0 1 9.5 8L4 13.5A1.06 1.06 0 0 1 2.5 12Z" fill="#5f8ee0" stroke="#5f8ee0" stroke-width="1" stroke-linejoin="round"/></svg>
<svg style="left:1596px;top:775.5px;" width="16" height="16" viewBox="0 0 16 16"><path d="M3 3H13L8 13.5Z" fill="none" stroke="#1fd4a5" stroke-width="1.2"/><rect x="1.3" y="1.3" width="3.4" height="3.4" fill="#191919" stroke="#1fd4a5" stroke-width="1.1"/><rect x="11.3" y="1.3" width="3.4" height="3.4" fill="#191919" stroke="#1fd4a5" stroke-width="1.1"/><rect x="6.3" y="11.6" width="3.4" height="3.4" fill="#191919" stroke="#1fd4a5" stroke-width="1.1"/></svg>
<svg style="left:1596px;top:804.5px;" width="16" height="16" viewBox="0 0 16 16"><circle cx="8" cy="8" r="6.3" fill="#d65a6c"/><path d="M8 8V1.7A6.3 6.3 0 0 1 14.3 8ZM8 8V14.3A6.3 6.3 0 0 1 1.7 8Z" fill="#191919" opacity=".75"/></svg>
<svg style="left:1627px;top:412px;" width="16" height="16" viewBox="0 0 16 16"><path d="M1.5 5V1.5H5M11 1.5H14.5V5M14.5 11V14.5H11M5 14.5H1.5V11" fill="none" stroke="#ddd" stroke-width="1.2"/><rect x="4.2" y="4.2" width="7.6" height="7.6" fill="#e6e6e6"/></svg>
<div class="t" style="left:1651.5px;top:413px;color:#e0e0e0">Grid</div>
<svg style="left:1688.5px;top:415px;" width="8" height="10" viewBox="0 0 8 10"><path d="M2.3 1.5L5.8 5L2.3 8.5" fill="none" stroke="#c0c0c0" stroke-width="1.3" stroke-linecap="round" stroke-linejoin="round"/></svg>
<svg style="left:1704px;top:412px;" width="16" height="16" viewBox="0 0 16 16"><circle cx="3" cy="3" r="1.7" fill="#ccc"/><circle cx="8" cy="4" r="1.9" fill="#ccc"/><circle cx="4.5" cy="8" r="1.9" fill="#ccc"/><circle cx="11" cy="11" r="3.3" fill="#e6e6e6"/></svg>
<div class="t" style="left:1728.5px;top:413px;color:#e6e6e6">Scatter on Surface</div>
<svg style="left:1892px;top:412px;" width="16" height="16" viewBox="0 0 16 16"><path d="M9.5 1.5L14.5 6.5L12.5 7L10.5 9.5L10 12.5L3.5 6L6.5 5.5L9 3.5ZM6.5 9.5L2 14" fill="none" stroke="#888" stroke-width="1.1" stroke-linejoin="round"/></svg>
<div style="left:1625.5px;top:447px;width:284px;height:18.5px;background:#545454;border-radius:4px"></div>
<svg style="left:1631.5px;top:450px;" width="12" height="12" viewBox="0 0 12 12"><path d="M6 1V11M1 6H11" stroke="#e6e6e6" stroke-width="1.2"/></svg>
<div class="t" style="left:1676.5px;top:449px;width:200px;text-align:center;color:#e6e6e6">Add Modifier</div>
<div style="left:1625.5px;top:476px;width:284px;height:389.5px;background:#383838;border:1px solid #4772b3;border-radius:5px"></div>
<div style="left:1626.5px;top:477px;width:282px;height:24px;background:#3a3a3a;border-radius:4px 4px 0 0"></div>
<svg style="left:1633px;top:485.5px;" width="10" height="8" viewBox="0 0 10 8"><path d="M1.5 2.3L5 5.8L8.5 2.3" fill="none" stroke="#c8c8c8" stroke-width="1.3" stroke-linecap="round" stroke-linejoin="round"/></svg>
<svg style="left:1647px;top:481px;" width="16" height="16" viewBox="0 0 16 16"><circle cx="3" cy="3" r="1.7" fill="#ccc"/><circle cx="8" cy="4" r="1.9" fill="#ccc"/><circle cx="4.5" cy="8" r="1.9" fill="#ccc"/><circle cx="11" cy="11" r="3.3" fill="#e6e6e6"/></svg>
<div style="left:1674px;top:480px;width:165.5px;height:18px;background:#1d1d1d;border-radius:4px"></div>
<div class="t" style="left:1681px;top:482px;color:#e6e6e6">Scatter on ...</div>
<div style="left:1759px;top:480px;width:20px;height:18px;background:#545454"></div>
<div style="left:1779.5px;top:480px;width:60px;height:18px;background:#4772b3"></div>
<div style="left:1799.3px;top:480px;width:1px;height:18px;background:#3a5f98"></div>
<div style="left:1819.4px;top:480px;width:1px;height:18px;background:#3a5f98"></div>
<svg style="left:1761px;top:481px;" width="16" height="16" viewBox="0 0 16 16"><path d="M3 3H13L8 13.5Z" fill="none" stroke="#e6e6e6" stroke-width="1.2"/><rect x="1.3" y="1.3" width="3.4" height="3.4" fill="#545454" stroke="#e6e6e6" stroke-width="1.1"/><rect x="11.3" y="1.3" width="3.4" height="3.4" fill="#545454" stroke="#e6e6e6" stroke-width="1.1"/><rect x="6.3" y="11.6" width="3.4" height="3.4" fill="#545454" stroke="#e6e6e6" stroke-width="1.1"/></svg>
<svg style="left:1781.5px;top:481px;" width="16" height="16" viewBox="0 0 16 16"><path d="M3 3.5H12.5M3 3.5V13M3 13H12.5M12.5 6V13" fill="none" stroke="#fff" stroke-width="1.1"/><rect x="1.3" y="1.8" width="3.2" height="3.2" fill="#4772b3" stroke="#fff"/><rect x="1.3" y="11.3" width="3.2" height="3.2" fill="#4772b3" stroke="#fff"/><rect x="10.8" y="11.3" width="3.2" height="3.2" fill="#4772b3" stroke="#fff"/><rect x="10.5" y="1" width="4.5" height="4.5" fill="#fff"/></svg>
<svg style="left:1801.5px;top:481px;" width="16" height="16" viewBox="0 0 16 16"><rect x="1.5" y="2.5" width="13" height="8.5" rx="1" fill="none" stroke="#fff" stroke-width="1.3"/><path d="M8 11V13.5M4.5 14H11.5" stroke="#fff" stroke-width="1.3"/></svg>
<svg style="left:1821.5px;top:481.5px;" width="16" height="15" viewBox="0 0 16 15"><path d="M1 4H4L5 2H11L12 4H15V13.5H1Z" fill="#fff"/><circle cx="8" cy="8.5" r="3.3" fill="#4772b3"/><circle cx="8" cy="8.5" r="2" fill="none" stroke="#fff" stroke-width="1.1"/></svg>
<div style="left:1840px;top:480px;width:19px;height:18px;background:#1d1d1d;border-radius:0 4px 4px 0"></div>
<svg style="left:1844.5px;top:485.5px;" width="10" height="8" viewBox="0 0 10 8"><path d="M1.5 2.3L5 5.8L8.5 2.3" fill="none" stroke="#ddd" stroke-width="1.3" stroke-linecap="round" stroke-linejoin="round"/></svg>
<svg style="left:1864px;top:483.5px;" width="12" height="12" viewBox="0 0 12 12"><path d="M2 2L10 10M10 2L2 10" stroke="#e6e6e6" stroke-width="1.3"/></svg>
<svg style="left:1888px;top:486px;" width="14" height="6" viewBox="0 0 14 6"><g fill="#777"><circle cx="1.5" cy="1.5" r=".8"/><circle cx="5" cy="1.5" r=".8"/><circle cx="8.5" cy="1.5" r=".8"/><circle cx="12" cy="1.5" r=".8"/><circle cx="1.5" cy="4.5" r=".8"/><circle cx="5" cy="4.5" r=".8"/><circle cx="8.5" cy="4.5" r=".8"/><circle cx="12" cy="4.5" r=".8"/></g></svg>
<div class="t" style="right:192px;top:512px;color:#e0e0e0;font-size:12.1px">Density Method</div>
<div style="left:1738px;top:510px;width:60.5px;height:18px;background:#4772b3;border-radius:4px 0 0 4px"></div>
<div style="left:1799px;top:510px;width:62px;height:18px;background:#545454;border-radius:0 4px 4px 0"></div>
<div class="t" style="left:1738px;top:512px;width:60px;text-align:center;color:#fff">Density</div>
<div class="t" style="left:1798px;top:512px;width:64px;text-align:center;color:#e6e6e6">Amount</div>
<div style="left:1890px;top:517px;width:4px;height:4px;background:#e6e6e6;border-radius:2px"></div>
<div class="t" style="right:192px;top:537px;color:#e0e0e0;font-size:12.1px">Distribution Me...</div>
<div style="left:1738px;top:535px;width:60.5px;height:18px;background:#4772b3;border-radius:4px 0 0 4px"></div>
<div style="left:1799px;top:535px;width:62px;height:18px;background:#545454;border-radius:0 4px 4px 0"></div>
<div class="t" style="left:1738px;top:537px;width:60px;text-align:center;color:#fff">Random</div>
<div class="t" style="left:1798px;top:537px;width:64px;text-align:center;color:#e6e6e6">Poisson ...</div>
<div style="left:1890px;top:542px;width:4px;height:4px;background:#e6e6e6;border-radius:2px"></div>
<div class="t" style="right:192px;top:562px;color:#e0e0e0;font-size:12.1px">Density</div>
<div style="left:1738px;top:560px;width:123px;height:18px;background:#545454;border-radius:4px 0 0 4px"></div>
<div class="t" style="left:1769px;top:562px;width:60px;text-align:center;color:#e6e6e6">1.000</div>
<div style="left:1862px;top:560px;width:19px;height:18px;background:#545454;border-radius:0 4px 4px 0"></div>
<svg style="left:1863.5px;top:561.5px;" width="16" height="15" viewBox="0 0 16 15"><path d="M1 1H15V14H1Z" fill="none" stroke="#e6e6e6" stroke-width="1" stroke-dasharray="2.5 1.5"/><path d="M5.5 1V14M1 6.5H15" stroke="#fff" stroke-width="2.4"/><path d="M1 1H5.5V6.5H1Z" fill="#fff"/></svg>
<div style="left:1890px;top:567px;width:4px;height:4px;background:#e6e6e6;border-radius:2px"></div>
<div class="t" style="right:192px;top:587px;color:#e0e0e0;font-size:12.1px">Distribution Mask</div>
<div style="left:1738px;top:585px;width:123px;height:18px;background:#4772b3;border-radius:4px 0 0 4px"></div>
<div class="t" style="left:1769px;top:587px;width:60px;text-align:center;color:#fff">1.000</div>
<div style="left:1862px;top:585px;width:19px;height:18px;background:#545454;border-radius:0 4px 4px 0"></div>
<svg style="left:1863.5px;top:586.5px;" width="16" height="15" viewBox="0 0 16 15"><path d="M1 1H15V14H1Z" fill="none" stroke="#e6e6e6" stroke-width="1" stroke-dasharray="2.5 1.5"/><path d="M5.5 1V14M1 6.5H15" stroke="#fff" stroke-width="2.4"/><path d="M1 1H5.5V6.5H1Z" fill="#fff"/></svg>
<div style="left:1890px;top:592px;width:4px;height:4px;background:#e6e6e6;border-radius:2px"></div>
<div style="left:1738px;top:613px;width:12.5px;height:12.5px;background:#4772b3;border-radius:3px"></div>
<svg style="left:1738px;top:613px;" width="12.5" height="12.5" viewBox="0 0 12.5 12.5"><path d="M2.8 6.5L5.2 9L10 3.5" fill="none" stroke="#fff" stroke-width="1.6"/></svg>
<div class="t" style="left:1754.5px;top:612px;color:#e6e6e6">Keep Surface</div>
<div style="left:1890px;top:617px;width:4px;height:4px;background:#e6e6e6;border-radius:2px"></div>
<div style="left:1738px;top:638px;width:12.5px;height:12.5px;background:#545454;border-radius:3px"></div>
<div class="t" style="left:1754.5px;top:637px;color:#e0e0e0">Scatter on Instan...</div>
<div style="left:1890px;top:642px;width:4px;height:4px;background:#e6e6e6;border-radius:2px"></div>
<div class="t" style="right:192px;top:662px;color:#e0e0e0;font-size:12.1px">Seed</div>
<div style="left:1738px;top:660px;width:123px;height:18px;background:#545454;border-radius:4px"></div>
<div class="t" style="left:1769px;top:662px;width:60px;text-align:center;color:#e6e6e6">0</div>
<div style="left:1890px;top:667px;width:4px;height:4px;background:#e6e6e6;border-radius:2px"></div>
<div style="left:1626.5px;top:706px;width:282px;height:106px;background:#343434"></div>
<svg style="left:1638px;top:690.5px;" width="10" height="8" viewBox="0 0 10 8"><path d="M1.5 2.3L5 5.8L8.5 2.3" fill="none" stroke="#c8c8c8" stroke-width="1.3" stroke-linecap="round" stroke-linejoin="round"/></svg>
<div class="t" style="left:1654px;top:687px;color:#e6e6e6">Instancing</div>
<div class="t" style="right:192px;top:716px;color:#e0e0e0;font-size:12.1px">Instance Type</div>
<div style="left:1738px;top:714px;width:60.5px;height:18px;background:#4772b3;border-radius:4px 0 0 4px"></div>
<div style="left:1799px;top:714px;width:62px;height:18px;background:#545454;border-radius:0 4px 4px 0"></div>
<div class="t" style="left:1738px;top:716px;width:60px;text-align:center;color:#fff">Object</div>
<div class="t" style="left:1798px;top:716px;width:64px;text-align:center;color:#e6e6e6">Collection</div>
<div style="left:1890px;top:721px;width:4px;height:4px;background:#e6e6e6;border-radius:2px"></div>
<div class="t" style="right:192px;top:741px;color:#e0e0e0;font-size:12.1px">Object</div>
<div style="left:1738px;top:739px;width:123px;height:18px;background:#1d1d1d;border-radius:4px"></div>
<svg style="left:1741.5px;top:741px;" width="14" height="14" viewBox="0 0 14 14"><path d="M1 4V1H4M10 1H13V4M13 10V13H10M4 13H1V10" fill="none" stroke="#ddd" stroke-width="1.1"/><rect x="3.5" y="3.5" width="7" height="7" fill="#e6e6e6"/></svg>
<div class="t" style="left:1763px;top:741px;color:#6a6a6a">Object</div>
<svg style="left:1843px;top:740.5px;" width="15" height="15" viewBox="0 0 15 15"><path d="M2 13L2.5 10.5L8 5L10 7L4.5 12.5Z" fill="#ddd"/><path d="M8 3.5L11.5 7M9.5 5.5L11.5 2.5Q13.5 1.5 13 4L10.5 6" fill="#ddd" stroke="#ddd" stroke-width="1.3"/></svg>
<div class="t" style="right:192px;top:766px;color:#e0e0e0;font-size:12.1px">Viewport Visibil...</div>
<div style="left:1738px;top:764px;width:123px;height:18px;background:#4772b3;border-radius:4px"></div>
<div class="t" style="left:1769px;top:766px;width:60px;text-align:center;color:#fff">1.000</div>
<div style="left:1890px;top:771px;width:4px;height:4px;background:#e6e6e6;border-radius:2px"></div>
<div style="left:1738px;top:792px;width:12.5px;height:12.5px;background:#545454;border-radius:3px"></div>
<div class="t" style="left:1754.5px;top:791px;color:#e0e0e0">Realize Instances</div>
<div style="left:1890px;top:796px;width:4px;height:4px;background:#e6e6e6;border-radius:2px"></div>
<svg style="left:1639px;top:818px;" width="8" height="10" viewBox="0 0 8 10"><path d="M2.3 1.5L5.8 5L2.3 8.5" fill="none" stroke="#c8c8c8" stroke-width="1.3" stroke-linecap="round" stroke-linejoin="round"/></svg>
<div class="t" style="left:1654px;top:816px;color:#e6e6e6">Transform</div>
<div style="left:1626.5px;top:840px;width:282px;height:24.5px;background:#343434;border-radius:0 0 4px 4px"></div>
<svg style="left:1639px;top:847px;" width="8" height="10" viewBox="0 0 8 10"><path d="M2.3 1.5L5.8 5L2.3 8.5" fill="none" stroke="#c8c8c8" stroke-width="1.3" stroke-linecap="round" stroke-linejoin="round"/></svg>
<div style="left:1654px;top:846px;width:12.5px;height:12.5px;background:#545454;border-radius:3px"></div>
<div class="t" style="left:1670px;top:845px;color:#e6e6e6">Masking</div>
<svg style="left:1787px;top:553px;" width="16" height="26" viewBox="0 0 16 26"><path d="M1.5 1.5V19.5L6 15.5L9 22.5L12 21L9 14.5H14.5Z" fill="#111" stroke="#fff" stroke-width="1.3" stroke-linejoin="round"/></svg>
<div style="left:2px;top:982px;width:1583px;height:75px;background:#151515;border-radius:5px"></div>
<div style="left:2px;top:982px;width:1583px;height:26.5px;background:#2a2a2a;border-radius:5px 5px 0 0"></div>
<div style="left:61.183px;top:1031px;width:1464.87px;height:9.5px;background:#2d2d2d"></div>
<div style="left:61.183px;top:1040.5px;width:1464.87px;height:16px;background:#262626"></div>
<div style="left:2px;top:1031px;width:59.183px;height:26px;background:#222"></div>
<div style="left:1526.05px;top:1031px;width:57.95px;height:26px;background:#222"></div>
<div style="left:60.683px;top:1031px;width:1.2px;height:9.5px;background:#0c0c0c"></div>
<div style="left:1525.55px;top:1031px;width:1.2px;height:9.5px;background:#0c0c0c"></div>
<svg style="left:2px;top:1031px;" width="1582" height="26" viewBox="0 0 1582 26"><path d="M18 0V26" stroke="#242424" stroke-width="1"/><path d="M53.3 0V26" stroke="#1a1a1a" stroke-width="1"/><path d="M88.6 0V26" stroke="#242424" stroke-width="1"/><path d="M123.9 0V26" stroke="#1a1a1a" stroke-width="1"/><path d="M159.2 0V26" stroke="#242424" stroke-width="1"/><path d="M194.5 0V26" stroke="#1a1a1a" stroke-width="1"/><path d="M229.8 0V26" stroke="#242424" stroke-width="1"/><path d="M265.1 0V26" stroke="#1a1a1a" stroke-width="1"/><path d="M300.4 0V26" stroke="#242424" stroke-width="1"/><path d="M335.7 0V26" stroke="#1a1a1a" stroke-width="1"/><path d="M371 0V26" stroke="#242424" stroke-width="1"/><path d="M406.3 0V26" stroke="#1a1a1a" stroke-width="1"/><path d="M441.6 0V26" stroke="#242424" stroke-width="1"/><path d="M476.9 0V26" stroke="#1a1a1a" stroke-width="1"/><path d="M512.2 0V26" stroke="#242424" stroke-width="1"/><path d="M547.5 0V26" stroke="#1a1a1a" stroke-width="1"/><path d="M582.8 0V26" stroke="#242424" stroke-width="1"/><path d="M618.1 0V26" stroke="#1a1a1a" stroke-width="1"/><path d="M653.4 0V26" stroke="#242424" stroke-width="1"/><path d="M688.7 0V26" stroke="#1a1a1a" stroke-width="1"/><path d="M724 0V26" stroke="#242424" stroke-width="1"/><path d="M759.3 0V26" stroke="#1a1a1a" stroke-width="1"/><path d="M794.6 0V26" stroke="#242424" stroke-width="1"/><path d="M829.9 0V26" stroke="#1a1a1a" stroke-width="1"/><path d="M865.2 0V26" stroke="#242424" stroke-width="1"/><path d="M900.5 0V26" stroke="#1a1a1a" stroke-width="1"/><path d="M935.8 0V26" stroke="#242424" stroke-width="1"/><path d="M971 0V26" stroke="#1a1a1a" stroke-width="1"/><path d="M1006.3 0V26" stroke="#242424" stroke-width="1"/><path d="M1041.6 0V26" stroke="#1a1a1a" stroke-width="1"/><path d="M1076.9 0V26" stroke="#242424" stroke-width="1"/><path d="M1112.2 0V26" stroke="#1a1a1a" stroke-width="1"/><path d="M1147.5 0V26" stroke="#242424" stroke-width="1"/><path d="M1182.8 0V26" stroke="#1a1a1a" stroke-width="1"/><path d="M1218.1 0V26" stroke="#242424" stroke-width="1"/><path d="M1253.4 0V26" stroke="#1a1a1a" stroke-width="1"/><path d="M1288.7 0V26" stroke="#242424" stroke-width="1"/><path d="M1324 0V26" stroke="#1a1a1a" stroke-width="1"/><path d="M1359.3 0V26" stroke="#242424" stroke-width="1"/><path d="M1394.6 0V26" stroke="#1a1a1a" stroke-width="1"/><path d="M1429.9 0V26" stroke="#242424" stroke-width="1"/><path d="M1465.2 0V26" stroke="#1a1a1a" stroke-width="1"/><path d="M1500.5 0V26" stroke="#242424" stroke-width="1"/><path d="M1535.8 0V26" stroke="#1a1a1a" stroke-width="1"/><path d="M1571.1 0V26" stroke="#242424" stroke-width="1"/></svg>
<div class="t" style="left:35.3px;top:1013px;width:40px;text-align:center;color:#c4c4c4;font-size:12px">0</div>
<div class="t" style="left:176.492px;top:1013px;width:40px;text-align:center;color:#c4c4c4;font-size:12px">24</div>
<div class="t" style="left:247.088px;top:1013px;width:40px;text-align:center;color:#c4c4c4;font-size:12px">36</div>
<div class="t" style="left:317.684px;top:1013px;width:40px;text-align:center;color:#c4c4c4;font-size:12px">48</div>
<div class="t" style="left:388.28px;top:1013px;width:40px;text-align:center;color:#c4c4c4;font-size:12px">60</div>
<div class="t" style="left:458.876px;top:1013px;width:40px;text-align:center;color:#c4c4c4;font-size:12px">72</div>
<div class="t" style="left:529.472px;top:1013px;width:40px;text-align:center;color:#c4c4c4;font-size:12px">84</div>
<div class="t" style="left:600.068px;top:1013px;width:40px;text-align:center;color:#c4c4c4;font-size:12px">96</div>
<div class="t" style="left:670.664px;top:1013px;width:40px;text-align:center;color:#c4c4c4;font-size:12px">108</div>
<div class="t" style="left:741.26px;top:1013px;width:40px;text-align:center;color:#c4c4c4;font-size:12px">120</div>
<div class="t" style="left:811.856px;top:1013px;width:40px;text-align:center;color:#c4c4c4;font-size:12px">132</div>
<div class="t" style="left:882.452px;top:1013px;width:40px;text-align:center;color:#c4c4c4;font-size:12px">144</div>
<div class="t" style="left:953.048px;top:1013px;width:40px;text-align:center;color:#c4c4c4;font-size:12px">156</div>
<div class="t" style="left:1023.64px;top:1013px;width:40px;text-align:center;color:#c4c4c4;font-size:12px">168</div>
<div class="t" style="left:1094.24px;top:1013px;width:40px;text-align:center;color:#c4c4c4;font-size:12px">180</div>
<div class="t" style="left:1164.84px;top:1013px;width:40px;text-align:center;color:#c4c4c4;font-size:12px">192</div>
<div class="t" style="left:1235.43px;top:1013px;width:40px;text-align:center;color:#c4c4c4;font-size:12px">204</div>
<div class="t" style="left:1306.03px;top:1013px;width:40px;text-align:center;color:#c4c4c4;font-size:12px">216</div>
<div class="t" style="left:1376.62px;top:1013px;width:40px;text-align:center;color:#c4c4c4;font-size:12px">228</div>
<div class="t" style="left:1447.22px;top:1013px;width:40px;text-align:center;color:#c4c4c4;font-size:12px">240</div>
<div class="t" style="left:1517.82px;top:1013px;width:40px;text-align:center;color:#c4c4c4;font-size:12px">252</div>
<div style="left:118.8px;top:1030px;width:1.5px;height:27px;background:#3d64a3"></div>
<svg style="left:107.5px;top:1010px;" width="24.5" height="25" viewBox="0 0 24.5 25"><path d="M3 0H21.5Q24.5 0 24.5 3V17Q24.5 19.5 22 20L13.5 24.5H11L2.5 20Q0 19.5 0 17V3Q0 0 3 0Z" fill="#4772b3"/></svg>
<div class="t" style="left:104.7px;top:1013px;width:30px;text-align:center;color:#fff;font-size:12px">11</div>
<svg style="left:5px;top:1032px;" width="8" height="10" viewBox="0 0 8 10"><path d="M2 1.5L5.5 5L2 8.5" fill="none" stroke="#777" stroke-width="1.1"/></svg>
<div style="left:10.5px;top:986px;width:31px;height:18px;background:#252525;border:1px solid #383838;border-radius:4px"></div>
<svg style="left:14px;top:987px;" width="16" height="16" viewBox="0 0 16 16"><circle cx="8" cy="8" r="6.8" fill="#e6e6e6"/><path d="M8 3.5V8L5 11" fill="none" stroke="#2a2a2a" stroke-width="1.6" stroke-linecap="round"/></svg>
<svg style="left:30.5px;top:991.5px;" width="10" height="8" viewBox="0 0 10 8"><path d="M1.5 2.3L5 5.8L8.5 2.3" fill="none" stroke="#ddd" stroke-width="1.3" stroke-linecap="round" stroke-linejoin="round"/></svg>
<div class="t" style="left:54.3px;top:988px;color:#e0e0e0">View</div>
<div class="t" style="left:95.6px;top:988px;color:#e0e0e0">Marker</div>
<div style="left:145.5px;top:986px;width:69.5px;height:18px;background:#252525;border:1px solid #383838;border-radius:4px"></div>
<div class="t" style="left:152.5px;top:988px;color:#e6e6e6">Playback</div>
<svg style="left:203.5px;top:991.5px;" width="10" height="8" viewBox="0 0 10 8"><path d="M1.5 2.3L5 5.8L8.5 2.3" fill="none" stroke="#ddd" stroke-width="1.3" stroke-linecap="round" stroke-linejoin="round"/></svg>
<div style="left:222px;top:986px;width:78px;height:18px;background:#252525;border:1px solid #383838;border-radius:4px"></div>
<svg style="left:228px;top:990px;" width="10" height="10" viewBox="0 0 10 10"><path d="M5 .8L9.2 5L5 9.2L.8 5Z" fill="#f2b134"/></svg>
<div class="t" style="left:247.2px;top:988px;color:#e6e6e6">Keying</div>
<svg style="left:288.5px;top:991.5px;" width="10" height="8" viewBox="0 0 10 8"><path d="M1.5 2.3L5 5.8L8.5 2.3" fill="none" stroke="#ddd" stroke-width="1.3" stroke-linecap="round" stroke-linejoin="round"/></svg>
<div style="left:677.5px;top:986px;width:19px;height:18px;background:#464646;border-radius:4px 0 0 4px"></div>
<svg style="left:679.5px;top:987px;" width="16" height="16" viewBox="0 0 16 16"><circle cx="8" cy="8" r="4.3" fill="none" stroke="#ccc" stroke-width="1.2"/></svg>
<div style="left:698px;top:986px;width:17px;height:18px;background:#2c2c2c;border-radius:0 4px 4px 0"></div>
<svg style="left:701.5px;top:991.5px;" width="10" height="8" viewBox="0 0 10 8"><path d="M1.5 2.3L5 5.8L8.5 2.3" fill="none" stroke="#484848" stroke-width="1.3" stroke-linecap="round" stroke-linejoin="round"/></svg>
<div style="left:722.5px;top:986px;width:118.5px;height:18px;background:#505050;border-radius:4px"></div>
<svg style="left:724.3px;top:987px;" width="16" height="16" viewBox="0 0 16 16"><path d="M3.5 2.8H5.6V13.2H3.5ZM13.5 2.8V13.2L6.3 8Z" fill="#fff"/></svg>
<svg style="left:744.05px;top:987px;" width="16" height="16" viewBox="0 0 16 16"><path d="M5 3.2L9.3 8L5 12.8L0.7 8ZM15.5 4V12L10.3 8Z" fill="#fff"/></svg>
<div style="left:742.25px;top:986px;width:1px;height:18px;background:#3a3a3a"></div>
<svg style="left:763.8px;top:987px;" width="16" height="16" viewBox="0 0 16 16"><path d="M13 2V14L2.5 8Z" fill="#fff"/></svg>
<div style="left:762px;top:986px;width:1px;height:18px;background:#3a3a3a"></div>
<svg style="left:783.55px;top:987px;" width="16" height="16" viewBox="0 0 16 16"><path d="M3 2V14L13.5 8Z" fill="#fff"/></svg>
<div style="left:781.75px;top:986px;width:1px;height:18px;background:#3a3a3a"></div>
<svg style="left:803.3px;top:987px;" width="16" height="16" viewBox="0 0 16 16"><path d="M11 3.2L15.3 8L11 12.8L6.7 8ZM0.5 4V12L5.7 8Z" fill="#fff"/></svg>
<div style="left:801.5px;top:986px;width:1px;height:18px;background:#3a3a3a"></div>
<svg style="left:823.05px;top:987px;" width="16" height="16" viewBox="0 0 16 16"><path d="M10.9 2.8H13V13.2H10.9ZM3 2.8V13.2L10.2 8Z" fill="#fff"/></svg>
<div style="left:821.25px;top:986px;width:1px;height:18px;background:#3a3a3a"></div>
<div style="left:847.5px;top:986px;width:19.5px;height:18px;background:#5e5e5e;border-radius:4px 0 0 4px"></div>
<svg style="left:849.5px;top:987px;" width="16" height="16" viewBox="0 0 16 16"><path d="M2.5 11.5V7.5A5.5 5.5 0 0 1 13.5 7.5V11.5M5.5 11.5V7.5A2.5 2.5 0 0 1 10.5 7.5V11.5M1.5 14H14.5" fill="none" stroke="#e6e6e6" stroke-width="1.2"/></svg>
<div style="left:867px;top:986px;width:18.5px;height:18px;background:#222;border-radius:0 4px 4px 0"></div>
<svg style="left:871.5px;top:991.5px;" width="10" height="8" viewBox="0 0 10 8"><path d="M1.5 2.3L5 5.8L8.5 2.3" fill="none" stroke="#ddd" stroke-width="1.3" stroke-linecap="round" stroke-linejoin="round"/></svg>
<div style="left:1302.5px;top:986px;width:73.5px;height:18px;background:#545454;border-radius:4px"></div>
<div class="t" style="left:1319px;top:988px;width:40px;text-align:center;color:#e6e6e6">11</div>
<div style="left:1382.5px;top:986px;width:19px;height:18px;background:#4a4a4a;border-radius:4px 0 0 4px"></div>
<svg style="left:1384px;top:987px;" width="16" height="16" viewBox="0 0 16 16"><circle cx="8" cy="9" r="5.3" fill="none" stroke="#e6e6e6" stroke-width="1.2"/><path d="M8 5.5V9H10.5M6.5 1.5H9.5M12.5 3L14 4.5" fill="none" stroke="#e6e6e6" stroke-width="1.2"/></svg>
<div style="left:1402px;top:986px;width:88px;height:18px;background:#545454"></div>
<div class="t" style="left:1417px;top:988px;color:#e6e6e6">Start</div>
<div class="t" style="right:443px;top:988px;color:#e6e6e6">1</div>
<div style="left:1491px;top:986px;width:85px;height:18px;background:#545454;border-radius:0 4px 4px 0"></div>
<div class="t" style="left:1506px;top:988px;color:#e6e6e6">End</div>
<div class="t" style="right:356.5px;top:988px;color:#e6e6e6">250</div>
<div style="left:0px;top:1057px;width:1920px;height:23px;background:#222"></div>
<div style="left:1586px;top:1040px;width:334px;height:17px;background:#212121"></div>
<svg style="left:7px;top:1062px;" width="10" height="15" viewBox="0 0 10 15"><rect x="1" y="1" width="8" height="13" rx="3" fill="none" stroke="#383838" stroke-width="1.2"/><rect x="3.5" y="2" width="3" height="5" fill="#383838"/></svg>
<div class="t" style="left:20px;top:1062px;color:#3a3a3a;font-size:12px">Pan View</div>
<svg style="left:78px;top:1062px;" width="10" height="15" viewBox="0 0 10 15"><rect x="1" y="1" width="8" height="13" rx="3" fill="none" stroke="#383838" stroke-width="1.2"/><rect x="5" y="1" width="4" height="5" fill="#383838"/></svg>
<div class="t" style="left:92px;top:1062px;color:#3a3a3a;font-size:12px">Context Menu</div>
<div class="t" style="right:12.5px;top:1062.5px;color:#333;font-size:11px">5.0.0 a</div>
<div style="left:0px;top:1034px;width:1920px;height:46px;background:linear-gradient(to bottom,rgba(0,0,0,0),rgba(0,0,0,.12) 30%,rgba(0,0,0,.2))"></div>
<svg style="left:17px;top:1051px;" width="18" height="18" viewBox="0 0 18 18"><path d="M2 1.8V16.2L15.5 9Z" fill="#fff"/></svg>
<div style="left:48px;top:1058px;width:1649.5px;height:5px;background:#5b5b5b;border-radius:2.5px"></div>
<div style="left:48px;top:1058px;width:208px;height:5px;background:#00a6ed;border-radius:2.5px"></div>
<div style="left:249.8px;top:1053.8px;width:13px;height:13px;background:#fff;border-radius:6.5px"></div>
<div class="t" style="left:1708.5px;top:1054px;color:#fff;font-size:11.3px;font-family:'DejaVu Sans','Liberation Sans',sans-serif">0:04 <span style="position:static;color:#a8a8a8">/ 0:30</span></div>
<svg style="left:1786px;top:1051px;" width="20" height="18" viewBox="0 0 20 18"><path d="M2 6.5H5.5L10 2.5V15.5L5.5 11.5H2Z" fill="#fff"/><path d="M12.5 5.5Q14.5 9 12.5 12.5M14.5 3Q18.5 9 14.5 15" fill="none" stroke="#fff" stroke-width="1.5" stroke-linecap="round"/></svg>
<div style="left:1815px;top:1058px;width:54px;height:5px;background:#fff;border-radius:2.5px"></div>
<div style="left:1861.5px;top:1053.8px;width:13px;height:13px;background:#fff;border-radius:6.5px"></div>
<svg style="left:1887px;top:1051.5px;" width="18" height="18" viewBox="0 0 18 18"><path d="M2.5 7H7V2.5M15.5 7H11V2.5M2.5 11H7V15.5M15.5 11H11V15.5" fill="none" stroke="#fff" stroke-width="1.7"/><path d="M7 7L1.5 1.5M11 7L16.5 1.5M7 11L1.5 16.5M11 11L16.5 16.5" stroke="#fff" stroke-width="1.5"/></svg>
</div>
</body></html>
